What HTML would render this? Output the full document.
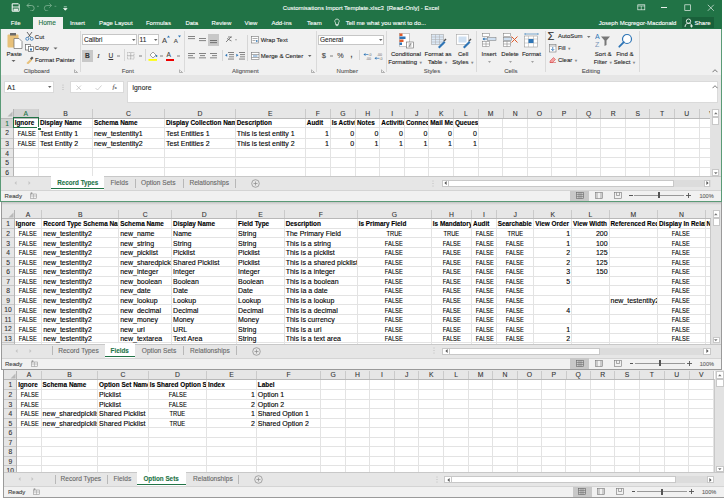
<!DOCTYPE html>
<html><head><meta charset="utf-8"><style>
html,body{margin:0;padding:0;}
body{width:724px;height:499px;overflow:hidden;position:relative;background:#fff;font-family:"Liberation Sans",sans-serif;}
body>div,body div{position:absolute;}
.t{white-space:nowrap;-webkit-text-stroke-width:0.1px;}
</style></head><body>
<div style="left:0px;top:0px;width:722px;height:29px;background:#217346;"></div>
<svg style="position:absolute;left:11px;top:3px;" width="9" height="9" viewBox="0 0 9 9"><path d="M1.2 0.8h6.2l0.8 0.8v6.6h-7z" fill="none" stroke="#fff" stroke-width="1"/><path d="M1.2 4h7" stroke="#fff" stroke-width="0.9"/><rect x="2.5" y="5.6" width="4.5" height="2.2" fill="#fff" opacity="0.85"/></svg>
<svg style="position:absolute;left:25px;top:2px;" width="34" height="9" viewBox="0 0 34 9"><path d="M2 3.5 h4.5 a2.7 2.7 0 0 1 0 5.4 h-1.2 M2 3.5 l2.2-2.2 M2 3.5 l2.2 2.2" fill="none" stroke="#8fbca0" stroke-width="0.8"/><path d="M12 4.3h1.8" stroke="#8fbca0" stroke-width="0.7"/><path d="M26.5 3.5 h-4.5 a2.7 2.7 0 0 0 0 5.4 h1.2 M26.5 3.5 l-2.2-2.2 M26.5 3.5 l-2.2 2.2" fill="none" stroke="#78ad8e" stroke-width="0.8"/><path d="M29.5 4.3h1.8" stroke="#78ad8e" stroke-width="0.7"/></svg>
<svg style="position:absolute;left:62.5px;top:5.5px;" width="5" height="5" viewBox="0 0 5 5"><path d="M0.8 0.8h3 M0.5 2.5h3.6 l-1.8 1.8z" fill="#fff" stroke="#fff" stroke-width="0.6"/></svg>
<div class="t" style="left:251.0px;width:220px;text-align:center;top:3.3000000000000007px;line-height:10px;font-size:6.0px;color:#fff;font-weight:normal;">Customisations Import Template.xlsc3&nbsp; [Read-Only] - Excel</div>
<svg style="position:absolute;left:636.5px;top:4px;" width="9" height="7" viewBox="0 0 9 7"><rect x="0.8" y="0.8" width="7" height="5" fill="none" stroke="#e8f0eb" stroke-width="0.7"/><path d="M0.8 2h7 M4.3 2v3.8" stroke="#e8f0eb" stroke-width="0.6"/></svg>
<div style="left:661px;top:7.1px;width:6px;height:0.7px;background:#e8f0eb;"></div>
<svg style="position:absolute;left:683.5px;top:4px;" width="8" height="8" viewBox="0 0 8 8"><rect x="0.8" y="0.8" width="5.6" height="5.6" fill="none" stroke="#e8f0eb" stroke-width="0.7"/></svg>
<svg style="position:absolute;left:706.5px;top:4px;" width="8" height="8" viewBox="0 0 8 8"><path d="M0.8 0.8l6 6M6.8 0.8l-6 6" stroke="#e8f0eb" stroke-width="0.7"/></svg>
<div style="left:32.5px;top:17px;width:30px;height:12px;background:#f1f1f1;"></div>
<div class="t" style="left:10.8px;top:17.8px;line-height:10px;font-size:6.0px;color:#fff;font-weight:normal;">File</div>
<div class="t" style="left:69.9px;top:17.8px;line-height:10px;font-size:6.0px;color:#fff;font-weight:normal;">Insert</div>
<div class="t" style="left:98.9px;top:17.8px;line-height:10px;font-size:6.0px;color:#fff;font-weight:normal;">Page Layout</div>
<div class="t" style="left:145.9px;top:17.8px;line-height:10px;font-size:6.0px;color:#fff;font-weight:normal;">Formulas</div>
<div class="t" style="left:185.4px;top:17.8px;line-height:10px;font-size:6.0px;color:#fff;font-weight:normal;">Data</div>
<div class="t" style="left:211.6px;top:17.8px;line-height:10px;font-size:6.0px;color:#fff;font-weight:normal;">Review</div>
<div class="t" style="left:244.5px;top:17.8px;line-height:10px;font-size:6.0px;color:#fff;font-weight:normal;">View</div>
<div class="t" style="left:271.4px;top:17.8px;line-height:10px;font-size:6.0px;color:#fff;font-weight:normal;">Add-ins</div>
<div class="t" style="left:307px;top:17.8px;line-height:10px;font-size:6.0px;color:#fff;font-weight:normal;">Team</div>
<div class="t" style="left:38.5px;top:17.8px;line-height:10px;font-size:6.5px;color:#217346;font-weight:normal;">Home</div>
<svg style="position:absolute;left:334px;top:18px;" width="6" height="9" viewBox="0 0 6 9"><path d="M3 1a2.2 2.2 0 0 1 1.4 3.9v1.6h-2.8v-1.6a2.2 2.2 0 0 1 1.4-3.9z M1.8 7.6h2.4" fill="none" stroke="#fff" stroke-width="0.7"/></svg>
<div class="t" style="left:345.7px;top:17.8px;line-height:10px;font-size:6.1px;color:#fff;font-weight:normal;">Tell me what you want to do...</div>
<div class="t" style="left:598.7px;top:17.8px;line-height:10px;font-size:6.0px;color:#fff;font-weight:normal;">Joseph Mcgregor-Macdonald</div>
<div style="left:681.7px;top:16.8px;width:32.3px;height:11.7px;background:#19603a;"></div>
<svg style="position:absolute;left:684px;top:18px;" width="10" height="10" viewBox="0 0 10 10"><circle cx="4.5" cy="3.2" r="2.2" fill="none" stroke="#fff" stroke-width="0.8"/><path d="M1 9a3.6 3.6 0 0 1 6.5-2.4 M7.5 6.5v3 M6 8h3" fill="none" stroke="#fff" stroke-width="0.8"/></svg>
<div class="t" style="left:694.5px;top:17.8px;line-height:10px;font-size:6.0px;color:#fff;font-weight:normal;">Share</div>
<div style="left:721px;top:29px;width:1px;height:172.6px;background:#5a9a76;"></div>
<div style="left:0px;top:29px;width:1px;height:172.6px;background:#5a9a76;"></div>
<div style="left:721px;top:0px;width:1px;height:29px;background:#217346;"></div>
<div style="left:0px;top:0px;width:1px;height:29px;background:#217346;"></div>
<div style="left:1px;top:29px;width:720px;height:45.7px;background:#f1f1f1;"></div>
<div style="left:1px;top:74.7px;width:720px;height:0.6px;background:#d6d6d6;"></div>
<svg style="position:absolute;left:6px;top:32px;" width="18" height="17" viewBox="0 0 18 17"><rect x="1.5" y="2.5" width="11" height="13" rx="1" fill="#e8c17a"/><rect x="4" y="1" width="6" height="2.5" fill="#6b6b6b"/><path d="M8 6.5h5l3 3v7h-8z" fill="#fff" stroke="#6b6b6b" stroke-width="0.7"/></svg>
<div class="t" style="left:6.6px;top:48.7px;line-height:10px;font-size:6.0px;color:#262626;font-weight:normal;">Paste</div>
<svg style="position:absolute;left:11px;top:59px;" width="5" height="4" viewBox="0 0 5 4"><path d="M0.5 1l2 2 2-2z" fill="#666"/></svg>
<svg style="position:absolute;left:25px;top:31px;" width="9" height="10" viewBox="0 0 9 10"><path d="M2 1l4 5.5M7 1l-4 5.5" stroke="#444" stroke-width="0.8"/><circle cx="2.3" cy="7.8" r="1.5" fill="none" stroke="#2e75b6" stroke-width="0.8"/><circle cx="6.7" cy="7.8" r="1.5" fill="none" stroke="#2e75b6" stroke-width="0.8"/></svg>
<div class="t" style="left:34.8px;top:31.6px;line-height:10px;font-size:6.0px;color:#262626;font-weight:normal;">Cut</div>
<svg style="position:absolute;left:25px;top:44px;" width="9" height="8" viewBox="0 0 9 8"><rect x="0.5" y="0.5" width="5" height="5.5" fill="#fff" stroke="#666" stroke-width="0.7"/><rect x="3.5" y="2.5" width="5" height="5" fill="#fff" stroke="#666" stroke-width="0.7"/><rect x="5" y="4.5" width="2" height="2" fill="#2e75b6"/></svg>
<div class="t" style="left:34.8px;top:43.2px;line-height:10px;font-size:6.0px;color:#262626;font-weight:normal;">Copy</div>
<svg style="position:absolute;left:53px;top:47px;" width="5" height="3" viewBox="0 0 5 3"><path d="M0.5 0.5h4l-2 2z" fill="#666"/></svg>
<svg style="position:absolute;left:25px;top:55px;" width="9" height="9" viewBox="0 0 9 9"><path d="M1.5 8l4-4 1.5 1.5-4 4z" fill="#e8c17a"/><path d="M5 3.5l2-2 1.5 1.5-2 2z" fill="#555"/></svg>
<div class="t" style="left:35.1px;top:54.5px;line-height:10px;font-size:6.0px;color:#262626;font-weight:normal;">Format Painter</div>
<div class="t" style="left:23.8px;top:65.9px;line-height:10px;font-size:6.0px;color:#555;font-weight:normal;">Clipboard</div>
<svg style="position:absolute;left:74px;top:69px;" width="4" height="4" viewBox="0 0 4 4"><path d="M0.5 0.5v3h3M1.5 1.5l2 2" fill="none" stroke="#888" stroke-width="0.6"/></svg>
<div style="left:79.6px;top:31px;width:0.7px;height:41px;background:#dadada;"></div>
<div style="left:82.3px;top:34.4px;width:55px;height:11.1px;background:#fff;border:0.6px solid #c6c6c6;box-sizing:border-box"></div>
<div class="t" style="left:84px;top:35.0px;line-height:10px;font-size:6.5px;color:#262626;font-weight:normal;">Calibri</div>
<svg style="position:absolute;left:132px;top:39px;" width="4" height="3" viewBox="0 0 4 3"><path d="M0 0h3.5l-1.75 2z" fill="#666"/></svg>
<div style="left:137.8px;top:34.4px;width:20.8px;height:11.1px;background:#fff;border:0.6px solid #c6c6c6;box-sizing:border-box"></div>
<div class="t" style="left:139.5px;top:35.0px;line-height:10px;font-size:6.5px;color:#262626;font-weight:normal;">11</div>
<svg style="position:absolute;left:153.5px;top:39px;" width="4" height="3" viewBox="0 0 4 3"><path d="M0 0h3.5l-1.75 2z" fill="#666"/></svg>
<div class="t" style="left:162px;top:35.5px;line-height:10px;font-size:7.5px;color:#444;font-weight:normal;">A</div>
<svg style="position:absolute;left:167px;top:35px;" width="3" height="3" viewBox="0 0 3 3"><path d="M0 2.5l1.5-2 1.5 2z" fill="#2e75b6"/></svg>
<div class="t" style="left:173.8px;top:36.0px;line-height:10px;font-size:6.2px;color:#444;font-weight:normal;">A</div>
<svg style="position:absolute;left:178px;top:35px;" width="3" height="3" viewBox="0 0 3 3"><path d="M0 0.5l1.5 2 1.5-2z" fill="#2e75b6"/></svg>
<div style="left:82.3px;top:50px;width:10.6px;height:11.5px;background:#c8c8c8;"></div>
<div class="t" style="left:85px;top:50.8px;line-height:10px;font-size:6.6px;color:#333;font-weight:bold;">B</div>
<div class="t" style="left:97.3px;top:50.8px;line-height:10px;font-size:6.8px;color:#333;font-weight:normal;font-style:italic;font-family:'Liberation Serif',serif">I</div>
<div class="t" style="left:108.5px;top:50.5px;line-height:10px;font-size:6.6px;color:#333;font-weight:normal;"><u>U</u></div>
<svg style="position:absolute;left:116.5px;top:54.5px;" width="4" height="2" viewBox="0 0 4 2"><path d="M0 1h3" stroke="#666" stroke-width="0.8"/></svg>
<div style="left:123.6px;top:49px;width:0.6px;height:12px;background:#d6d6d6;"></div>
<svg style="position:absolute;left:126.5px;top:52px;" width="8" height="8" viewBox="0 0 8 8"><rect x="0.5" y="0.5" width="6.5" height="6.5" fill="none" stroke="#999" stroke-width="0.6" stroke-dasharray="1 0.6"/><path d="M3.75 0.5v6.5M0.5 3.75h6.5" stroke="#999" stroke-width="0.6"/></svg>
<svg style="position:absolute;left:138.5px;top:54.5px;" width="4" height="2" viewBox="0 0 4 2"><path d="M0 1h3" stroke="#666" stroke-width="0.8"/></svg>
<div style="left:145px;top:49px;width:0.6px;height:12px;background:#d6d6d6;"></div>
<svg style="position:absolute;left:148px;top:50px;" width="10" height="11" viewBox="0 0 10 11"><path d="M2 5l3-3 3 3-3 3z" fill="#fff" stroke="#666" stroke-width="0.6"/><circle cx="8.5" cy="6" r="0.9" fill="#2e75b6"/><rect x="0.5" y="9" width="8.5" height="1.8" fill="#ffff00"/></svg>
<svg style="position:absolute;left:159.5px;top:54.5px;" width="4" height="2" viewBox="0 0 4 2"><path d="M0 1h3" stroke="#666" stroke-width="0.8"/></svg>
<div class="t" style="left:166.5px;top:50.0px;line-height:10px;font-size:6.6px;color:#444;font-weight:normal;">A</div>
<div style="left:165.7px;top:59.2px;width:8px;height:1.8px;background:#e00;"></div>
<svg style="position:absolute;left:177.3px;top:54.5px;" width="4" height="2" viewBox="0 0 4 2"><path d="M0 1h3" stroke="#666" stroke-width="0.8"/></svg>
<div class="t" style="left:121.8px;top:65.6px;line-height:10px;font-size:6.0px;color:#555;font-weight:normal;">Font</div>
<svg style="position:absolute;left:178.5px;top:69px;" width="4" height="4" viewBox="0 0 4 4"><path d="M0.5 0.5v3h3M1.5 1.5l2 2" fill="none" stroke="#888" stroke-width="0.6"/></svg>
<div style="left:183.6px;top:31px;width:0.7px;height:41px;background:#dadada;"></div>
<svg style="position:absolute;left:187.5px;top:36px;" width="8" height="5" viewBox="0 0 8 5"><rect x="0" y="0" width="7" height="0.9" fill="#777"/><rect x="0" y="2.2" width="7" height="0.9" fill="#777"/></svg>
<svg style="position:absolute;left:199px;top:37.5px;" width="8" height="5" viewBox="0 0 8 5"><rect x="0" y="0" width="7" height="0.9" fill="#777"/><rect x="0" y="2.2" width="7" height="0.9" fill="#777"/></svg>
<div style="left:207.8px;top:34.3px;width:10.8px;height:11.3px;background:#c8c8c8;"></div>
<svg style="position:absolute;left:209.5px;top:40px;" width="8" height="5" viewBox="0 0 8 5"><rect x="0" y="0" width="7" height="0.9" fill="#666"/><rect x="0" y="2.2" width="7" height="0.9" fill="#666"/></svg>
<svg style="position:absolute;left:224.9px;top:36px;" width="12" height="8" viewBox="0 0 12 8"><path d="M1 6l5-5 M2 2.5l4.5 2.5 M3 1h4" stroke="#666" stroke-width="0.8" fill="none"/><path d="M10 3.5l1 1 1-1z" fill="#666"/></svg>
<svg style="position:absolute;left:187.5px;top:52.5px;" width="8" height="7" viewBox="0 0 8 7"><rect x="0" y="0.0" width="7" height="0.9" fill="#777"/><rect x="0" y="2.2" width="5" height="0.9" fill="#777"/><rect x="0" y="4.4" width="7" height="0.9" fill="#777"/></svg>
<svg style="position:absolute;left:198.9px;top:52.5px;" width="8" height="7" viewBox="0 0 8 7"><rect x="0.0" y="0.0" width="7" height="0.9" fill="#777"/><rect x="1.0" y="2.2" width="5" height="0.9" fill="#777"/><rect x="0.0" y="4.4" width="7" height="0.9" fill="#777"/></svg>
<svg style="position:absolute;left:209.6px;top:52.5px;" width="8" height="7" viewBox="0 0 8 7"><rect x="0" y="0.0" width="7" height="0.9" fill="#777"/><rect x="2" y="2.2" width="5" height="0.9" fill="#777"/><rect x="0" y="4.4" width="7" height="0.9" fill="#777"/></svg>
<svg style="position:absolute;left:224.9px;top:51.5px;" width="9" height="8" viewBox="0 0 9 8"><rect x="3" y="0" width="6" height="0.9" fill="#777"/><rect x="4" y="2.2" width="5" height="0.9" fill="#777"/><rect x="4" y="4.4" width="5" height="0.9" fill="#777"/><rect x="3" y="6.6" width="6" height="0.9" fill="#777"/><path d="M0 3.2l2.2-1.5v3z" fill="#2e75b6"/></svg>
<svg style="position:absolute;left:235.7px;top:51.5px;" width="9" height="8" viewBox="0 0 9 8"><rect x="3" y="0" width="6" height="0.9" fill="#777"/><rect x="4" y="2.2" width="5" height="0.9" fill="#777"/><rect x="4" y="4.4" width="5" height="0.9" fill="#777"/><rect x="3" y="6.6" width="6" height="0.9" fill="#777"/><path d="M2.5 3.2l-2.2-1.5v3z" fill="#2e75b6"/></svg>
<div style="left:221.7px;top:50px;width:0.6px;height:11px;background:#d6d6d6;"></div>
<div style="left:247.3px;top:35px;width:0.6px;height:26px;background:#d6d6d6;"></div>
<svg style="position:absolute;left:250.9px;top:36px;" width="9" height="8" viewBox="0 0 9 8"><rect x="0.5" y="0.5" width="7" height="6.5" fill="#fff" stroke="#777" stroke-width="0.6"/><path d="M1.5 2.5h5M1.5 4.5h3" stroke="#777" stroke-width="0.6"/><path d="M5 4l2.5 1-2.5 1z" fill="#2e75b6"/></svg>
<div class="t" style="left:260.8px;top:35.3px;line-height:10px;font-size:6.0px;color:#262626;font-weight:normal;">Wrap Text</div>
<svg style="position:absolute;left:250.9px;top:51.5px;" width="9" height="8" viewBox="0 0 9 8"><rect x="0.5" y="0.5" width="7.5" height="7" fill="#fff" stroke="#777" stroke-width="0.6"/><path d="M0.5 2.5h7.5M0.5 5.5h7.5" stroke="#777" stroke-width="0.6"/><path d="M2 4h4.5" stroke="#2e75b6" stroke-width="0.8"/></svg>
<div class="t" style="left:260.8px;top:50.9px;line-height:10px;font-size:6.0px;color:#262626;font-weight:normal;">Merge &amp; Center</div>
<svg style="position:absolute;left:307.5px;top:55px;" width="4" height="3" viewBox="0 0 4 3"><path d="M0 0h3.5l-1.75 2z" fill="#666"/></svg>
<div class="t" style="left:232px;top:65.8px;line-height:10px;font-size:6.0px;color:#555;font-weight:normal;">Alignment</div>
<svg style="position:absolute;left:310.5px;top:69px;" width="4" height="4" viewBox="0 0 4 4"><path d="M0.5 0.5v3h3M1.5 1.5l2 2" fill="none" stroke="#888" stroke-width="0.6"/></svg>
<div style="left:315.5px;top:31px;width:0.7px;height:41px;background:#dadada;"></div>
<div style="left:318.2px;top:34.7px;width:65.4px;height:10.7px;background:#fff;border:0.6px solid #c6c6c6;box-sizing:border-box"></div>
<div class="t" style="left:320px;top:35.1px;line-height:10px;font-size:6.5px;color:#262626;font-weight:normal;">General</div>
<svg style="position:absolute;left:378.5px;top:39px;" width="4" height="3" viewBox="0 0 4 3"><path d="M0 0h3.5l-1.75 2z" fill="#666"/></svg>
<div class="t" style="left:321.8px;top:50.5px;line-height:10px;font-size:7.5px;color:#444;font-weight:normal;">$</div>
<svg style="position:absolute;left:330px;top:54.5px;" width="4" height="2" viewBox="0 0 4 2"><path d="M0 1h3" stroke="#666" stroke-width="0.8"/></svg>
<div class="t" style="left:337.3px;top:50.5px;line-height:10px;font-size:7.2px;color:#444;font-weight:normal;">%</div>
<div class="t" style="left:350.5px;top:50.0px;line-height:10px;font-size:7px;color:#444;font-weight:bold;">,</div>
<div style="left:359.4px;top:50px;width:0.6px;height:10px;background:#d6d6d6;"></div>
<svg style="position:absolute;left:362.5px;top:51.5px;" width="9" height="8" viewBox="0 0 9 8"><path d="M0.5 2.5l2-1.5v3z" fill="#2e75b6"/><path d="M2.5 2.5h3" stroke="#2e75b6" stroke-width="0.7"/><text x="5.5" y="3.6" font-size="3.6" fill="#666" font-family="Liberation Sans">.0</text><text x="3" y="7.5" font-size="3.6" fill="#666" font-family="Liberation Sans">.00</text></svg>
<svg style="position:absolute;left:373.9px;top:51.5px;" width="9" height="8" viewBox="0 0 9 8"><text x="3" y="3.6" font-size="3.6" fill="#666" font-family="Liberation Sans">.00</text><path d="M0.5 6.3l2-1.5v3z" fill="#2e75b6"/><path d="M2.5 6.3h3" stroke="#2e75b6" stroke-width="0.7"/><text x="5.5" y="7.5" font-size="3.6" fill="#666" font-family="Liberation Sans">.0</text></svg>
<div class="t" style="left:336.6px;top:66.0px;line-height:10px;font-size:6.0px;color:#555;font-weight:normal;">Number</div>
<svg style="position:absolute;left:381px;top:69px;" width="4" height="4" viewBox="0 0 4 4"><path d="M0.5 0.5v3h3M1.5 1.5l2 2" fill="none" stroke="#888" stroke-width="0.6"/></svg>
<div style="left:385.6px;top:31px;width:0.7px;height:41px;background:#dadada;"></div>
<svg style="position:absolute;left:398.5px;top:32.5px;" width="16" height="16" viewBox="0 0 16 16"><g stroke="#999" stroke-width="0.5" fill="#fff"><rect x="0.5" y="0.5" width="10" height="13"/></g><rect x="0.5" y="0.5" width="3" height="2.5" fill="#e05a2b"/><rect x="0.5" y="3.5" width="6" height="2.5" fill="#2e75b6"/><rect x="0.5" y="6.5" width="4" height="2.5" fill="#e05a2b"/><rect x="0.5" y="9.5" width="2.5" height="2.5" fill="#2e75b6"/><rect x="7.5" y="9" width="7" height="6" fill="#fff" stroke="#666" stroke-width="0.6"/><path d="M9.5 11h3M9.5 13h3M12 10.3l-2 3.5" stroke="#444" stroke-width="0.5"/></svg>
<div class="t" style="left:376.0px;width:60px;text-align:center;top:48.6px;line-height:10px;font-size:6.0px;color:#262626;font-weight:normal;">Conditional</div>
<div class="t" style="left:375.5px;width:60px;text-align:center;top:56.5px;line-height:10px;font-size:6.0px;color:#262626;font-weight:normal;">Formatting <span style="font-size:4px;color:#888;vertical-align:0.5px">&#9660;</span></div>
<svg style="position:absolute;left:431px;top:33.5px;" width="16" height="15" viewBox="0 0 16 15"><rect x="0.5" y="0.5" width="12" height="10" fill="#dbe8f5" stroke="#999" stroke-width="0.5"/><path d="M0.5 3h12M0.5 5.5h12M0.5 8h12M4.5 0.5v10M8.5 0.5v10" stroke="#aaa" stroke-width="0.5"/><path d="M7 13l6-6 1.5 1.5-6 6z" fill="#2e75b6"/><path d="M12.5 6.5l2-2 1 1-2 2z" fill="#555"/></svg>
<div class="t" style="left:408.0px;width:60px;text-align:center;top:48.6px;line-height:10px;font-size:6.0px;color:#262626;font-weight:normal;">Format as</div>
<div class="t" style="left:408.0px;width:60px;text-align:center;top:56.5px;line-height:10px;font-size:6.0px;color:#262626;font-weight:normal;">Table <span style="font-size:4px;color:#888;vertical-align:0.5px">&#9660;</span></div>
<svg style="position:absolute;left:456px;top:33.5px;" width="16" height="15" viewBox="0 0 16 15"><rect x="0.5" y="0.5" width="12" height="10" fill="#fff" stroke="#999" stroke-width="0.5"/><rect x="2.5" y="2.5" width="8" height="6" fill="#cfe0f1"/><path d="M7 13l6-6 1.5 1.5-6 6z" fill="#2e75b6"/><path d="M12.5 6.5l2-2 1 1-2 2z" fill="#555"/></svg>
<div class="t" style="left:443.2px;width:40px;text-align:center;top:48.6px;line-height:10px;font-size:6.0px;color:#262626;font-weight:normal;">Cell</div>
<div class="t" style="left:443.2px;width:40px;text-align:center;top:56.5px;line-height:10px;font-size:6.0px;color:#262626;font-weight:normal;">Styles <span style="font-size:4px;color:#888;vertical-align:0.5px">&#9660;</span></div>
<div class="t" style="left:423.8px;top:66.0px;line-height:10px;font-size:6.0px;color:#555;font-weight:normal;">Styles</div>
<div style="left:476.3px;top:31px;width:0.7px;height:41px;background:#dadada;"></div>
<svg style="position:absolute;left:482px;top:33px;" width="15" height="14" viewBox="0 0 15 14"><rect x="0.5" y="0.5" width="7" height="3" fill="#fff" stroke="#777" stroke-width="0.5"/><rect x="5.5" y="4.5" width="8.5" height="3" fill="#cfe0f1" stroke="#777" stroke-width="0.5"/><path d="M1 6h4" stroke="#2e75b6" stroke-width="0.9"/><path d="M0.5 6l2-1.5v3z" fill="#2e75b6"/><rect x="0.5" y="8.5" width="7" height="5" fill="#fff" stroke="#777" stroke-width="0.5"/><path d="M0.5 11h7M4 8.5v5" stroke="#777" stroke-width="0.5"/></svg>
<div class="t" style="left:469.0px;width:40px;text-align:center;top:48.6px;line-height:10px;font-size:6.0px;color:#262626;font-weight:normal;">Insert</div>
<svg style="position:absolute;left:487px;top:60px;" width="5" height="4" viewBox="0 0 5 4"><path d="M1 1.2l1.5 1.5 1.5-1.5z" fill="#888"/></svg>
<svg style="position:absolute;left:502.5px;top:33px;" width="16" height="14" viewBox="0 0 16 14"><rect x="0.5" y="0.5" width="7" height="3" fill="#fff" stroke="#777" stroke-width="0.5"/><rect x="0.5" y="4.5" width="8" height="3" fill="#cfe0f1" stroke="#777" stroke-width="0.5"/><rect x="0.5" y="8.5" width="7" height="5" fill="#fff" stroke="#777" stroke-width="0.5"/><path d="M0.5 11h7M4 8.5v5" stroke="#777" stroke-width="0.5"/><path d="M8.5 3.5l6 6M14.5 3.5l-6 6" stroke="#e05a2b" stroke-width="1"/></svg>
<div class="t" style="left:490.0px;width:40px;text-align:center;top:48.6px;line-height:10px;font-size:6.0px;color:#262626;font-weight:normal;">Delete</div>
<svg style="position:absolute;left:507.8px;top:60px;" width="5" height="4" viewBox="0 0 5 4"><path d="M1 1.2l1.5 1.5 1.5-1.5z" fill="#888"/></svg>
<svg style="position:absolute;left:523.5px;top:32.5px;" width="16" height="15" viewBox="0 0 16 15"><path d="M1 1h13M1 0v2M14 0v2" stroke="#2e75b6" stroke-width="0.6"/><rect x="0.5" y="3" width="13" height="11" fill="#fff" stroke="#888" stroke-width="0.5"/><path d="M0.5 6h13M0.5 10h13M4.5 3v11M9.5 3v11" stroke="#aaa" stroke-width="0.5"/><rect x="4.5" y="6" width="5" height="4" fill="#2e75b6"/></svg>
<div class="t" style="left:511.4px;width:40px;text-align:center;top:48.6px;line-height:10px;font-size:6.0px;color:#262626;font-weight:normal;">Format</div>
<svg style="position:absolute;left:529.5px;top:60px;" width="5" height="4" viewBox="0 0 5 4"><path d="M1 1.2l1.5 1.5 1.5-1.5z" fill="#888"/></svg>
<div class="t" style="left:504.2px;top:66.0px;line-height:10px;font-size:6.0px;color:#555;font-weight:normal;">Cells</div>
<div style="left:544.5px;top:31px;width:0.7px;height:41px;background:#dadada;"></div>
<div class="t" style="left:547.5px;top:30.299999999999997px;line-height:12px;font-size:11px;color:#333;font-weight:normal;">&Sigma;</div>
<div class="t" style="left:557.9px;top:31.4px;line-height:10px;font-size:6.0px;color:#262626;font-weight:normal;">AutoSum</div>
<svg style="position:absolute;left:587px;top:35.5px;" width="4" height="3" viewBox="0 0 4 3"><path d="M0 0h3.5l-1.75 2z" fill="#777"/></svg>
<svg style="position:absolute;left:548.5px;top:43.5px;" width="8" height="9" viewBox="0 0 8 9"><rect x="0.5" y="0.5" width="6.5" height="7.5" fill="#fff" stroke="#777" stroke-width="0.6"/><path d="M0.5 2h6.5" stroke="#777" stroke-width="0.6"/><path d="M3.75 3v3.5M2.2 5l1.55 1.6 1.55-1.6" fill="none" stroke="#2e75b6" stroke-width="0.8"/></svg>
<div class="t" style="left:557.9px;top:42.8px;line-height:10px;font-size:6.0px;color:#262626;font-weight:normal;">Fill <span style="font-size:4px;color:#888;vertical-align:0.5px">&#9660;</span></div>
<svg style="position:absolute;left:549px;top:56px;" width="8" height="7" viewBox="0 0 8 7"><path d="M1 5l3.5-3.5 2 2-3.5 3.5h-2z" fill="#f4a0a0" stroke="#d04040" stroke-width="0.5"/><path d="M1 6.5h6" stroke="#d04040" stroke-width="0.5"/></svg>
<div class="t" style="left:557.9px;top:54.7px;line-height:10px;font-size:6.0px;color:#262626;font-weight:normal;">Clear <span style="font-size:4px;color:#888;vertical-align:0.5px">&#9660;</span></div>
<svg style="position:absolute;left:595px;top:33px;" width="16" height="14" viewBox="0 0 16 14"><text x="0" y="6" font-size="7" fill="#2e75b6" font-family="Liberation Sans">A</text><text x="0" y="13.5" font-size="7" fill="#7a96b8" font-family="Liberation Sans">Z</text><path d="M6 3.5h9l-3.5 4v4.5l-2 1v-5.5z" fill="#777"/></svg>
<div class="t" style="left:583.2px;width:40px;text-align:center;top:48.6px;line-height:10px;font-size:6.0px;color:#262626;font-weight:normal;">Sort &amp;</div>
<div class="t" style="left:583.2px;width:40px;text-align:center;top:56.5px;line-height:10px;font-size:6.0px;color:#262626;font-weight:normal;">Filter <span style="font-size:4px;color:#888;vertical-align:0.5px">&#9660;</span></div>
<svg style="position:absolute;left:617.5px;top:32.5px;" width="15" height="15" viewBox="0 0 15 15"><circle cx="9" cy="6" r="4.5" fill="#fff" stroke="#2e75b6" stroke-width="1.2"/><path d="M5.8 9.2l-4.5 4.5" stroke="#2e75b6" stroke-width="1.8" stroke-linecap="round"/></svg>
<div class="t" style="left:604.8px;width:40px;text-align:center;top:48.6px;line-height:10px;font-size:6.0px;color:#262626;font-weight:normal;">Find &amp;</div>
<div class="t" style="left:604.8px;width:40px;text-align:center;top:56.5px;line-height:10px;font-size:6.0px;color:#262626;font-weight:normal;">Select <span style="font-size:4px;color:#888;vertical-align:0.5px">&#9660;</span></div>
<div class="t" style="left:581.8px;top:66.0px;line-height:10px;font-size:6.0px;color:#555;font-weight:normal;">Editing</div>
<div style="left:638.5px;top:31px;width:0.7px;height:41px;background:#dadada;"></div>
<svg style="position:absolute;left:711.5px;top:69px;" width="6" height="4" viewBox="0 0 6 4"><path d="M0.5 3.2l2.5-2.5 2.5 2.5" fill="none" stroke="#555" stroke-width="0.8"/></svg>
<div style="left:1px;top:75.3px;width:720px;height:33.7px;background:#e6e6e6;"></div>
<div style="left:3.7px;top:80.8px;width:50.6px;height:12.4px;background:#fff;border:0.6px solid #dadada;box-sizing:border-box"></div>
<div class="t" style="left:7.3px;top:82.8px;line-height:10px;font-size:6.6px;color:#262626;font-weight:normal;">A1</div>
<svg style="position:absolute;left:47.5px;top:85.5px;" width="4" height="3" viewBox="0 0 4 3"><path d="M0 0h3.5l-1.75 2z" fill="#666"/></svg>
<svg style="position:absolute;left:61.5px;top:84px;" width="2" height="7" viewBox="0 0 2 7"><circle cx="1" cy="1" r="0.5" fill="#aaa"/><circle cx="1" cy="3.2" r="0.5" fill="#aaa"/><circle cx="1" cy="5.4" r="0.5" fill="#aaa"/></svg>
<div style="left:70px;top:80.8px;width:54.3px;height:12.4px;background:#fff;border:0.6px solid #dadada;box-sizing:border-box"></div>
<svg style="position:absolute;left:76.3px;top:84.5px;" width="6" height="6" viewBox="0 0 6 6"><path d="M0.5 0.5l4.5 4.5M5 0.5l-4.5 4.5" stroke="#bbb" stroke-width="0.7"/></svg>
<svg style="position:absolute;left:94.5px;top:84.5px;" width="7" height="6" viewBox="0 0 7 6"><path d="M0.5 3l2 2 4-4.5" fill="none" stroke="#bbb" stroke-width="0.7"/></svg>
<div class="t" style="left:112.5px;top:81.8px;line-height:10px;font-size:7px;color:#555;font-weight:normal;font-family:'Liberation Serif',serif"><i>f</i><span style="font-size:4.5px">x</span></div>
<div style="left:126.8px;top:80.8px;width:591.5px;height:22.2px;background:#fff;border:0.6px solid #dadada;box-sizing:border-box"></div>
<div class="t" style="left:132.2px;top:82.8px;line-height:10px;font-size:6.8px;color:#262626;font-weight:normal;">Ignore</div>
<svg style="position:absolute;left:711.5px;top:85px;" width="6" height="4" viewBox="0 0 6 4"><path d="M0.5 3.2l2.5-2.5 2.5 2.5" fill="none" stroke="#555" stroke-width="0.8"/></svg>
<div style="left:1px;top:109px;width:709.2px;height:8.799999999999997px;background:#e6e6e6;"></div>
<div style="left:1px;top:117.8px;width:12.3px;height:58.39999999999999px;background:#e6e6e6;"></div>
<div style="left:13.3px;top:117.8px;width:696.9000000000001px;height:58.39999999999999px;background:#fff;"></div>
<div style="left:13.3px;top:109px;width:25.2px;height:8.799999999999997px;background:#d2d2d2;"></div>
<div style="left:1px;top:117.8px;width:12.3px;height:9.900000000000006px;background:#d2d2d2;"></div>
<svg style="position:absolute;left:6.800000000000001px;top:111.3px;" width="6" height="6" viewBox="0 0 6 6"><path d="M5.5 0.5v5h-5z" fill="#b8b8b8"/></svg>
<div style="left:38.0px;top:109px;width:0.8px;height:8.799999999999997px;background:#cacaca;"></div>
<div style="left:37.9px;top:117.8px;width:0.8px;height:58.39999999999999px;background:#e3e3e3;"></div>
<div style="left:92.0px;top:109px;width:0.8px;height:8.799999999999997px;background:#cacaca;"></div>
<div style="left:91.9px;top:117.8px;width:0.8px;height:58.39999999999999px;background:#e3e3e3;"></div>
<div style="left:164.1px;top:109px;width:0.8px;height:8.799999999999997px;background:#cacaca;"></div>
<div style="left:164.0px;top:117.8px;width:0.8px;height:58.39999999999999px;background:#e3e3e3;"></div>
<div style="left:234.8px;top:109px;width:0.8px;height:8.799999999999997px;background:#cacaca;"></div>
<div style="left:234.70000000000002px;top:117.8px;width:0.8px;height:58.39999999999999px;background:#e3e3e3;"></div>
<div style="left:304.9px;top:109px;width:0.8px;height:8.799999999999997px;background:#cacaca;"></div>
<div style="left:304.79999999999995px;top:117.8px;width:0.8px;height:58.39999999999999px;background:#e3e3e3;"></div>
<div style="left:329.8px;top:109px;width:0.8px;height:8.799999999999997px;background:#cacaca;"></div>
<div style="left:329.7px;top:117.8px;width:0.8px;height:58.39999999999999px;background:#e3e3e3;"></div>
<div style="left:355.1px;top:109px;width:0.8px;height:8.799999999999997px;background:#cacaca;"></div>
<div style="left:355.0px;top:117.8px;width:0.8px;height:58.39999999999999px;background:#e3e3e3;"></div>
<div style="left:379.4px;top:109px;width:0.8px;height:8.799999999999997px;background:#cacaca;"></div>
<div style="left:379.29999999999995px;top:117.8px;width:0.8px;height:58.39999999999999px;background:#e3e3e3;"></div>
<div style="left:404.0px;top:109px;width:0.8px;height:8.799999999999997px;background:#cacaca;"></div>
<div style="left:403.9px;top:117.8px;width:0.8px;height:58.39999999999999px;background:#e3e3e3;"></div>
<div style="left:428.4px;top:109px;width:0.8px;height:8.799999999999997px;background:#cacaca;"></div>
<div style="left:428.29999999999995px;top:117.8px;width:0.8px;height:58.39999999999999px;background:#e3e3e3;"></div>
<div style="left:453.0px;top:109px;width:0.8px;height:8.799999999999997px;background:#cacaca;"></div>
<div style="left:452.9px;top:117.8px;width:0.8px;height:58.39999999999999px;background:#e3e3e3;"></div>
<div style="left:477.9px;top:109px;width:0.8px;height:8.799999999999997px;background:#cacaca;"></div>
<div style="left:477.79999999999995px;top:117.8px;width:0.8px;height:58.39999999999999px;background:#e3e3e3;"></div>
<div style="left:502.5px;top:109px;width:0.8px;height:8.799999999999997px;background:#cacaca;"></div>
<div style="left:502.4px;top:117.8px;width:0.8px;height:58.39999999999999px;background:#e3e3e3;"></div>
<div style="left:526.7px;top:109px;width:0.8px;height:8.799999999999997px;background:#cacaca;"></div>
<div style="left:526.6px;top:117.8px;width:0.8px;height:58.39999999999999px;background:#e3e3e3;"></div>
<div style="left:551.3px;top:109px;width:0.8px;height:8.799999999999997px;background:#cacaca;"></div>
<div style="left:551.1999999999999px;top:117.8px;width:0.8px;height:58.39999999999999px;background:#e3e3e3;"></div>
<div style="left:575.9px;top:109px;width:0.8px;height:8.799999999999997px;background:#cacaca;"></div>
<div style="left:575.8px;top:117.8px;width:0.8px;height:58.39999999999999px;background:#e3e3e3;"></div>
<div style="left:600.2px;top:109px;width:0.8px;height:8.799999999999997px;background:#cacaca;"></div>
<div style="left:600.1px;top:117.8px;width:0.8px;height:58.39999999999999px;background:#e3e3e3;"></div>
<div style="left:625.1px;top:109px;width:0.8px;height:8.799999999999997px;background:#cacaca;"></div>
<div style="left:625.0px;top:117.8px;width:0.8px;height:58.39999999999999px;background:#e3e3e3;"></div>
<div style="left:649.4px;top:109px;width:0.8px;height:8.799999999999997px;background:#cacaca;"></div>
<div style="left:649.3px;top:117.8px;width:0.8px;height:58.39999999999999px;background:#e3e3e3;"></div>
<div style="left:674.0px;top:109px;width:0.8px;height:8.799999999999997px;background:#cacaca;"></div>
<div style="left:673.9px;top:117.8px;width:0.8px;height:58.39999999999999px;background:#e3e3e3;"></div>
<div style="left:698.6px;top:109px;width:0.8px;height:8.799999999999997px;background:#cacaca;"></div>
<div style="left:698.5px;top:117.8px;width:0.8px;height:58.39999999999999px;background:#e3e3e3;"></div>
<div style="left:13.3px;top:127.4px;width:696.9000000000001px;height:0.7px;background:#e3e3e3;"></div>
<div style="left:1px;top:127.4px;width:12.3px;height:0.7px;background:#c8c8c8;"></div>
<div style="left:13.3px;top:137.89999999999998px;width:696.9000000000001px;height:0.7px;background:#e3e3e3;"></div>
<div style="left:1px;top:137.89999999999998px;width:12.3px;height:0.7px;background:#c8c8c8;"></div>
<div style="left:13.3px;top:148.0px;width:696.9000000000001px;height:0.7px;background:#e3e3e3;"></div>
<div style="left:1px;top:148.0px;width:12.3px;height:0.7px;background:#c8c8c8;"></div>
<div style="left:13.3px;top:157.39999999999998px;width:696.9000000000001px;height:0.7px;background:#e3e3e3;"></div>
<div style="left:1px;top:157.39999999999998px;width:12.3px;height:0.7px;background:#c8c8c8;"></div>
<div style="left:13.3px;top:167.1px;width:696.9000000000001px;height:0.7px;background:#e3e3e3;"></div>
<div style="left:1px;top:167.1px;width:12.3px;height:0.7px;background:#c8c8c8;"></div>
<div style="left:1px;top:117.6px;width:709.2px;height:0.9px;background:#b8b8b8;"></div>
<div style="left:709.6px;top:117.8px;width:0.8px;height:58.39999999999999px;background:#c8c8c8;"></div>
<div style="left:12.8px;top:109px;width:0.8px;height:67.19999999999999px;background:#b4b4b4;"></div>
<div style="left:13.3px;top:109px;width:25.2px;height:8.799999999999997px;overflow:hidden;"><div class="t" style="position:absolute;left:0;width:25.2px;text-align:center;top:0.7px;line-height:8.799999999999997px;font-size:6.8px;color:#217346;-webkit-text-stroke:0.1px #217346">A</div></div>
<div style="left:38.5px;top:109px;width:54.0px;height:8.799999999999997px;overflow:hidden;"><div class="t" style="position:absolute;left:0;width:54.0px;text-align:center;top:0.7px;line-height:8.799999999999997px;font-size:6.8px;color:#333;-webkit-text-stroke:0.1px #333">B</div></div>
<div style="left:92.5px;top:109px;width:72.1px;height:8.799999999999997px;overflow:hidden;"><div class="t" style="position:absolute;left:0;width:72.1px;text-align:center;top:0.7px;line-height:8.799999999999997px;font-size:6.8px;color:#333;-webkit-text-stroke:0.1px #333">C</div></div>
<div style="left:164.6px;top:109px;width:70.70000000000002px;height:8.799999999999997px;overflow:hidden;"><div class="t" style="position:absolute;left:0;width:70.70000000000002px;text-align:center;top:0.7px;line-height:8.799999999999997px;font-size:6.8px;color:#333;-webkit-text-stroke:0.1px #333">D</div></div>
<div style="left:235.3px;top:109px;width:70.09999999999997px;height:8.799999999999997px;overflow:hidden;"><div class="t" style="position:absolute;left:0;width:70.09999999999997px;text-align:center;top:0.7px;line-height:8.799999999999997px;font-size:6.8px;color:#333;-webkit-text-stroke:0.1px #333">E</div></div>
<div style="left:305.4px;top:109px;width:24.900000000000034px;height:8.799999999999997px;overflow:hidden;"><div class="t" style="position:absolute;left:0;width:24.900000000000034px;text-align:center;top:0.7px;line-height:8.799999999999997px;font-size:6.8px;color:#333;-webkit-text-stroke:0.1px #333">F</div></div>
<div style="left:330.3px;top:109px;width:25.30000000000001px;height:8.799999999999997px;overflow:hidden;"><div class="t" style="position:absolute;left:0;width:25.30000000000001px;text-align:center;top:0.7px;line-height:8.799999999999997px;font-size:6.8px;color:#333;-webkit-text-stroke:0.1px #333">G</div></div>
<div style="left:355.6px;top:109px;width:24.299999999999955px;height:8.799999999999997px;overflow:hidden;"><div class="t" style="position:absolute;left:0;width:24.299999999999955px;text-align:center;top:0.7px;line-height:8.799999999999997px;font-size:6.8px;color:#333;-webkit-text-stroke:0.1px #333">H</div></div>
<div style="left:379.9px;top:109px;width:24.600000000000023px;height:8.799999999999997px;overflow:hidden;"><div class="t" style="position:absolute;left:0;width:24.600000000000023px;text-align:center;top:0.7px;line-height:8.799999999999997px;font-size:6.8px;color:#333;-webkit-text-stroke:0.1px #333">I</div></div>
<div style="left:404.5px;top:109px;width:24.399999999999977px;height:8.799999999999997px;overflow:hidden;"><div class="t" style="position:absolute;left:0;width:24.399999999999977px;text-align:center;top:0.7px;line-height:8.799999999999997px;font-size:6.8px;color:#333;-webkit-text-stroke:0.1px #333">J</div></div>
<div style="left:428.9px;top:109px;width:24.600000000000023px;height:8.799999999999997px;overflow:hidden;"><div class="t" style="position:absolute;left:0;width:24.600000000000023px;text-align:center;top:0.7px;line-height:8.799999999999997px;font-size:6.8px;color:#333;-webkit-text-stroke:0.1px #333">K</div></div>
<div style="left:453.5px;top:109px;width:24.899999999999977px;height:8.799999999999997px;overflow:hidden;"><div class="t" style="position:absolute;left:0;width:24.899999999999977px;text-align:center;top:0.7px;line-height:8.799999999999997px;font-size:6.8px;color:#333;-webkit-text-stroke:0.1px #333">L</div></div>
<div style="left:478.4px;top:109px;width:24.600000000000023px;height:8.799999999999997px;overflow:hidden;"><div class="t" style="position:absolute;left:0;width:24.600000000000023px;text-align:center;top:0.7px;line-height:8.799999999999997px;font-size:6.8px;color:#333;-webkit-text-stroke:0.1px #333">M</div></div>
<div style="left:503px;top:109px;width:24.200000000000045px;height:8.799999999999997px;overflow:hidden;"><div class="t" style="position:absolute;left:0;width:24.200000000000045px;text-align:center;top:0.7px;line-height:8.799999999999997px;font-size:6.8px;color:#333;-webkit-text-stroke:0.1px #333">N</div></div>
<div style="left:527.2px;top:109px;width:24.59999999999991px;height:8.799999999999997px;overflow:hidden;"><div class="t" style="position:absolute;left:0;width:24.59999999999991px;text-align:center;top:0.7px;line-height:8.799999999999997px;font-size:6.8px;color:#333;-webkit-text-stroke:0.1px #333">O</div></div>
<div style="left:551.8px;top:109px;width:24.600000000000023px;height:8.799999999999997px;overflow:hidden;"><div class="t" style="position:absolute;left:0;width:24.600000000000023px;text-align:center;top:0.7px;line-height:8.799999999999997px;font-size:6.8px;color:#333;-webkit-text-stroke:0.1px #333">P</div></div>
<div style="left:576.4px;top:109px;width:24.300000000000068px;height:8.799999999999997px;overflow:hidden;"><div class="t" style="position:absolute;left:0;width:24.300000000000068px;text-align:center;top:0.7px;line-height:8.799999999999997px;font-size:6.8px;color:#333;-webkit-text-stroke:0.1px #333">Q</div></div>
<div style="left:600.7px;top:109px;width:24.899999999999977px;height:8.799999999999997px;overflow:hidden;"><div class="t" style="position:absolute;left:0;width:24.899999999999977px;text-align:center;top:0.7px;line-height:8.799999999999997px;font-size:6.8px;color:#333;-webkit-text-stroke:0.1px #333">R</div></div>
<div style="left:625.6px;top:109px;width:24.299999999999955px;height:8.799999999999997px;overflow:hidden;"><div class="t" style="position:absolute;left:0;width:24.299999999999955px;text-align:center;top:0.7px;line-height:8.799999999999997px;font-size:6.8px;color:#333;-webkit-text-stroke:0.1px #333">S</div></div>
<div style="left:649.9px;top:109px;width:24.600000000000023px;height:8.799999999999997px;overflow:hidden;"><div class="t" style="position:absolute;left:0;width:24.600000000000023px;text-align:center;top:0.7px;line-height:8.799999999999997px;font-size:6.8px;color:#333;-webkit-text-stroke:0.1px #333">T</div></div>
<div style="left:674.5px;top:109px;width:24.600000000000023px;height:8.799999999999997px;overflow:hidden;"><div class="t" style="position:absolute;left:0;width:24.600000000000023px;text-align:center;top:0.7px;line-height:8.799999999999997px;font-size:6.8px;color:#333;-webkit-text-stroke:0.1px #333">U</div></div>
<div style="left:699.1px;top:109px;width:11.100000000000023px;height:8.799999999999997px;overflow:hidden;"><div class="t" style="position:absolute;left:0;width:24.899999999999977px;text-align:center;top:0.7px;line-height:8.799999999999997px;font-size:6.8px;color:#333;-webkit-text-stroke:0.1px #333">V</div></div>
<div style="left:1px;top:117.8px;width:12.3px;height:9.900000000000006px;overflow:hidden;"><div class="t" style="position:absolute;left:0;width:12.3px;text-align:center;top:0.8px;line-height:9.900000000000006px;font-size:6.7px;color:#217346;-webkit-text-stroke:0.1px #217346">1</div></div>
<div style="left:1px;top:127.7px;width:12.3px;height:10.499999999999986px;overflow:hidden;"><div class="t" style="position:absolute;left:0;width:12.3px;text-align:center;top:0.8px;line-height:10.499999999999986px;font-size:6.7px;color:#333;-webkit-text-stroke:0.1px #333">2</div></div>
<div style="left:1px;top:138.2px;width:12.3px;height:10.100000000000023px;overflow:hidden;"><div class="t" style="position:absolute;left:0;width:12.3px;text-align:center;top:0.8px;line-height:10.100000000000023px;font-size:6.7px;color:#333;-webkit-text-stroke:0.1px #333">3</div></div>
<div style="left:1px;top:148.3px;width:12.3px;height:9.399999999999977px;overflow:hidden;"><div class="t" style="position:absolute;left:0;width:12.3px;text-align:center;top:0.8px;line-height:9.399999999999977px;font-size:6.7px;color:#333;-webkit-text-stroke:0.1px #333">4</div></div>
<div style="left:1px;top:157.7px;width:12.3px;height:9.700000000000017px;overflow:hidden;"><div class="t" style="position:absolute;left:0;width:12.3px;text-align:center;top:0.8px;line-height:9.700000000000017px;font-size:6.7px;color:#333;-webkit-text-stroke:0.1px #333">5</div></div>
<div style="left:1px;top:167.4px;width:12.3px;height:8.799999999999983px;overflow:hidden;"><div class="t" style="position:absolute;left:0;width:12.3px;text-align:center;top:0.8px;line-height:9.699999999999989px;font-size:6.7px;color:#333;-webkit-text-stroke:0.1px #333">6</div></div>
<div style="left:13.700000000000001px;top:117.8px;width:24.4px;height:10.200000000000006px;overflow:hidden;"><div class="t" style="position:absolute;left:0;right:0;padding:0 1.1px 0 1.0px;text-align:left;top:0.6px;line-height:9.900000000000006px;font-size:6.4px;font-weight:bold;color:#000;white-space:nowrap;-webkit-text-stroke:0.12px #000"><span style="display:inline-block;">Ignore</span></div></div>
<div style="left:38.9px;top:117.8px;width:53.2px;height:10.200000000000006px;overflow:hidden;"><div class="t" style="position:absolute;left:0;right:0;padding:0 1.1px 0 1.0px;text-align:left;top:0.6px;line-height:9.900000000000006px;font-size:6.4px;font-weight:bold;color:#000;white-space:nowrap;-webkit-text-stroke:0.12px #000"><span style="display:inline-block;">Display Name</span></div></div>
<div style="left:92.9px;top:117.8px;width:71.3px;height:10.200000000000006px;overflow:hidden;"><div class="t" style="position:absolute;left:0;right:0;padding:0 1.1px 0 1.0px;text-align:left;top:0.6px;line-height:9.900000000000006px;font-size:6.4px;font-weight:bold;color:#000;white-space:nowrap;-webkit-text-stroke:0.12px #000"><span style="display:inline-block;">Schema Name</span></div></div>
<div style="left:165.0px;top:117.8px;width:69.90000000000002px;height:10.200000000000006px;overflow:hidden;"><div class="t" style="position:absolute;left:0;right:0;padding:0 1.1px 0 1.0px;text-align:left;top:0.6px;line-height:9.900000000000006px;font-size:6.4px;font-weight:bold;color:#000;white-space:nowrap;-webkit-text-stroke:0.12px #000"><span style="display:inline-block;">Display Collection Name</span></div></div>
<div style="left:235.70000000000002px;top:117.8px;width:69.29999999999997px;height:10.200000000000006px;overflow:hidden;"><div class="t" style="position:absolute;left:0;right:0;padding:0 1.1px 0 1.0px;text-align:left;top:0.6px;line-height:9.900000000000006px;font-size:6.4px;font-weight:bold;color:#000;white-space:nowrap;-webkit-text-stroke:0.12px #000"><span style="display:inline-block;">Description</span></div></div>
<div style="left:305.79999999999995px;top:117.8px;width:24.100000000000033px;height:10.200000000000006px;overflow:hidden;"><div class="t" style="position:absolute;left:0;right:0;padding:0 1.1px 0 1.0px;text-align:left;top:0.6px;line-height:9.900000000000006px;font-size:6.4px;font-weight:bold;color:#000;white-space:nowrap;-webkit-text-stroke:0.12px #000"><span style="display:inline-block;">Audit</span></div></div>
<div style="left:330.7px;top:117.8px;width:24.50000000000001px;height:10.200000000000006px;overflow:hidden;"><div class="t" style="position:absolute;left:0;right:0;padding:0 1.1px 0 1.0px;text-align:left;top:0.6px;line-height:9.900000000000006px;font-size:6.4px;font-weight:bold;color:#000;white-space:nowrap;-webkit-text-stroke:0.12px #000"><span style="display:inline-block;">Is Activity</span></div></div>
<div style="left:356.0px;top:117.8px;width:23.499999999999954px;height:10.200000000000006px;overflow:hidden;"><div class="t" style="position:absolute;left:0;right:0;padding:0 1.1px 0 1.0px;text-align:left;top:0.6px;line-height:9.900000000000006px;font-size:6.4px;font-weight:bold;color:#000;white-space:nowrap;-webkit-text-stroke:0.12px #000"><span style="display:inline-block;">Notes</span></div></div>
<div style="left:380.29999999999995px;top:117.8px;width:23.800000000000022px;height:10.200000000000006px;overflow:hidden;"><div class="t" style="position:absolute;left:0;right:0;padding:0 1.1px 0 1.0px;text-align:left;top:0.6px;line-height:9.900000000000006px;font-size:6.4px;font-weight:bold;color:#000;white-space:nowrap;-webkit-text-stroke:0.12px #000"><span style="display:inline-block;">Activities</span></div></div>
<div style="left:404.9px;top:117.8px;width:23.599999999999977px;height:10.200000000000006px;overflow:hidden;"><div class="t" style="position:absolute;left:0;right:0;padding:0 1.1px 0 1.0px;text-align:left;top:0.6px;line-height:9.900000000000006px;font-size:6.4px;font-weight:bold;color:#000;white-space:nowrap;-webkit-text-stroke:0.12px #000"><span style="display:inline-block;">Connections</span></div></div>
<div style="left:429.29999999999995px;top:117.8px;width:23.800000000000022px;height:10.200000000000006px;overflow:hidden;"><div class="t" style="position:absolute;left:0;right:0;padding:0 1.1px 0 1.0px;text-align:left;top:0.6px;line-height:9.900000000000006px;font-size:6.4px;font-weight:bold;color:#000;white-space:nowrap;-webkit-text-stroke:0.12px #000"><span style="display:inline-block;">Mail Merge</span></div></div>
<div style="left:453.9px;top:117.8px;width:24.099999999999977px;height:10.200000000000006px;overflow:hidden;"><div class="t" style="position:absolute;left:0;right:0;padding:0 1.1px 0 1.0px;text-align:left;top:0.6px;line-height:9.900000000000006px;font-size:6.4px;font-weight:bold;color:#000;white-space:nowrap;-webkit-text-stroke:0.12px #000"><span style="display:inline-block;">Queues</span></div></div>
<div style="left:13.700000000000001px;top:127.7px;width:24.4px;height:10.799999999999986px;overflow:hidden;"><div class="t" style="position:absolute;left:0;right:0;padding:0 1.1px 0 1.0px;text-align:center;top:1.0px;line-height:10.499999999999986px;font-size:7.6px;font-weight:normal;color:#000;white-space:nowrap;-webkit-text-stroke:0.12px #000"><span style="display:inline-block;transform:scaleX(0.76);transform-origin:center;">FALSE</span></div></div>
<div style="left:38.9px;top:127.7px;width:53.2px;height:10.799999999999986px;overflow:hidden;"><div class="t" style="position:absolute;left:0;right:0;padding:0 1.1px 0 1.0px;text-align:left;top:1.0px;line-height:10.499999999999986px;font-size:7.0px;font-weight:normal;color:#000;white-space:nowrap;-webkit-text-stroke:0.12px #000"><span style="display:inline-block;">Test Entity 1</span></div></div>
<div style="left:92.9px;top:127.7px;width:71.3px;height:10.799999999999986px;overflow:hidden;"><div class="t" style="position:absolute;left:0;right:0;padding:0 1.1px 0 1.0px;text-align:left;top:1.0px;line-height:10.499999999999986px;font-size:7.0px;font-weight:normal;color:#000;white-space:nowrap;-webkit-text-stroke:0.12px #000"><span style="display:inline-block;">new_testentity1</span></div></div>
<div style="left:165.0px;top:127.7px;width:69.90000000000002px;height:10.799999999999986px;overflow:hidden;"><div class="t" style="position:absolute;left:0;right:0;padding:0 1.1px 0 1.0px;text-align:left;top:1.0px;line-height:10.499999999999986px;font-size:7.0px;font-weight:normal;color:#000;white-space:nowrap;-webkit-text-stroke:0.12px #000"><span style="display:inline-block;">Test Entities 1</span></div></div>
<div style="left:235.70000000000002px;top:127.7px;width:69.29999999999997px;height:10.799999999999986px;overflow:hidden;"><div class="t" style="position:absolute;left:0;right:0;padding:0 1.1px 0 1.0px;text-align:left;top:1.0px;line-height:10.499999999999986px;font-size:7.0px;font-weight:normal;color:#000;white-space:nowrap;-webkit-text-stroke:0.12px #000"><span style="display:inline-block;">This is test entity 1</span></div></div>
<div style="left:305.79999999999995px;top:127.7px;width:24.100000000000033px;height:10.799999999999986px;overflow:hidden;"><div class="t" style="position:absolute;left:0;right:0;padding:0 1.1px 0 1.0px;text-align:right;top:1.0px;line-height:10.499999999999986px;font-size:7.0px;font-weight:normal;color:#000;white-space:nowrap;-webkit-text-stroke:0.12px #000"><span style="display:inline-block;">1</span></div></div>
<div style="left:330.7px;top:127.7px;width:24.50000000000001px;height:10.799999999999986px;overflow:hidden;"><div class="t" style="position:absolute;left:0;right:0;padding:0 1.1px 0 1.0px;text-align:right;top:1.0px;line-height:10.499999999999986px;font-size:7.0px;font-weight:normal;color:#000;white-space:nowrap;-webkit-text-stroke:0.12px #000"><span style="display:inline-block;">0</span></div></div>
<div style="left:356.0px;top:127.7px;width:23.499999999999954px;height:10.799999999999986px;overflow:hidden;"><div class="t" style="position:absolute;left:0;right:0;padding:0 1.1px 0 1.0px;text-align:right;top:1.0px;line-height:10.499999999999986px;font-size:7.0px;font-weight:normal;color:#000;white-space:nowrap;-webkit-text-stroke:0.12px #000"><span style="display:inline-block;">0</span></div></div>
<div style="left:380.29999999999995px;top:127.7px;width:23.800000000000022px;height:10.799999999999986px;overflow:hidden;"><div class="t" style="position:absolute;left:0;right:0;padding:0 1.1px 0 1.0px;text-align:right;top:1.0px;line-height:10.499999999999986px;font-size:7.0px;font-weight:normal;color:#000;white-space:nowrap;-webkit-text-stroke:0.12px #000"><span style="display:inline-block;">0</span></div></div>
<div style="left:404.9px;top:127.7px;width:23.599999999999977px;height:10.799999999999986px;overflow:hidden;"><div class="t" style="position:absolute;left:0;right:0;padding:0 1.1px 0 1.0px;text-align:right;top:1.0px;line-height:10.499999999999986px;font-size:7.0px;font-weight:normal;color:#000;white-space:nowrap;-webkit-text-stroke:0.12px #000"><span style="display:inline-block;">0</span></div></div>
<div style="left:429.29999999999995px;top:127.7px;width:23.800000000000022px;height:10.799999999999986px;overflow:hidden;"><div class="t" style="position:absolute;left:0;right:0;padding:0 1.1px 0 1.0px;text-align:right;top:1.0px;line-height:10.499999999999986px;font-size:7.0px;font-weight:normal;color:#000;white-space:nowrap;-webkit-text-stroke:0.12px #000"><span style="display:inline-block;">0</span></div></div>
<div style="left:453.9px;top:127.7px;width:24.099999999999977px;height:10.799999999999986px;overflow:hidden;"><div class="t" style="position:absolute;left:0;right:0;padding:0 1.1px 0 1.0px;text-align:right;top:1.0px;line-height:10.499999999999986px;font-size:7.0px;font-weight:normal;color:#000;white-space:nowrap;-webkit-text-stroke:0.12px #000"><span style="display:inline-block;">0</span></div></div>
<div style="left:13.700000000000001px;top:138.2px;width:24.4px;height:10.400000000000023px;overflow:hidden;"><div class="t" style="position:absolute;left:0;right:0;padding:0 1.1px 0 1.0px;text-align:center;top:1.0px;line-height:10.100000000000023px;font-size:7.6px;font-weight:normal;color:#000;white-space:nowrap;-webkit-text-stroke:0.12px #000"><span style="display:inline-block;transform:scaleX(0.76);transform-origin:center;">FALSE</span></div></div>
<div style="left:38.9px;top:138.2px;width:53.2px;height:10.400000000000023px;overflow:hidden;"><div class="t" style="position:absolute;left:0;right:0;padding:0 1.1px 0 1.0px;text-align:left;top:1.0px;line-height:10.100000000000023px;font-size:7.0px;font-weight:normal;color:#000;white-space:nowrap;-webkit-text-stroke:0.12px #000"><span style="display:inline-block;">Test Entity 2</span></div></div>
<div style="left:92.9px;top:138.2px;width:71.3px;height:10.400000000000023px;overflow:hidden;"><div class="t" style="position:absolute;left:0;right:0;padding:0 1.1px 0 1.0px;text-align:left;top:1.0px;line-height:10.100000000000023px;font-size:7.0px;font-weight:normal;color:#000;white-space:nowrap;-webkit-text-stroke:0.12px #000"><span style="display:inline-block;">new_testentity2</span></div></div>
<div style="left:165.0px;top:138.2px;width:69.90000000000002px;height:10.400000000000023px;overflow:hidden;"><div class="t" style="position:absolute;left:0;right:0;padding:0 1.1px 0 1.0px;text-align:left;top:1.0px;line-height:10.100000000000023px;font-size:7.0px;font-weight:normal;color:#000;white-space:nowrap;-webkit-text-stroke:0.12px #000"><span style="display:inline-block;">Test Entities 2</span></div></div>
<div style="left:235.70000000000002px;top:138.2px;width:69.29999999999997px;height:10.400000000000023px;overflow:hidden;"><div class="t" style="position:absolute;left:0;right:0;padding:0 1.1px 0 1.0px;text-align:left;top:1.0px;line-height:10.100000000000023px;font-size:7.0px;font-weight:normal;color:#000;white-space:nowrap;-webkit-text-stroke:0.12px #000"><span style="display:inline-block;">This is test enitty 2</span></div></div>
<div style="left:305.79999999999995px;top:138.2px;width:24.100000000000033px;height:10.400000000000023px;overflow:hidden;"><div class="t" style="position:absolute;left:0;right:0;padding:0 1.1px 0 1.0px;text-align:right;top:1.0px;line-height:10.100000000000023px;font-size:7.0px;font-weight:normal;color:#000;white-space:nowrap;-webkit-text-stroke:0.12px #000"><span style="display:inline-block;">1</span></div></div>
<div style="left:330.7px;top:138.2px;width:24.50000000000001px;height:10.400000000000023px;overflow:hidden;"><div class="t" style="position:absolute;left:0;right:0;padding:0 1.1px 0 1.0px;text-align:right;top:1.0px;line-height:10.100000000000023px;font-size:7.0px;font-weight:normal;color:#000;white-space:nowrap;-webkit-text-stroke:0.12px #000"><span style="display:inline-block;">0</span></div></div>
<div style="left:356.0px;top:138.2px;width:23.499999999999954px;height:10.400000000000023px;overflow:hidden;"><div class="t" style="position:absolute;left:0;right:0;padding:0 1.1px 0 1.0px;text-align:right;top:1.0px;line-height:10.100000000000023px;font-size:7.0px;font-weight:normal;color:#000;white-space:nowrap;-webkit-text-stroke:0.12px #000"><span style="display:inline-block;">1</span></div></div>
<div style="left:380.29999999999995px;top:138.2px;width:23.800000000000022px;height:10.400000000000023px;overflow:hidden;"><div class="t" style="position:absolute;left:0;right:0;padding:0 1.1px 0 1.0px;text-align:right;top:1.0px;line-height:10.100000000000023px;font-size:7.0px;font-weight:normal;color:#000;white-space:nowrap;-webkit-text-stroke:0.12px #000"><span style="display:inline-block;">1</span></div></div>
<div style="left:404.9px;top:138.2px;width:23.599999999999977px;height:10.400000000000023px;overflow:hidden;"><div class="t" style="position:absolute;left:0;right:0;padding:0 1.1px 0 1.0px;text-align:right;top:1.0px;line-height:10.100000000000023px;font-size:7.0px;font-weight:normal;color:#000;white-space:nowrap;-webkit-text-stroke:0.12px #000"><span style="display:inline-block;">1</span></div></div>
<div style="left:429.29999999999995px;top:138.2px;width:23.800000000000022px;height:10.400000000000023px;overflow:hidden;"><div class="t" style="position:absolute;left:0;right:0;padding:0 1.1px 0 1.0px;text-align:right;top:1.0px;line-height:10.100000000000023px;font-size:7.0px;font-weight:normal;color:#000;white-space:nowrap;-webkit-text-stroke:0.12px #000"><span style="display:inline-block;">1</span></div></div>
<div style="left:453.9px;top:138.2px;width:24.099999999999977px;height:10.400000000000023px;overflow:hidden;"><div class="t" style="position:absolute;left:0;right:0;padding:0 1.1px 0 1.0px;text-align:right;top:1.0px;line-height:10.100000000000023px;font-size:7.0px;font-weight:normal;color:#000;white-space:nowrap;-webkit-text-stroke:0.12px #000"><span style="display:inline-block;">1</span></div></div>
<div style="left:12.8px;top:117.39999999999999px;width:26.2px;height:10.900000000000006px;border:1.1px solid #217346;box-sizing:border-box"></div>
<div style="left:37.2px;top:126.5px;width:2.4px;height:2.4px;background:#217346;border:0.5px solid #fff;box-sizing:content-box"></div>
<div style="left:710.2px;top:109px;width:10.799999999999955px;height:67.19999999999999px;background:#e2e2e2;"></div>
<div style="left:712.1px;top:109.3px;width:7.3px;height:7.8px;background:#fff;border:0.5px solid #c8c8c8;box-sizing:border-box"></div>
<svg style="position:absolute;left:713.7px;top:111.8px;" width="4" height="3" viewBox="0 0 4 3"><path d="M0 2.2l1.8-2 1.8 2z" fill="#777"/></svg>
<div style="left:712.1px;top:117.4px;width:7.3px;height:8px;background:#fff;border:0.5px solid #c8c8c8;box-sizing:border-box"></div>
<div style="left:712.1px;top:169.39999999999998px;width:7.3px;height:6.6px;background:#fff;border:0.5px solid #c8c8c8;box-sizing:border-box"></div>
<svg style="position:absolute;left:713.7px;top:171.89999999999998px;" width="4" height="3" viewBox="0 0 4 3"><path d="M0 0.2h3.6l-1.8 2z" fill="#777"/></svg>
<div style="left:1px;top:176.2px;width:720px;height:14.100000000000023px;background:#e6e6e6;"></div>
<div style="left:1px;top:176.2px;width:720px;height:0.6px;background:#c8c8c8;"></div>
<svg style="position:absolute;left:14.2px;top:181.25px;" width="3" height="4" viewBox="0 0 3 4"><path d="M2.5 0v4l-2-2z" fill="#c4c4c4"/></svg>
<svg style="position:absolute;left:28.3px;top:181.25px;" width="3" height="4" viewBox="0 0 3 4"><path d="M0.5 0v4l2-2z" fill="#c4c4c4"/></svg>
<div style="left:51.4px;top:175.7px;width:53.00000000000001px;height:14.600000000000023px;background:#fff;"></div>
<div style="left:51.4px;top:188.10000000000002px;width:53.00000000000001px;height:1.1px;background:#217346;"></div>
<div class="t" style="left:57.2px;top:177.95px;line-height:10px;font-size:6.3px;color:#217346;font-weight:bold;">Record Types</div>
<div class="t" style="left:110.6px;top:177.95px;line-height:10px;font-size:6.6px;color:#666;font-weight:normal;">Fields</div>
<div class="t" style="left:141px;top:177.95px;line-height:10px;font-size:6.6px;color:#666;font-weight:normal;">Option Sets</div>
<div class="t" style="left:189.4px;top:177.95px;line-height:10px;font-size:6.6px;color:#666;font-weight:normal;">Relationships</div>
<div style="left:134.8px;top:178.7px;width:0.6px;height:9.100000000000023px;background:#b8b8b8;"></div>
<div style="left:182.8px;top:178.7px;width:0.6px;height:9.100000000000023px;background:#b8b8b8;"></div>
<div style="left:235.4px;top:178.7px;width:0.6px;height:9.100000000000023px;background:#b8b8b8;"></div>
<svg style="position:absolute;left:251.4px;top:179.25px;" width="9" height="9" viewBox="0 0 9 9"><circle cx="4.5" cy="4.5" r="3.8" fill="none" stroke="#888" stroke-width="0.7"/><path d="M4.5 2.5v4M2.5 4.5h4" stroke="#888" stroke-width="0.7"/></svg>
<svg style="position:absolute;left:432.2px;top:179.75px;" width="2" height="7" viewBox="0 0 2 7"><circle cx="1" cy="1" r="0.45" fill="#999"/><circle cx="1" cy="3.5" r="0.45" fill="#999"/><circle cx="1" cy="6" r="0.45" fill="#999"/></svg>
<div style="left:441.5px;top:179.8px;width:269.0px;height:7.199999999999989px;background:#dcdcdc;"></div>
<div style="left:441.5px;top:179.8px;width:232.0px;height:7.199999999999989px;background:#fff;border:0.5px solid #c8c8c8;box-sizing:border-box"></div>
<div style="left:441.5px;top:179.8px;width:7.5px;height:7.199999999999989px;background:#fff;border:0.5px solid #c8c8c8;box-sizing:border-box"></div>
<svg style="position:absolute;left:443.7px;top:181.4px;" width="3" height="4" viewBox="0 0 3 4"><path d="M2.6 0v4l-2.2-2z" fill="#555"/></svg>
<div style="left:703.6px;top:179.8px;width:6.899999999999977px;height:7.199999999999989px;background:#fff;border:0.5px solid #c8c8c8;box-sizing:border-box"></div>
<svg style="position:absolute;left:706.2px;top:181.4px;" width="3" height="4" viewBox="0 0 3 4"><path d="M0.4 0v4l2.2-2z" fill="#555"/></svg>
<div style="left:1px;top:190.3px;width:720px;height:10.299999999999983px;background:#f1f1f1;"></div>
<div style="left:1px;top:190.3px;width:720px;height:0.6px;background:#d4d4d4;"></div>
<div class="t" style="left:4.6px;top:191.04999999999998px;line-height:10px;font-size:6.0px;color:#444;font-weight:normal;">Ready</div>
<svg style="position:absolute;left:30.3px;top:191.95px;" width="7" height="7" viewBox="0 0 7 7"><rect x="0.5" y="2" width="6" height="4.5" fill="none" stroke="#999" stroke-width="0.6"/><path d="M3.5 2v4.5M0.5 4h6" stroke="#999" stroke-width="0.5"/><circle cx="1.5" cy="1.2" r="1" fill="#999"/></svg>
<div style="left:569.9px;top:190.60000000000002px;width:19px;height:9.999999999999982px;background:#c8c8c8;"></div>
<svg style="position:absolute;left:575.6999999999999px;top:191.95px;" width="8" height="7" viewBox="0 0 8 7"><rect x="0.5" y="0.5" width="7" height="6" fill="none" stroke="#666" stroke-width="0.6"/><path d="M0.5 2.5h7M0.5 4.5h7M3 0.5v6M5 0.5v6" stroke="#666" stroke-width="0.5"/></svg>
<svg style="position:absolute;left:594.6999999999999px;top:191.95px;" width="8" height="7" viewBox="0 0 8 7"><rect x="0.5" y="0.5" width="7" height="6" fill="none" stroke="#777" stroke-width="0.6"/><path d="M2 0.5v6M6 0.5v6" stroke="#777" stroke-width="0.6"/></svg>
<svg style="position:absolute;left:613.8px;top:191.95px;" width="8" height="7" viewBox="0 0 8 7"><rect x="0.5" y="0.5" width="7" height="6" fill="none" stroke="#777" stroke-width="0.6"/><path d="M2.5 0.5v3h3v-3" fill="none" stroke="#777" stroke-width="0.6"/></svg>
<div style="left:629.4px;top:195.04999999999998px;width:3.2px;height:0.9px;background:#555;"></div>
<div style="left:634.4px;top:195.2px;width:50px;height:0.5px;background:#999;"></div>
<div style="left:658.1999999999999px;top:192.45px;width:2px;height:6px;background:#555;"></div>
<svg style="position:absolute;left:686.4px;top:192.95px;" width="5" height="5" viewBox="0 0 5 5"><path d="M2.5 0v5M0 2.5h5" stroke="#555" stroke-width="0.9"/></svg>
<div class="t" style="left:699.4px;top:190.75px;line-height:10px;font-size:5.6px;color:#666;font-weight:normal;">100%</div>
<div style="left:0px;top:200.6px;width:722px;height:1px;background:#5a9a76;"></div>
<div style="left:1px;top:201.6px;width:720.5px;height:8.4px;background:#e6e6e6;"></div>
<div style="left:1.8px;top:201.6px;width:719.5px;height:3.5px;background:linear-gradient(#c4c4c4,#e6e6e6);"></div>
<div style="left:1.8px;top:210px;width:708.8000000000001px;height:8.599999999999994px;background:#e6e6e6;"></div>
<div style="left:1.8px;top:218.6px;width:12.6px;height:125.00000000000003px;background:#e6e6e6;"></div>
<div style="left:14.4px;top:218.6px;width:696.2px;height:125.00000000000003px;background:#fff;"></div>
<svg style="position:absolute;left:7.9px;top:212.1px;" width="6" height="6" viewBox="0 0 6 6"><path d="M5.5 0.5v5h-5z" fill="#b8b8b8"/></svg>
<div style="left:41.3px;top:210px;width:0.8px;height:8.599999999999994px;background:#cacaca;"></div>
<div style="left:41.199999999999996px;top:218.6px;width:0.8px;height:125.00000000000003px;background:#e3e3e3;"></div>
<div style="left:118.3px;top:210px;width:0.8px;height:8.599999999999994px;background:#cacaca;"></div>
<div style="left:118.2px;top:218.6px;width:0.8px;height:125.00000000000003px;background:#e3e3e3;"></div>
<div style="left:171.2px;top:210px;width:0.8px;height:8.599999999999994px;background:#cacaca;"></div>
<div style="left:171.1px;top:218.6px;width:0.8px;height:125.00000000000003px;background:#e3e3e3;"></div>
<div style="left:236.1px;top:210px;width:0.8px;height:8.599999999999994px;background:#cacaca;"></div>
<div style="left:236.0px;top:218.6px;width:0.8px;height:125.00000000000003px;background:#e3e3e3;"></div>
<div style="left:283.8px;top:210px;width:0.8px;height:8.599999999999994px;background:#cacaca;"></div>
<div style="left:283.7px;top:218.6px;width:0.8px;height:125.00000000000003px;background:#e3e3e3;"></div>
<div style="left:356.8px;top:210px;width:0.8px;height:8.599999999999994px;background:#cacaca;"></div>
<div style="left:356.7px;top:218.6px;width:0.8px;height:125.00000000000003px;background:#e3e3e3;"></div>
<div style="left:430.9px;top:210px;width:0.8px;height:8.599999999999994px;background:#cacaca;"></div>
<div style="left:430.79999999999995px;top:218.6px;width:0.8px;height:125.00000000000003px;background:#e3e3e3;"></div>
<div style="left:471.2px;top:210px;width:0.8px;height:8.599999999999994px;background:#cacaca;"></div>
<div style="left:471.09999999999997px;top:218.6px;width:0.8px;height:125.00000000000003px;background:#e3e3e3;"></div>
<div style="left:495.8px;top:210px;width:0.8px;height:8.599999999999994px;background:#cacaca;"></div>
<div style="left:495.7px;top:218.6px;width:0.8px;height:125.00000000000003px;background:#e3e3e3;"></div>
<div style="left:533.4px;top:210px;width:0.8px;height:8.599999999999994px;background:#cacaca;"></div>
<div style="left:533.3px;top:218.6px;width:0.8px;height:125.00000000000003px;background:#e3e3e3;"></div>
<div style="left:571.2px;top:210px;width:0.8px;height:8.599999999999994px;background:#cacaca;"></div>
<div style="left:571.1px;top:218.6px;width:0.8px;height:125.00000000000003px;background:#e3e3e3;"></div>
<div style="left:608.6px;top:210px;width:0.8px;height:8.599999999999994px;background:#cacaca;"></div>
<div style="left:608.5px;top:218.6px;width:0.8px;height:125.00000000000003px;background:#e3e3e3;"></div>
<div style="left:657.1px;top:210px;width:0.8px;height:8.599999999999994px;background:#cacaca;"></div>
<div style="left:657.0px;top:218.6px;width:0.8px;height:125.00000000000003px;background:#e3e3e3;"></div>
<div style="left:704.6px;top:210px;width:0.8px;height:8.599999999999994px;background:#cacaca;"></div>
<div style="left:704.5px;top:218.6px;width:0.8px;height:125.00000000000003px;background:#e3e3e3;"></div>
<div style="left:14.4px;top:227.85299999999998px;width:696.2px;height:0.7px;background:#e3e3e3;"></div>
<div style="left:1.8px;top:227.85299999999998px;width:12.6px;height:0.7px;background:#c8c8c8;"></div>
<div style="left:14.4px;top:237.40599999999998px;width:696.2px;height:0.7px;background:#e3e3e3;"></div>
<div style="left:1.8px;top:237.40599999999998px;width:12.6px;height:0.7px;background:#c8c8c8;"></div>
<div style="left:14.4px;top:246.95899999999997px;width:696.2px;height:0.7px;background:#e3e3e3;"></div>
<div style="left:1.8px;top:246.95899999999997px;width:12.6px;height:0.7px;background:#c8c8c8;"></div>
<div style="left:14.4px;top:256.512px;width:696.2px;height:0.7px;background:#e3e3e3;"></div>
<div style="left:1.8px;top:256.512px;width:12.6px;height:0.7px;background:#c8c8c8;"></div>
<div style="left:14.4px;top:266.065px;width:696.2px;height:0.7px;background:#e3e3e3;"></div>
<div style="left:1.8px;top:266.065px;width:12.6px;height:0.7px;background:#c8c8c8;"></div>
<div style="left:14.4px;top:275.618px;width:696.2px;height:0.7px;background:#e3e3e3;"></div>
<div style="left:1.8px;top:275.618px;width:12.6px;height:0.7px;background:#c8c8c8;"></div>
<div style="left:14.4px;top:285.171px;width:696.2px;height:0.7px;background:#e3e3e3;"></div>
<div style="left:1.8px;top:285.171px;width:12.6px;height:0.7px;background:#c8c8c8;"></div>
<div style="left:14.4px;top:294.724px;width:696.2px;height:0.7px;background:#e3e3e3;"></div>
<div style="left:1.8px;top:294.724px;width:12.6px;height:0.7px;background:#c8c8c8;"></div>
<div style="left:14.4px;top:304.277px;width:696.2px;height:0.7px;background:#e3e3e3;"></div>
<div style="left:1.8px;top:304.277px;width:12.6px;height:0.7px;background:#c8c8c8;"></div>
<div style="left:14.4px;top:313.83px;width:696.2px;height:0.7px;background:#e3e3e3;"></div>
<div style="left:1.8px;top:313.83px;width:12.6px;height:0.7px;background:#c8c8c8;"></div>
<div style="left:14.4px;top:323.383px;width:696.2px;height:0.7px;background:#e3e3e3;"></div>
<div style="left:1.8px;top:323.383px;width:12.6px;height:0.7px;background:#c8c8c8;"></div>
<div style="left:14.4px;top:332.936px;width:696.2px;height:0.7px;background:#e3e3e3;"></div>
<div style="left:1.8px;top:332.936px;width:12.6px;height:0.7px;background:#c8c8c8;"></div>
<div style="left:14.4px;top:342.489px;width:696.2px;height:0.7px;background:#e3e3e3;"></div>
<div style="left:1.8px;top:342.489px;width:12.6px;height:0.7px;background:#c8c8c8;"></div>
<div style="left:1.8px;top:218.4px;width:708.8000000000001px;height:0.9px;background:#b8b8b8;"></div>
<div style="left:710.0px;top:218.6px;width:0.8px;height:125.00000000000003px;background:#c8c8c8;"></div>
<div style="left:13.9px;top:210px;width:0.8px;height:133.60000000000002px;background:#b4b4b4;"></div>
<div style="left:14.4px;top:210px;width:27.4px;height:8.599999999999994px;overflow:hidden;"><div class="t" style="position:absolute;left:0;width:27.4px;text-align:center;top:0.7px;line-height:8.599999999999994px;font-size:6.8px;color:#333;-webkit-text-stroke:0.1px #333">A</div></div>
<div style="left:41.8px;top:210px;width:77.0px;height:8.599999999999994px;overflow:hidden;"><div class="t" style="position:absolute;left:0;width:77.0px;text-align:center;top:0.7px;line-height:8.599999999999994px;font-size:6.8px;color:#333;-webkit-text-stroke:0.1px #333">B</div></div>
<div style="left:118.8px;top:210px;width:52.89999999999999px;height:8.599999999999994px;overflow:hidden;"><div class="t" style="position:absolute;left:0;width:52.89999999999999px;text-align:center;top:0.7px;line-height:8.599999999999994px;font-size:6.8px;color:#333;-webkit-text-stroke:0.1px #333">C</div></div>
<div style="left:171.7px;top:210px;width:64.9px;height:8.599999999999994px;overflow:hidden;"><div class="t" style="position:absolute;left:0;width:64.9px;text-align:center;top:0.7px;line-height:8.599999999999994px;font-size:6.8px;color:#333;-webkit-text-stroke:0.1px #333">D</div></div>
<div style="left:236.6px;top:210px;width:47.70000000000002px;height:8.599999999999994px;overflow:hidden;"><div class="t" style="position:absolute;left:0;width:47.70000000000002px;text-align:center;top:0.7px;line-height:8.599999999999994px;font-size:6.8px;color:#333;-webkit-text-stroke:0.1px #333">E</div></div>
<div style="left:284.3px;top:210px;width:73.0px;height:8.599999999999994px;overflow:hidden;"><div class="t" style="position:absolute;left:0;width:73.0px;text-align:center;top:0.7px;line-height:8.599999999999994px;font-size:6.8px;color:#333;-webkit-text-stroke:0.1px #333">F</div></div>
<div style="left:357.3px;top:210px;width:74.09999999999997px;height:8.599999999999994px;overflow:hidden;"><div class="t" style="position:absolute;left:0;width:74.09999999999997px;text-align:center;top:0.7px;line-height:8.599999999999994px;font-size:6.8px;color:#333;-webkit-text-stroke:0.1px #333">G</div></div>
<div style="left:431.4px;top:210px;width:40.30000000000001px;height:8.599999999999994px;overflow:hidden;"><div class="t" style="position:absolute;left:0;width:40.30000000000001px;text-align:center;top:0.7px;line-height:8.599999999999994px;font-size:6.8px;color:#333;-webkit-text-stroke:0.1px #333">H</div></div>
<div style="left:471.7px;top:210px;width:24.600000000000023px;height:8.599999999999994px;overflow:hidden;"><div class="t" style="position:absolute;left:0;width:24.600000000000023px;text-align:center;top:0.7px;line-height:8.599999999999994px;font-size:6.8px;color:#333;-webkit-text-stroke:0.1px #333">I</div></div>
<div style="left:496.3px;top:210px;width:37.599999999999966px;height:8.599999999999994px;overflow:hidden;"><div class="t" style="position:absolute;left:0;width:37.599999999999966px;text-align:center;top:0.7px;line-height:8.599999999999994px;font-size:6.8px;color:#333;-webkit-text-stroke:0.1px #333">J</div></div>
<div style="left:533.9px;top:210px;width:37.80000000000007px;height:8.599999999999994px;overflow:hidden;"><div class="t" style="position:absolute;left:0;width:37.80000000000007px;text-align:center;top:0.7px;line-height:8.599999999999994px;font-size:6.8px;color:#333;-webkit-text-stroke:0.1px #333">K</div></div>
<div style="left:571.7px;top:210px;width:37.39999999999998px;height:8.599999999999994px;overflow:hidden;"><div class="t" style="position:absolute;left:0;width:37.39999999999998px;text-align:center;top:0.7px;line-height:8.599999999999994px;font-size:6.8px;color:#333;-webkit-text-stroke:0.1px #333">L</div></div>
<div style="left:609.1px;top:210px;width:48.5px;height:8.599999999999994px;overflow:hidden;"><div class="t" style="position:absolute;left:0;width:48.5px;text-align:center;top:0.7px;line-height:8.599999999999994px;font-size:6.8px;color:#333;-webkit-text-stroke:0.1px #333">M</div></div>
<div style="left:657.6px;top:210px;width:47.5px;height:8.599999999999994px;overflow:hidden;"><div class="t" style="position:absolute;left:0;width:47.5px;text-align:center;top:0.7px;line-height:8.599999999999994px;font-size:6.8px;color:#333;-webkit-text-stroke:0.1px #333">N</div></div>
<div style="left:705.1px;top:210px;width:5.5px;height:8.599999999999994px;overflow:hidden;"><div class="t" style="position:absolute;left:0;width:54.89999999999998px;text-align:center;top:0.7px;line-height:8.599999999999994px;font-size:6.8px;color:#333;-webkit-text-stroke:0.1px #333">O</div></div>
<div style="left:1.8px;top:218.6px;width:12.6px;height:9.552999999999997px;overflow:hidden;"><div class="t" style="position:absolute;left:0;width:12.6px;text-align:center;top:0.8px;line-height:9.552999999999997px;font-size:6.7px;color:#333;-webkit-text-stroke:0.1px #333">1</div></div>
<div style="left:1.8px;top:228.153px;width:12.6px;height:9.552999999999997px;overflow:hidden;"><div class="t" style="position:absolute;left:0;width:12.6px;text-align:center;top:0.8px;line-height:9.552999999999997px;font-size:6.7px;color:#333;-webkit-text-stroke:0.1px #333">2</div></div>
<div style="left:1.8px;top:237.706px;width:12.6px;height:9.552999999999997px;overflow:hidden;"><div class="t" style="position:absolute;left:0;width:12.6px;text-align:center;top:0.8px;line-height:9.552999999999997px;font-size:6.7px;color:#333;-webkit-text-stroke:0.1px #333">3</div></div>
<div style="left:1.8px;top:247.259px;width:12.6px;height:9.553000000000026px;overflow:hidden;"><div class="t" style="position:absolute;left:0;width:12.6px;text-align:center;top:0.8px;line-height:9.553000000000026px;font-size:6.7px;color:#333;-webkit-text-stroke:0.1px #333">4</div></div>
<div style="left:1.8px;top:256.812px;width:12.6px;height:9.552999999999997px;overflow:hidden;"><div class="t" style="position:absolute;left:0;width:12.6px;text-align:center;top:0.8px;line-height:9.552999999999997px;font-size:6.7px;color:#333;-webkit-text-stroke:0.1px #333">5</div></div>
<div style="left:1.8px;top:266.365px;width:12.6px;height:9.552999999999997px;overflow:hidden;"><div class="t" style="position:absolute;left:0;width:12.6px;text-align:center;top:0.8px;line-height:9.552999999999997px;font-size:6.7px;color:#333;-webkit-text-stroke:0.1px #333">6</div></div>
<div style="left:1.8px;top:275.918px;width:12.6px;height:9.552999999999997px;overflow:hidden;"><div class="t" style="position:absolute;left:0;width:12.6px;text-align:center;top:0.8px;line-height:9.552999999999997px;font-size:6.7px;color:#333;-webkit-text-stroke:0.1px #333">7</div></div>
<div style="left:1.8px;top:285.471px;width:12.6px;height:9.552999999999997px;overflow:hidden;"><div class="t" style="position:absolute;left:0;width:12.6px;text-align:center;top:0.8px;line-height:9.552999999999997px;font-size:6.7px;color:#333;-webkit-text-stroke:0.1px #333">8</div></div>
<div style="left:1.8px;top:295.024px;width:12.6px;height:9.552999999999997px;overflow:hidden;"><div class="t" style="position:absolute;left:0;width:12.6px;text-align:center;top:0.8px;line-height:9.552999999999997px;font-size:6.7px;color:#333;-webkit-text-stroke:0.1px #333">9</div></div>
<div style="left:1.8px;top:304.577px;width:12.6px;height:9.552999999999997px;overflow:hidden;"><div class="t" style="position:absolute;left:0;width:12.6px;text-align:center;top:0.8px;line-height:9.552999999999997px;font-size:6.7px;color:#333;-webkit-text-stroke:0.1px #333">10</div></div>
<div style="left:1.8px;top:314.13px;width:12.6px;height:9.552999999999997px;overflow:hidden;"><div class="t" style="position:absolute;left:0;width:12.6px;text-align:center;top:0.8px;line-height:9.552999999999997px;font-size:6.7px;color:#333;-webkit-text-stroke:0.1px #333">11</div></div>
<div style="left:1.8px;top:323.683px;width:12.6px;height:9.552999999999997px;overflow:hidden;"><div class="t" style="position:absolute;left:0;width:12.6px;text-align:center;top:0.8px;line-height:9.552999999999997px;font-size:6.7px;color:#333;-webkit-text-stroke:0.1px #333">12</div></div>
<div style="left:1.8px;top:333.236px;width:12.6px;height:9.552999999999997px;overflow:hidden;"><div class="t" style="position:absolute;left:0;width:12.6px;text-align:center;top:0.8px;line-height:9.552999999999997px;font-size:6.7px;color:#333;-webkit-text-stroke:0.1px #333">13</div></div>
<div style="left:1.8px;top:342.789px;width:12.6px;height:0.8110000000000355px;overflow:hidden;"><div class="t" style="position:absolute;left:0;width:12.6px;text-align:center;top:0.8px;line-height:9.552999999999997px;font-size:6.7px;color:#333;-webkit-text-stroke:0.1px #333">14</div></div>
<div style="left:14.8px;top:218.6px;width:26.599999999999998px;height:9.852999999999998px;overflow:hidden;"><div class="t" style="position:absolute;left:0;right:0;padding:0 1.1px 0 1.0px;text-align:left;top:0.6px;line-height:9.552999999999997px;font-size:6.4px;font-weight:bold;color:#000;white-space:nowrap;-webkit-text-stroke:0.12px #000"><span style="display:inline-block;">Ignore</span></div></div>
<div style="left:42.199999999999996px;top:218.6px;width:76.2px;height:9.852999999999998px;overflow:hidden;"><div class="t" style="position:absolute;left:0;right:0;padding:0 1.1px 0 1.0px;text-align:left;top:0.6px;line-height:9.552999999999997px;font-size:6.4px;font-weight:bold;color:#000;white-space:nowrap;-webkit-text-stroke:0.12px #000"><span style="display:inline-block;">Record Type Schema Name</span></div></div>
<div style="left:119.2px;top:218.6px;width:52.099999999999994px;height:9.852999999999998px;overflow:hidden;"><div class="t" style="position:absolute;left:0;right:0;padding:0 1.1px 0 1.0px;text-align:left;top:0.6px;line-height:9.552999999999997px;font-size:6.4px;font-weight:bold;color:#000;white-space:nowrap;-webkit-text-stroke:0.12px #000"><span style="display:inline-block;">Schema Name</span></div></div>
<div style="left:172.1px;top:218.6px;width:64.10000000000001px;height:9.852999999999998px;overflow:hidden;"><div class="t" style="position:absolute;left:0;right:0;padding:0 1.1px 0 1.0px;text-align:left;top:0.6px;line-height:9.552999999999997px;font-size:6.4px;font-weight:bold;color:#000;white-space:nowrap;-webkit-text-stroke:0.12px #000"><span style="display:inline-block;">Display Name</span></div></div>
<div style="left:237.0px;top:218.6px;width:46.90000000000002px;height:9.852999999999998px;overflow:hidden;"><div class="t" style="position:absolute;left:0;right:0;padding:0 1.1px 0 1.0px;text-align:left;top:0.6px;line-height:9.552999999999997px;font-size:6.4px;font-weight:bold;color:#000;white-space:nowrap;-webkit-text-stroke:0.12px #000"><span style="display:inline-block;">Field Type</span></div></div>
<div style="left:284.7px;top:218.6px;width:72.2px;height:9.852999999999998px;overflow:hidden;"><div class="t" style="position:absolute;left:0;right:0;padding:0 1.1px 0 1.0px;text-align:left;top:0.6px;line-height:9.552999999999997px;font-size:6.4px;font-weight:bold;color:#000;white-space:nowrap;-webkit-text-stroke:0.12px #000"><span style="display:inline-block;">Description</span></div></div>
<div style="left:357.7px;top:218.6px;width:73.29999999999997px;height:9.852999999999998px;overflow:hidden;"><div class="t" style="position:absolute;left:0;right:0;padding:0 1.1px 0 1.0px;text-align:left;top:0.6px;line-height:9.552999999999997px;font-size:6.4px;font-weight:bold;color:#000;white-space:nowrap;-webkit-text-stroke:0.12px #000"><span style="display:inline-block;">Is Primary Field</span></div></div>
<div style="left:431.79999999999995px;top:218.6px;width:39.500000000000014px;height:9.852999999999998px;overflow:hidden;"><div class="t" style="position:absolute;left:0;right:0;padding:0 1.1px 0 1.0px;text-align:left;top:0.6px;line-height:9.552999999999997px;font-size:6.4px;font-weight:bold;color:#000;white-space:nowrap;-webkit-text-stroke:0.12px #000"><span style="display:inline-block;">Is Mandatory</span></div></div>
<div style="left:472.09999999999997px;top:218.6px;width:23.800000000000022px;height:9.852999999999998px;overflow:hidden;"><div class="t" style="position:absolute;left:0;right:0;padding:0 1.1px 0 1.0px;text-align:left;top:0.6px;line-height:9.552999999999997px;font-size:6.4px;font-weight:bold;color:#000;white-space:nowrap;-webkit-text-stroke:0.12px #000"><span style="display:inline-block;">Audit</span></div></div>
<div style="left:496.7px;top:218.6px;width:36.79999999999997px;height:9.852999999999998px;overflow:hidden;"><div class="t" style="position:absolute;left:0;right:0;padding:0 1.1px 0 1.0px;text-align:left;top:0.6px;line-height:9.552999999999997px;font-size:6.4px;font-weight:bold;color:#000;white-space:nowrap;-webkit-text-stroke:0.12px #000"><span style="display:inline-block;">Searchable</span></div></div>
<div style="left:534.3px;top:218.6px;width:37.00000000000007px;height:9.852999999999998px;overflow:hidden;"><div class="t" style="position:absolute;left:0;right:0;padding:0 1.1px 0 1.0px;text-align:left;top:0.6px;line-height:9.552999999999997px;font-size:6.4px;font-weight:bold;color:#000;white-space:nowrap;-webkit-text-stroke:0.12px #000"><span style="display:inline-block;">View Order</span></div></div>
<div style="left:572.1px;top:218.6px;width:36.59999999999998px;height:9.852999999999998px;overflow:hidden;"><div class="t" style="position:absolute;left:0;right:0;padding:0 1.1px 0 1.0px;text-align:left;top:0.6px;line-height:9.552999999999997px;font-size:6.4px;font-weight:bold;color:#000;white-space:nowrap;-webkit-text-stroke:0.12px #000"><span style="display:inline-block;">View Width</span></div></div>
<div style="left:609.5px;top:218.6px;width:47.7px;height:9.852999999999998px;overflow:hidden;"><div class="t" style="position:absolute;left:0;right:0;padding:0 1.1px 0 1.0px;text-align:left;top:0.6px;line-height:9.552999999999997px;font-size:6.4px;font-weight:bold;color:#000;white-space:nowrap;-webkit-text-stroke:0.12px #000"><span style="display:inline-block;">Referenced Record Type</span></div></div>
<div style="left:658.0px;top:218.6px;width:46.7px;height:9.852999999999998px;overflow:hidden;"><div class="t" style="position:absolute;left:0;right:0;padding:0 1.1px 0 1.0px;text-align:left;top:0.6px;line-height:9.552999999999997px;font-size:6.4px;font-weight:bold;color:#000;white-space:nowrap;-webkit-text-stroke:0.12px #000"><span style="display:inline-block;">Display In Related</span></div></div>
<div style="left:705.5px;top:218.6px;width:4.7px;height:9.852999999999998px;overflow:hidden;"><div class="t" style="position:absolute;left:0;right:0;padding:0 1.1px 0 1.0px;text-align:left;top:0.6px;line-height:9.552999999999997px;font-size:6.4px;font-weight:bold;color:#000;white-space:nowrap;-webkit-text-stroke:0.12px #000"><span style="display:inline-block;">N</span></div></div>
<div style="left:14.8px;top:228.153px;width:26.599999999999998px;height:9.852999999999998px;overflow:hidden;"><div class="t" style="position:absolute;left:0;right:0;padding:0 1.1px 0 1.0px;text-align:center;top:1.0px;line-height:9.552999999999997px;font-size:7.6px;font-weight:normal;color:#000;white-space:nowrap;-webkit-text-stroke:0.12px #000"><span style="display:inline-block;transform:scaleX(0.76);transform-origin:center;">FALSE</span></div></div>
<div style="left:42.199999999999996px;top:228.153px;width:76.2px;height:9.852999999999998px;overflow:hidden;"><div class="t" style="position:absolute;left:0;right:0;padding:0 1.1px 0 1.0px;text-align:left;top:1.0px;line-height:9.552999999999997px;font-size:7.0px;font-weight:normal;color:#000;white-space:nowrap;-webkit-text-stroke:0.12px #000"><span style="display:inline-block;">new_testentity2</span></div></div>
<div style="left:119.2px;top:228.153px;width:52.099999999999994px;height:9.852999999999998px;overflow:hidden;"><div class="t" style="position:absolute;left:0;right:0;padding:0 1.1px 0 1.0px;text-align:left;top:1.0px;line-height:9.552999999999997px;font-size:7.0px;font-weight:normal;color:#000;white-space:nowrap;-webkit-text-stroke:0.12px #000"><span style="display:inline-block;">new_name</span></div></div>
<div style="left:172.1px;top:228.153px;width:64.10000000000001px;height:9.852999999999998px;overflow:hidden;"><div class="t" style="position:absolute;left:0;right:0;padding:0 1.1px 0 1.0px;text-align:left;top:1.0px;line-height:9.552999999999997px;font-size:7.0px;font-weight:normal;color:#000;white-space:nowrap;-webkit-text-stroke:0.12px #000"><span style="display:inline-block;">Name</span></div></div>
<div style="left:237.0px;top:228.153px;width:46.90000000000002px;height:9.852999999999998px;overflow:hidden;"><div class="t" style="position:absolute;left:0;right:0;padding:0 1.1px 0 1.0px;text-align:left;top:1.0px;line-height:9.552999999999997px;font-size:7.0px;font-weight:normal;color:#000;white-space:nowrap;-webkit-text-stroke:0.12px #000"><span style="display:inline-block;">String</span></div></div>
<div style="left:284.7px;top:228.153px;width:72.2px;height:9.852999999999998px;overflow:hidden;"><div class="t" style="position:absolute;left:0;right:0;padding:0 1.1px 0 1.0px;text-align:left;top:1.0px;line-height:9.552999999999997px;font-size:7.0px;font-weight:normal;color:#000;white-space:nowrap;-webkit-text-stroke:0.12px #000"><span style="display:inline-block;">The Primary Field</span></div></div>
<div style="left:357.7px;top:228.153px;width:73.29999999999997px;height:9.852999999999998px;overflow:hidden;"><div class="t" style="position:absolute;left:0;right:0;padding:0 1.1px 0 1.0px;text-align:center;top:1.0px;line-height:9.552999999999997px;font-size:7.6px;font-weight:normal;color:#000;white-space:nowrap;-webkit-text-stroke:0.12px #000"><span style="display:inline-block;transform:scaleX(0.76);transform-origin:center;">TRUE</span></div></div>
<div style="left:431.79999999999995px;top:228.153px;width:39.500000000000014px;height:9.852999999999998px;overflow:hidden;"><div class="t" style="position:absolute;left:0;right:0;padding:0 1.1px 0 1.0px;text-align:center;top:1.0px;line-height:9.552999999999997px;font-size:7.6px;font-weight:normal;color:#000;white-space:nowrap;-webkit-text-stroke:0.12px #000"><span style="display:inline-block;transform:scaleX(0.76);transform-origin:center;">TRUE</span></div></div>
<div style="left:472.09999999999997px;top:228.153px;width:23.800000000000022px;height:9.852999999999998px;overflow:hidden;"><div class="t" style="position:absolute;left:0;right:0;padding:0 1.1px 0 1.0px;text-align:center;top:1.0px;line-height:9.552999999999997px;font-size:7.6px;font-weight:normal;color:#000;white-space:nowrap;-webkit-text-stroke:0.12px #000"><span style="display:inline-block;transform:scaleX(0.76);transform-origin:center;">FALSE</span></div></div>
<div style="left:496.7px;top:228.153px;width:36.79999999999997px;height:9.852999999999998px;overflow:hidden;"><div class="t" style="position:absolute;left:0;right:0;padding:0 1.1px 0 1.0px;text-align:center;top:1.0px;line-height:9.552999999999997px;font-size:7.6px;font-weight:normal;color:#000;white-space:nowrap;-webkit-text-stroke:0.12px #000"><span style="display:inline-block;transform:scaleX(0.76);transform-origin:center;">TRUE</span></div></div>
<div style="left:534.3px;top:228.153px;width:37.00000000000007px;height:9.852999999999998px;overflow:hidden;"><div class="t" style="position:absolute;left:0;right:0;padding:0 1.1px 0 1.0px;text-align:right;top:1.0px;line-height:9.552999999999997px;font-size:7.0px;font-weight:normal;color:#000;white-space:nowrap;-webkit-text-stroke:0.12px #000"><span style="display:inline-block;">1</span></div></div>
<div style="left:572.1px;top:228.153px;width:36.59999999999998px;height:9.852999999999998px;overflow:hidden;"><div class="t" style="position:absolute;left:0;right:0;padding:0 1.1px 0 1.0px;text-align:right;top:1.0px;line-height:9.552999999999997px;font-size:7.0px;font-weight:normal;color:#000;white-space:nowrap;-webkit-text-stroke:0.12px #000"><span style="display:inline-block;">200</span></div></div>
<div style="left:658.0px;top:228.153px;width:46.7px;height:9.852999999999998px;overflow:hidden;"><div class="t" style="position:absolute;left:0;right:0;padding:0 1.1px 0 1.0px;text-align:center;top:1.0px;line-height:9.552999999999997px;font-size:7.6px;font-weight:normal;color:#000;white-space:nowrap;-webkit-text-stroke:0.12px #000"><span style="display:inline-block;transform:scaleX(0.76);transform-origin:center;">FALSE</span></div></div>
<div style="left:14.8px;top:237.706px;width:26.599999999999998px;height:9.852999999999998px;overflow:hidden;"><div class="t" style="position:absolute;left:0;right:0;padding:0 1.1px 0 1.0px;text-align:center;top:1.0px;line-height:9.552999999999997px;font-size:7.6px;font-weight:normal;color:#000;white-space:nowrap;-webkit-text-stroke:0.12px #000"><span style="display:inline-block;transform:scaleX(0.76);transform-origin:center;">FALSE</span></div></div>
<div style="left:42.199999999999996px;top:237.706px;width:76.2px;height:9.852999999999998px;overflow:hidden;"><div class="t" style="position:absolute;left:0;right:0;padding:0 1.1px 0 1.0px;text-align:left;top:1.0px;line-height:9.552999999999997px;font-size:7.0px;font-weight:normal;color:#000;white-space:nowrap;-webkit-text-stroke:0.12px #000"><span style="display:inline-block;">new_testentity2</span></div></div>
<div style="left:119.2px;top:237.706px;width:52.099999999999994px;height:9.852999999999998px;overflow:hidden;"><div class="t" style="position:absolute;left:0;right:0;padding:0 1.1px 0 1.0px;text-align:left;top:1.0px;line-height:9.552999999999997px;font-size:7.0px;font-weight:normal;color:#000;white-space:nowrap;-webkit-text-stroke:0.12px #000"><span style="display:inline-block;">new_string</span></div></div>
<div style="left:172.1px;top:237.706px;width:64.10000000000001px;height:9.852999999999998px;overflow:hidden;"><div class="t" style="position:absolute;left:0;right:0;padding:0 1.1px 0 1.0px;text-align:left;top:1.0px;line-height:9.552999999999997px;font-size:7.0px;font-weight:normal;color:#000;white-space:nowrap;-webkit-text-stroke:0.12px #000"><span style="display:inline-block;">String</span></div></div>
<div style="left:237.0px;top:237.706px;width:46.90000000000002px;height:9.852999999999998px;overflow:hidden;"><div class="t" style="position:absolute;left:0;right:0;padding:0 1.1px 0 1.0px;text-align:left;top:1.0px;line-height:9.552999999999997px;font-size:7.0px;font-weight:normal;color:#000;white-space:nowrap;-webkit-text-stroke:0.12px #000"><span style="display:inline-block;">String</span></div></div>
<div style="left:284.7px;top:237.706px;width:72.2px;height:9.852999999999998px;overflow:hidden;"><div class="t" style="position:absolute;left:0;right:0;padding:0 1.1px 0 1.0px;text-align:left;top:1.0px;line-height:9.552999999999997px;font-size:7.0px;font-weight:normal;color:#000;white-space:nowrap;-webkit-text-stroke:0.12px #000"><span style="display:inline-block;">This is a string</span></div></div>
<div style="left:357.7px;top:237.706px;width:73.29999999999997px;height:9.852999999999998px;overflow:hidden;"><div class="t" style="position:absolute;left:0;right:0;padding:0 1.1px 0 1.0px;text-align:center;top:1.0px;line-height:9.552999999999997px;font-size:7.6px;font-weight:normal;color:#000;white-space:nowrap;-webkit-text-stroke:0.12px #000"><span style="display:inline-block;transform:scaleX(0.76);transform-origin:center;">FALSE</span></div></div>
<div style="left:431.79999999999995px;top:237.706px;width:39.500000000000014px;height:9.852999999999998px;overflow:hidden;"><div class="t" style="position:absolute;left:0;right:0;padding:0 1.1px 0 1.0px;text-align:center;top:1.0px;line-height:9.552999999999997px;font-size:7.6px;font-weight:normal;color:#000;white-space:nowrap;-webkit-text-stroke:0.12px #000"><span style="display:inline-block;transform:scaleX(0.76);transform-origin:center;">FALSE</span></div></div>
<div style="left:472.09999999999997px;top:237.706px;width:23.800000000000022px;height:9.852999999999998px;overflow:hidden;"><div class="t" style="position:absolute;left:0;right:0;padding:0 1.1px 0 1.0px;text-align:center;top:1.0px;line-height:9.552999999999997px;font-size:7.6px;font-weight:normal;color:#000;white-space:nowrap;-webkit-text-stroke:0.12px #000"><span style="display:inline-block;transform:scaleX(0.76);transform-origin:center;">FALSE</span></div></div>
<div style="left:496.7px;top:237.706px;width:36.79999999999997px;height:9.852999999999998px;overflow:hidden;"><div class="t" style="position:absolute;left:0;right:0;padding:0 1.1px 0 1.0px;text-align:center;top:1.0px;line-height:9.552999999999997px;font-size:7.6px;font-weight:normal;color:#000;white-space:nowrap;-webkit-text-stroke:0.12px #000"><span style="display:inline-block;transform:scaleX(0.76);transform-origin:center;">FALSE</span></div></div>
<div style="left:534.3px;top:237.706px;width:37.00000000000007px;height:9.852999999999998px;overflow:hidden;"><div class="t" style="position:absolute;left:0;right:0;padding:0 1.1px 0 1.0px;text-align:right;top:1.0px;line-height:9.552999999999997px;font-size:7.0px;font-weight:normal;color:#000;white-space:nowrap;-webkit-text-stroke:0.12px #000"><span style="display:inline-block;">1</span></div></div>
<div style="left:572.1px;top:237.706px;width:36.59999999999998px;height:9.852999999999998px;overflow:hidden;"><div class="t" style="position:absolute;left:0;right:0;padding:0 1.1px 0 1.0px;text-align:right;top:1.0px;line-height:9.552999999999997px;font-size:7.0px;font-weight:normal;color:#000;white-space:nowrap;-webkit-text-stroke:0.12px #000"><span style="display:inline-block;">100</span></div></div>
<div style="left:658.0px;top:237.706px;width:46.7px;height:9.852999999999998px;overflow:hidden;"><div class="t" style="position:absolute;left:0;right:0;padding:0 1.1px 0 1.0px;text-align:center;top:1.0px;line-height:9.552999999999997px;font-size:7.6px;font-weight:normal;color:#000;white-space:nowrap;-webkit-text-stroke:0.12px #000"><span style="display:inline-block;transform:scaleX(0.76);transform-origin:center;">FALSE</span></div></div>
<div style="left:14.8px;top:247.259px;width:26.599999999999998px;height:9.853000000000026px;overflow:hidden;"><div class="t" style="position:absolute;left:0;right:0;padding:0 1.1px 0 1.0px;text-align:center;top:1.0px;line-height:9.553000000000026px;font-size:7.6px;font-weight:normal;color:#000;white-space:nowrap;-webkit-text-stroke:0.12px #000"><span style="display:inline-block;transform:scaleX(0.76);transform-origin:center;">FALSE</span></div></div>
<div style="left:42.199999999999996px;top:247.259px;width:76.2px;height:9.853000000000026px;overflow:hidden;"><div class="t" style="position:absolute;left:0;right:0;padding:0 1.1px 0 1.0px;text-align:left;top:1.0px;line-height:9.553000000000026px;font-size:7.0px;font-weight:normal;color:#000;white-space:nowrap;-webkit-text-stroke:0.12px #000"><span style="display:inline-block;">new_testentity2</span></div></div>
<div style="left:119.2px;top:247.259px;width:52.099999999999994px;height:9.853000000000026px;overflow:hidden;"><div class="t" style="position:absolute;left:0;right:0;padding:0 1.1px 0 1.0px;text-align:left;top:1.0px;line-height:9.553000000000026px;font-size:7.0px;font-weight:normal;color:#000;white-space:nowrap;-webkit-text-stroke:0.12px #000"><span style="display:inline-block;">new_picklist</span></div></div>
<div style="left:172.1px;top:247.259px;width:64.10000000000001px;height:9.853000000000026px;overflow:hidden;"><div class="t" style="position:absolute;left:0;right:0;padding:0 1.1px 0 1.0px;text-align:left;top:1.0px;line-height:9.553000000000026px;font-size:7.0px;font-weight:normal;color:#000;white-space:nowrap;-webkit-text-stroke:0.12px #000"><span style="display:inline-block;">Picklist</span></div></div>
<div style="left:237.0px;top:247.259px;width:46.90000000000002px;height:9.853000000000026px;overflow:hidden;"><div class="t" style="position:absolute;left:0;right:0;padding:0 1.1px 0 1.0px;text-align:left;top:1.0px;line-height:9.553000000000026px;font-size:7.0px;font-weight:normal;color:#000;white-space:nowrap;-webkit-text-stroke:0.12px #000"><span style="display:inline-block;">Picklist</span></div></div>
<div style="left:284.7px;top:247.259px;width:72.2px;height:9.853000000000026px;overflow:hidden;"><div class="t" style="position:absolute;left:0;right:0;padding:0 1.1px 0 1.0px;text-align:left;top:1.0px;line-height:9.553000000000026px;font-size:7.0px;font-weight:normal;color:#000;white-space:nowrap;-webkit-text-stroke:0.12px #000"><span style="display:inline-block;">This is a picklist</span></div></div>
<div style="left:357.7px;top:247.259px;width:73.29999999999997px;height:9.853000000000026px;overflow:hidden;"><div class="t" style="position:absolute;left:0;right:0;padding:0 1.1px 0 1.0px;text-align:center;top:1.0px;line-height:9.553000000000026px;font-size:7.6px;font-weight:normal;color:#000;white-space:nowrap;-webkit-text-stroke:0.12px #000"><span style="display:inline-block;transform:scaleX(0.76);transform-origin:center;">FALSE</span></div></div>
<div style="left:431.79999999999995px;top:247.259px;width:39.500000000000014px;height:9.853000000000026px;overflow:hidden;"><div class="t" style="position:absolute;left:0;right:0;padding:0 1.1px 0 1.0px;text-align:center;top:1.0px;line-height:9.553000000000026px;font-size:7.6px;font-weight:normal;color:#000;white-space:nowrap;-webkit-text-stroke:0.12px #000"><span style="display:inline-block;transform:scaleX(0.76);transform-origin:center;">FALSE</span></div></div>
<div style="left:472.09999999999997px;top:247.259px;width:23.800000000000022px;height:9.853000000000026px;overflow:hidden;"><div class="t" style="position:absolute;left:0;right:0;padding:0 1.1px 0 1.0px;text-align:center;top:1.0px;line-height:9.553000000000026px;font-size:7.6px;font-weight:normal;color:#000;white-space:nowrap;-webkit-text-stroke:0.12px #000"><span style="display:inline-block;transform:scaleX(0.76);transform-origin:center;">FALSE</span></div></div>
<div style="left:496.7px;top:247.259px;width:36.79999999999997px;height:9.853000000000026px;overflow:hidden;"><div class="t" style="position:absolute;left:0;right:0;padding:0 1.1px 0 1.0px;text-align:center;top:1.0px;line-height:9.553000000000026px;font-size:7.6px;font-weight:normal;color:#000;white-space:nowrap;-webkit-text-stroke:0.12px #000"><span style="display:inline-block;transform:scaleX(0.76);transform-origin:center;">FALSE</span></div></div>
<div style="left:534.3px;top:247.259px;width:37.00000000000007px;height:9.853000000000026px;overflow:hidden;"><div class="t" style="position:absolute;left:0;right:0;padding:0 1.1px 0 1.0px;text-align:right;top:1.0px;line-height:9.553000000000026px;font-size:7.0px;font-weight:normal;color:#000;white-space:nowrap;-webkit-text-stroke:0.12px #000"><span style="display:inline-block;">2</span></div></div>
<div style="left:572.1px;top:247.259px;width:36.59999999999998px;height:9.853000000000026px;overflow:hidden;"><div class="t" style="position:absolute;left:0;right:0;padding:0 1.1px 0 1.0px;text-align:right;top:1.0px;line-height:9.553000000000026px;font-size:7.0px;font-weight:normal;color:#000;white-space:nowrap;-webkit-text-stroke:0.12px #000"><span style="display:inline-block;">125</span></div></div>
<div style="left:658.0px;top:247.259px;width:46.7px;height:9.853000000000026px;overflow:hidden;"><div class="t" style="position:absolute;left:0;right:0;padding:0 1.1px 0 1.0px;text-align:center;top:1.0px;line-height:9.553000000000026px;font-size:7.6px;font-weight:normal;color:#000;white-space:nowrap;-webkit-text-stroke:0.12px #000"><span style="display:inline-block;transform:scaleX(0.76);transform-origin:center;">FALSE</span></div></div>
<div style="left:14.8px;top:256.812px;width:26.599999999999998px;height:9.852999999999998px;overflow:hidden;"><div class="t" style="position:absolute;left:0;right:0;padding:0 1.1px 0 1.0px;text-align:center;top:1.0px;line-height:9.552999999999997px;font-size:7.6px;font-weight:normal;color:#000;white-space:nowrap;-webkit-text-stroke:0.12px #000"><span style="display:inline-block;transform:scaleX(0.76);transform-origin:center;">FALSE</span></div></div>
<div style="left:42.199999999999996px;top:256.812px;width:76.2px;height:9.852999999999998px;overflow:hidden;"><div class="t" style="position:absolute;left:0;right:0;padding:0 1.1px 0 1.0px;text-align:left;top:1.0px;line-height:9.552999999999997px;font-size:7.0px;font-weight:normal;color:#000;white-space:nowrap;-webkit-text-stroke:0.12px #000"><span style="display:inline-block;">new_testentity2</span></div></div>
<div style="left:119.2px;top:256.812px;width:52.099999999999994px;height:9.852999999999998px;overflow:hidden;"><div class="t" style="position:absolute;left:0;right:0;padding:0 1.1px 0 1.0px;text-align:left;top:1.0px;line-height:9.552999999999997px;font-size:7.0px;font-weight:normal;color:#000;white-space:nowrap;-webkit-text-stroke:0.12px #000"><span style="display:inline-block;">new_sharedpicklist</span></div></div>
<div style="left:172.1px;top:256.812px;width:64.10000000000001px;height:9.852999999999998px;overflow:hidden;"><div class="t" style="position:absolute;left:0;right:0;padding:0 1.1px 0 1.0px;text-align:left;top:1.0px;line-height:9.552999999999997px;font-size:7.0px;font-weight:normal;color:#000;white-space:nowrap;-webkit-text-stroke:0.12px #000"><span style="display:inline-block;">Shared Picklist</span></div></div>
<div style="left:237.0px;top:256.812px;width:46.90000000000002px;height:9.852999999999998px;overflow:hidden;"><div class="t" style="position:absolute;left:0;right:0;padding:0 1.1px 0 1.0px;text-align:left;top:1.0px;line-height:9.552999999999997px;font-size:7.0px;font-weight:normal;color:#000;white-space:nowrap;-webkit-text-stroke:0.12px #000"><span style="display:inline-block;">Picklist</span></div></div>
<div style="left:284.7px;top:256.812px;width:72.2px;height:9.852999999999998px;overflow:hidden;"><div class="t" style="position:absolute;left:0;right:0;padding:0 1.1px 0 1.0px;text-align:left;top:1.0px;line-height:9.552999999999997px;font-size:7.0px;font-weight:normal;color:#000;white-space:nowrap;-webkit-text-stroke:0.12px #000"><span style="display:inline-block;">This is a shared picklist</span></div></div>
<div style="left:357.7px;top:256.812px;width:73.29999999999997px;height:9.852999999999998px;overflow:hidden;"><div class="t" style="position:absolute;left:0;right:0;padding:0 1.1px 0 1.0px;text-align:center;top:1.0px;line-height:9.552999999999997px;font-size:7.6px;font-weight:normal;color:#000;white-space:nowrap;-webkit-text-stroke:0.12px #000"><span style="display:inline-block;transform:scaleX(0.76);transform-origin:center;">FALSE</span></div></div>
<div style="left:431.79999999999995px;top:256.812px;width:39.500000000000014px;height:9.852999999999998px;overflow:hidden;"><div class="t" style="position:absolute;left:0;right:0;padding:0 1.1px 0 1.0px;text-align:center;top:1.0px;line-height:9.552999999999997px;font-size:7.6px;font-weight:normal;color:#000;white-space:nowrap;-webkit-text-stroke:0.12px #000"><span style="display:inline-block;transform:scaleX(0.76);transform-origin:center;">FALSE</span></div></div>
<div style="left:472.09999999999997px;top:256.812px;width:23.800000000000022px;height:9.852999999999998px;overflow:hidden;"><div class="t" style="position:absolute;left:0;right:0;padding:0 1.1px 0 1.0px;text-align:center;top:1.0px;line-height:9.552999999999997px;font-size:7.6px;font-weight:normal;color:#000;white-space:nowrap;-webkit-text-stroke:0.12px #000"><span style="display:inline-block;transform:scaleX(0.76);transform-origin:center;">FALSE</span></div></div>
<div style="left:496.7px;top:256.812px;width:36.79999999999997px;height:9.852999999999998px;overflow:hidden;"><div class="t" style="position:absolute;left:0;right:0;padding:0 1.1px 0 1.0px;text-align:center;top:1.0px;line-height:9.552999999999997px;font-size:7.6px;font-weight:normal;color:#000;white-space:nowrap;-webkit-text-stroke:0.12px #000"><span style="display:inline-block;transform:scaleX(0.76);transform-origin:center;">FALSE</span></div></div>
<div style="left:534.3px;top:256.812px;width:37.00000000000007px;height:9.852999999999998px;overflow:hidden;"><div class="t" style="position:absolute;left:0;right:0;padding:0 1.1px 0 1.0px;text-align:right;top:1.0px;line-height:9.552999999999997px;font-size:7.0px;font-weight:normal;color:#000;white-space:nowrap;-webkit-text-stroke:0.12px #000"><span style="display:inline-block;">2</span></div></div>
<div style="left:572.1px;top:256.812px;width:36.59999999999998px;height:9.852999999999998px;overflow:hidden;"><div class="t" style="position:absolute;left:0;right:0;padding:0 1.1px 0 1.0px;text-align:right;top:1.0px;line-height:9.552999999999997px;font-size:7.0px;font-weight:normal;color:#000;white-space:nowrap;-webkit-text-stroke:0.12px #000"><span style="display:inline-block;">125</span></div></div>
<div style="left:658.0px;top:256.812px;width:46.7px;height:9.852999999999998px;overflow:hidden;"><div class="t" style="position:absolute;left:0;right:0;padding:0 1.1px 0 1.0px;text-align:center;top:1.0px;line-height:9.552999999999997px;font-size:7.6px;font-weight:normal;color:#000;white-space:nowrap;-webkit-text-stroke:0.12px #000"><span style="display:inline-block;transform:scaleX(0.76);transform-origin:center;">FALSE</span></div></div>
<div style="left:14.8px;top:266.365px;width:26.599999999999998px;height:9.852999999999998px;overflow:hidden;"><div class="t" style="position:absolute;left:0;right:0;padding:0 1.1px 0 1.0px;text-align:center;top:1.0px;line-height:9.552999999999997px;font-size:7.6px;font-weight:normal;color:#000;white-space:nowrap;-webkit-text-stroke:0.12px #000"><span style="display:inline-block;transform:scaleX(0.76);transform-origin:center;">FALSE</span></div></div>
<div style="left:42.199999999999996px;top:266.365px;width:76.2px;height:9.852999999999998px;overflow:hidden;"><div class="t" style="position:absolute;left:0;right:0;padding:0 1.1px 0 1.0px;text-align:left;top:1.0px;line-height:9.552999999999997px;font-size:7.0px;font-weight:normal;color:#000;white-space:nowrap;-webkit-text-stroke:0.12px #000"><span style="display:inline-block;">new_testentity2</span></div></div>
<div style="left:119.2px;top:266.365px;width:52.099999999999994px;height:9.852999999999998px;overflow:hidden;"><div class="t" style="position:absolute;left:0;right:0;padding:0 1.1px 0 1.0px;text-align:left;top:1.0px;line-height:9.552999999999997px;font-size:7.0px;font-weight:normal;color:#000;white-space:nowrap;-webkit-text-stroke:0.12px #000"><span style="display:inline-block;">new_integer</span></div></div>
<div style="left:172.1px;top:266.365px;width:64.10000000000001px;height:9.852999999999998px;overflow:hidden;"><div class="t" style="position:absolute;left:0;right:0;padding:0 1.1px 0 1.0px;text-align:left;top:1.0px;line-height:9.552999999999997px;font-size:7.0px;font-weight:normal;color:#000;white-space:nowrap;-webkit-text-stroke:0.12px #000"><span style="display:inline-block;">Integer</span></div></div>
<div style="left:237.0px;top:266.365px;width:46.90000000000002px;height:9.852999999999998px;overflow:hidden;"><div class="t" style="position:absolute;left:0;right:0;padding:0 1.1px 0 1.0px;text-align:left;top:1.0px;line-height:9.552999999999997px;font-size:7.0px;font-weight:normal;color:#000;white-space:nowrap;-webkit-text-stroke:0.12px #000"><span style="display:inline-block;">Integer</span></div></div>
<div style="left:284.7px;top:266.365px;width:72.2px;height:9.852999999999998px;overflow:hidden;"><div class="t" style="position:absolute;left:0;right:0;padding:0 1.1px 0 1.0px;text-align:left;top:1.0px;line-height:9.552999999999997px;font-size:7.0px;font-weight:normal;color:#000;white-space:nowrap;-webkit-text-stroke:0.12px #000"><span style="display:inline-block;">This is a integer</span></div></div>
<div style="left:357.7px;top:266.365px;width:73.29999999999997px;height:9.852999999999998px;overflow:hidden;"><div class="t" style="position:absolute;left:0;right:0;padding:0 1.1px 0 1.0px;text-align:center;top:1.0px;line-height:9.552999999999997px;font-size:7.6px;font-weight:normal;color:#000;white-space:nowrap;-webkit-text-stroke:0.12px #000"><span style="display:inline-block;transform:scaleX(0.76);transform-origin:center;">FALSE</span></div></div>
<div style="left:431.79999999999995px;top:266.365px;width:39.500000000000014px;height:9.852999999999998px;overflow:hidden;"><div class="t" style="position:absolute;left:0;right:0;padding:0 1.1px 0 1.0px;text-align:center;top:1.0px;line-height:9.552999999999997px;font-size:7.6px;font-weight:normal;color:#000;white-space:nowrap;-webkit-text-stroke:0.12px #000"><span style="display:inline-block;transform:scaleX(0.76);transform-origin:center;">FALSE</span></div></div>
<div style="left:472.09999999999997px;top:266.365px;width:23.800000000000022px;height:9.852999999999998px;overflow:hidden;"><div class="t" style="position:absolute;left:0;right:0;padding:0 1.1px 0 1.0px;text-align:center;top:1.0px;line-height:9.552999999999997px;font-size:7.6px;font-weight:normal;color:#000;white-space:nowrap;-webkit-text-stroke:0.12px #000"><span style="display:inline-block;transform:scaleX(0.76);transform-origin:center;">FALSE</span></div></div>
<div style="left:496.7px;top:266.365px;width:36.79999999999997px;height:9.852999999999998px;overflow:hidden;"><div class="t" style="position:absolute;left:0;right:0;padding:0 1.1px 0 1.0px;text-align:center;top:1.0px;line-height:9.552999999999997px;font-size:7.6px;font-weight:normal;color:#000;white-space:nowrap;-webkit-text-stroke:0.12px #000"><span style="display:inline-block;transform:scaleX(0.76);transform-origin:center;">FALSE</span></div></div>
<div style="left:534.3px;top:266.365px;width:37.00000000000007px;height:9.852999999999998px;overflow:hidden;"><div class="t" style="position:absolute;left:0;right:0;padding:0 1.1px 0 1.0px;text-align:right;top:1.0px;line-height:9.552999999999997px;font-size:7.0px;font-weight:normal;color:#000;white-space:nowrap;-webkit-text-stroke:0.12px #000"><span style="display:inline-block;">3</span></div></div>
<div style="left:572.1px;top:266.365px;width:36.59999999999998px;height:9.852999999999998px;overflow:hidden;"><div class="t" style="position:absolute;left:0;right:0;padding:0 1.1px 0 1.0px;text-align:right;top:1.0px;line-height:9.552999999999997px;font-size:7.0px;font-weight:normal;color:#000;white-space:nowrap;-webkit-text-stroke:0.12px #000"><span style="display:inline-block;">150</span></div></div>
<div style="left:658.0px;top:266.365px;width:46.7px;height:9.852999999999998px;overflow:hidden;"><div class="t" style="position:absolute;left:0;right:0;padding:0 1.1px 0 1.0px;text-align:center;top:1.0px;line-height:9.552999999999997px;font-size:7.6px;font-weight:normal;color:#000;white-space:nowrap;-webkit-text-stroke:0.12px #000"><span style="display:inline-block;transform:scaleX(0.76);transform-origin:center;">FALSE</span></div></div>
<div style="left:14.8px;top:275.918px;width:26.599999999999998px;height:9.852999999999998px;overflow:hidden;"><div class="t" style="position:absolute;left:0;right:0;padding:0 1.1px 0 1.0px;text-align:center;top:1.0px;line-height:9.552999999999997px;font-size:7.6px;font-weight:normal;color:#000;white-space:nowrap;-webkit-text-stroke:0.12px #000"><span style="display:inline-block;transform:scaleX(0.76);transform-origin:center;">FALSE</span></div></div>
<div style="left:42.199999999999996px;top:275.918px;width:76.2px;height:9.852999999999998px;overflow:hidden;"><div class="t" style="position:absolute;left:0;right:0;padding:0 1.1px 0 1.0px;text-align:left;top:1.0px;line-height:9.552999999999997px;font-size:7.0px;font-weight:normal;color:#000;white-space:nowrap;-webkit-text-stroke:0.12px #000"><span style="display:inline-block;">new_testentity2</span></div></div>
<div style="left:119.2px;top:275.918px;width:52.099999999999994px;height:9.852999999999998px;overflow:hidden;"><div class="t" style="position:absolute;left:0;right:0;padding:0 1.1px 0 1.0px;text-align:left;top:1.0px;line-height:9.552999999999997px;font-size:7.0px;font-weight:normal;color:#000;white-space:nowrap;-webkit-text-stroke:0.12px #000"><span style="display:inline-block;">new_boolean</span></div></div>
<div style="left:172.1px;top:275.918px;width:64.10000000000001px;height:9.852999999999998px;overflow:hidden;"><div class="t" style="position:absolute;left:0;right:0;padding:0 1.1px 0 1.0px;text-align:left;top:1.0px;line-height:9.552999999999997px;font-size:7.0px;font-weight:normal;color:#000;white-space:nowrap;-webkit-text-stroke:0.12px #000"><span style="display:inline-block;">Boolean</span></div></div>
<div style="left:237.0px;top:275.918px;width:46.90000000000002px;height:9.852999999999998px;overflow:hidden;"><div class="t" style="position:absolute;left:0;right:0;padding:0 1.1px 0 1.0px;text-align:left;top:1.0px;line-height:9.552999999999997px;font-size:7.0px;font-weight:normal;color:#000;white-space:nowrap;-webkit-text-stroke:0.12px #000"><span style="display:inline-block;">Boolean</span></div></div>
<div style="left:284.7px;top:275.918px;width:72.2px;height:9.852999999999998px;overflow:hidden;"><div class="t" style="position:absolute;left:0;right:0;padding:0 1.1px 0 1.0px;text-align:left;top:1.0px;line-height:9.552999999999997px;font-size:7.0px;font-weight:normal;color:#000;white-space:nowrap;-webkit-text-stroke:0.12px #000"><span style="display:inline-block;">This is a boolean</span></div></div>
<div style="left:357.7px;top:275.918px;width:73.29999999999997px;height:9.852999999999998px;overflow:hidden;"><div class="t" style="position:absolute;left:0;right:0;padding:0 1.1px 0 1.0px;text-align:center;top:1.0px;line-height:9.552999999999997px;font-size:7.6px;font-weight:normal;color:#000;white-space:nowrap;-webkit-text-stroke:0.12px #000"><span style="display:inline-block;transform:scaleX(0.76);transform-origin:center;">FALSE</span></div></div>
<div style="left:431.79999999999995px;top:275.918px;width:39.500000000000014px;height:9.852999999999998px;overflow:hidden;"><div class="t" style="position:absolute;left:0;right:0;padding:0 1.1px 0 1.0px;text-align:center;top:1.0px;line-height:9.552999999999997px;font-size:7.6px;font-weight:normal;color:#000;white-space:nowrap;-webkit-text-stroke:0.12px #000"><span style="display:inline-block;transform:scaleX(0.76);transform-origin:center;">FALSE</span></div></div>
<div style="left:472.09999999999997px;top:275.918px;width:23.800000000000022px;height:9.852999999999998px;overflow:hidden;"><div class="t" style="position:absolute;left:0;right:0;padding:0 1.1px 0 1.0px;text-align:center;top:1.0px;line-height:9.552999999999997px;font-size:7.6px;font-weight:normal;color:#000;white-space:nowrap;-webkit-text-stroke:0.12px #000"><span style="display:inline-block;transform:scaleX(0.76);transform-origin:center;">FALSE</span></div></div>
<div style="left:496.7px;top:275.918px;width:36.79999999999997px;height:9.852999999999998px;overflow:hidden;"><div class="t" style="position:absolute;left:0;right:0;padding:0 1.1px 0 1.0px;text-align:center;top:1.0px;line-height:9.552999999999997px;font-size:7.6px;font-weight:normal;color:#000;white-space:nowrap;-webkit-text-stroke:0.12px #000"><span style="display:inline-block;transform:scaleX(0.76);transform-origin:center;">FALSE</span></div></div>
<div style="left:534.3px;top:275.918px;width:37.00000000000007px;height:9.852999999999998px;overflow:hidden;"><div class="t" style="position:absolute;left:0;right:0;padding:0 1.1px 0 1.0px;text-align:right;top:1.0px;line-height:9.552999999999997px;font-size:7.0px;font-weight:normal;color:#000;white-space:nowrap;-webkit-text-stroke:0.12px #000"><span style="display:inline-block;">5</span></div></div>
<div style="left:658.0px;top:275.918px;width:46.7px;height:9.852999999999998px;overflow:hidden;"><div class="t" style="position:absolute;left:0;right:0;padding:0 1.1px 0 1.0px;text-align:center;top:1.0px;line-height:9.552999999999997px;font-size:7.6px;font-weight:normal;color:#000;white-space:nowrap;-webkit-text-stroke:0.12px #000"><span style="display:inline-block;transform:scaleX(0.76);transform-origin:center;">FALSE</span></div></div>
<div style="left:14.8px;top:285.471px;width:26.599999999999998px;height:9.852999999999998px;overflow:hidden;"><div class="t" style="position:absolute;left:0;right:0;padding:0 1.1px 0 1.0px;text-align:center;top:1.0px;line-height:9.552999999999997px;font-size:7.6px;font-weight:normal;color:#000;white-space:nowrap;-webkit-text-stroke:0.12px #000"><span style="display:inline-block;transform:scaleX(0.76);transform-origin:center;">FALSE</span></div></div>
<div style="left:42.199999999999996px;top:285.471px;width:76.2px;height:9.852999999999998px;overflow:hidden;"><div class="t" style="position:absolute;left:0;right:0;padding:0 1.1px 0 1.0px;text-align:left;top:1.0px;line-height:9.552999999999997px;font-size:7.0px;font-weight:normal;color:#000;white-space:nowrap;-webkit-text-stroke:0.12px #000"><span style="display:inline-block;">new_testentity2</span></div></div>
<div style="left:119.2px;top:285.471px;width:52.099999999999994px;height:9.852999999999998px;overflow:hidden;"><div class="t" style="position:absolute;left:0;right:0;padding:0 1.1px 0 1.0px;text-align:left;top:1.0px;line-height:9.552999999999997px;font-size:7.0px;font-weight:normal;color:#000;white-space:nowrap;-webkit-text-stroke:0.12px #000"><span style="display:inline-block;">new_date</span></div></div>
<div style="left:172.1px;top:285.471px;width:64.10000000000001px;height:9.852999999999998px;overflow:hidden;"><div class="t" style="position:absolute;left:0;right:0;padding:0 1.1px 0 1.0px;text-align:left;top:1.0px;line-height:9.552999999999997px;font-size:7.0px;font-weight:normal;color:#000;white-space:nowrap;-webkit-text-stroke:0.12px #000"><span style="display:inline-block;">Date</span></div></div>
<div style="left:237.0px;top:285.471px;width:46.90000000000002px;height:9.852999999999998px;overflow:hidden;"><div class="t" style="position:absolute;left:0;right:0;padding:0 1.1px 0 1.0px;text-align:left;top:1.0px;line-height:9.552999999999997px;font-size:7.0px;font-weight:normal;color:#000;white-space:nowrap;-webkit-text-stroke:0.12px #000"><span style="display:inline-block;">Date</span></div></div>
<div style="left:284.7px;top:285.471px;width:72.2px;height:9.852999999999998px;overflow:hidden;"><div class="t" style="position:absolute;left:0;right:0;padding:0 1.1px 0 1.0px;text-align:left;top:1.0px;line-height:9.552999999999997px;font-size:7.0px;font-weight:normal;color:#000;white-space:nowrap;-webkit-text-stroke:0.12px #000"><span style="display:inline-block;">This ia a date</span></div></div>
<div style="left:357.7px;top:285.471px;width:73.29999999999997px;height:9.852999999999998px;overflow:hidden;"><div class="t" style="position:absolute;left:0;right:0;padding:0 1.1px 0 1.0px;text-align:center;top:1.0px;line-height:9.552999999999997px;font-size:7.6px;font-weight:normal;color:#000;white-space:nowrap;-webkit-text-stroke:0.12px #000"><span style="display:inline-block;transform:scaleX(0.76);transform-origin:center;">FALSE</span></div></div>
<div style="left:431.79999999999995px;top:285.471px;width:39.500000000000014px;height:9.852999999999998px;overflow:hidden;"><div class="t" style="position:absolute;left:0;right:0;padding:0 1.1px 0 1.0px;text-align:center;top:1.0px;line-height:9.552999999999997px;font-size:7.6px;font-weight:normal;color:#000;white-space:nowrap;-webkit-text-stroke:0.12px #000"><span style="display:inline-block;transform:scaleX(0.76);transform-origin:center;">FALSE</span></div></div>
<div style="left:472.09999999999997px;top:285.471px;width:23.800000000000022px;height:9.852999999999998px;overflow:hidden;"><div class="t" style="position:absolute;left:0;right:0;padding:0 1.1px 0 1.0px;text-align:center;top:1.0px;line-height:9.552999999999997px;font-size:7.6px;font-weight:normal;color:#000;white-space:nowrap;-webkit-text-stroke:0.12px #000"><span style="display:inline-block;transform:scaleX(0.76);transform-origin:center;">FALSE</span></div></div>
<div style="left:496.7px;top:285.471px;width:36.79999999999997px;height:9.852999999999998px;overflow:hidden;"><div class="t" style="position:absolute;left:0;right:0;padding:0 1.1px 0 1.0px;text-align:center;top:1.0px;line-height:9.552999999999997px;font-size:7.6px;font-weight:normal;color:#000;white-space:nowrap;-webkit-text-stroke:0.12px #000"><span style="display:inline-block;transform:scaleX(0.76);transform-origin:center;">FALSE</span></div></div>
<div style="left:658.0px;top:285.471px;width:46.7px;height:9.852999999999998px;overflow:hidden;"><div class="t" style="position:absolute;left:0;right:0;padding:0 1.1px 0 1.0px;text-align:center;top:1.0px;line-height:9.552999999999997px;font-size:7.6px;font-weight:normal;color:#000;white-space:nowrap;-webkit-text-stroke:0.12px #000"><span style="display:inline-block;transform:scaleX(0.76);transform-origin:center;">FALSE</span></div></div>
<div style="left:14.8px;top:295.024px;width:26.599999999999998px;height:9.852999999999998px;overflow:hidden;"><div class="t" style="position:absolute;left:0;right:0;padding:0 1.1px 0 1.0px;text-align:center;top:1.0px;line-height:9.552999999999997px;font-size:7.6px;font-weight:normal;color:#000;white-space:nowrap;-webkit-text-stroke:0.12px #000"><span style="display:inline-block;transform:scaleX(0.76);transform-origin:center;">FALSE</span></div></div>
<div style="left:42.199999999999996px;top:295.024px;width:76.2px;height:9.852999999999998px;overflow:hidden;"><div class="t" style="position:absolute;left:0;right:0;padding:0 1.1px 0 1.0px;text-align:left;top:1.0px;line-height:9.552999999999997px;font-size:7.0px;font-weight:normal;color:#000;white-space:nowrap;-webkit-text-stroke:0.12px #000"><span style="display:inline-block;">new_testentity2</span></div></div>
<div style="left:119.2px;top:295.024px;width:52.099999999999994px;height:9.852999999999998px;overflow:hidden;"><div class="t" style="position:absolute;left:0;right:0;padding:0 1.1px 0 1.0px;text-align:left;top:1.0px;line-height:9.552999999999997px;font-size:7.0px;font-weight:normal;color:#000;white-space:nowrap;-webkit-text-stroke:0.12px #000"><span style="display:inline-block;">new_lookup</span></div></div>
<div style="left:172.1px;top:295.024px;width:64.10000000000001px;height:9.852999999999998px;overflow:hidden;"><div class="t" style="position:absolute;left:0;right:0;padding:0 1.1px 0 1.0px;text-align:left;top:1.0px;line-height:9.552999999999997px;font-size:7.0px;font-weight:normal;color:#000;white-space:nowrap;-webkit-text-stroke:0.12px #000"><span style="display:inline-block;">Lookup</span></div></div>
<div style="left:237.0px;top:295.024px;width:46.90000000000002px;height:9.852999999999998px;overflow:hidden;"><div class="t" style="position:absolute;left:0;right:0;padding:0 1.1px 0 1.0px;text-align:left;top:1.0px;line-height:9.552999999999997px;font-size:7.0px;font-weight:normal;color:#000;white-space:nowrap;-webkit-text-stroke:0.12px #000"><span style="display:inline-block;">Lookup</span></div></div>
<div style="left:284.7px;top:295.024px;width:72.2px;height:9.852999999999998px;overflow:hidden;"><div class="t" style="position:absolute;left:0;right:0;padding:0 1.1px 0 1.0px;text-align:left;top:1.0px;line-height:9.552999999999997px;font-size:7.0px;font-weight:normal;color:#000;white-space:nowrap;-webkit-text-stroke:0.12px #000"><span style="display:inline-block;">This is a lookup</span></div></div>
<div style="left:357.7px;top:295.024px;width:73.29999999999997px;height:9.852999999999998px;overflow:hidden;"><div class="t" style="position:absolute;left:0;right:0;padding:0 1.1px 0 1.0px;text-align:center;top:1.0px;line-height:9.552999999999997px;font-size:7.6px;font-weight:normal;color:#000;white-space:nowrap;-webkit-text-stroke:0.12px #000"><span style="display:inline-block;transform:scaleX(0.76);transform-origin:center;">FALSE</span></div></div>
<div style="left:431.79999999999995px;top:295.024px;width:39.500000000000014px;height:9.852999999999998px;overflow:hidden;"><div class="t" style="position:absolute;left:0;right:0;padding:0 1.1px 0 1.0px;text-align:center;top:1.0px;line-height:9.552999999999997px;font-size:7.6px;font-weight:normal;color:#000;white-space:nowrap;-webkit-text-stroke:0.12px #000"><span style="display:inline-block;transform:scaleX(0.76);transform-origin:center;">FALSE</span></div></div>
<div style="left:472.09999999999997px;top:295.024px;width:23.800000000000022px;height:9.852999999999998px;overflow:hidden;"><div class="t" style="position:absolute;left:0;right:0;padding:0 1.1px 0 1.0px;text-align:center;top:1.0px;line-height:9.552999999999997px;font-size:7.6px;font-weight:normal;color:#000;white-space:nowrap;-webkit-text-stroke:0.12px #000"><span style="display:inline-block;transform:scaleX(0.76);transform-origin:center;">FALSE</span></div></div>
<div style="left:496.7px;top:295.024px;width:36.79999999999997px;height:9.852999999999998px;overflow:hidden;"><div class="t" style="position:absolute;left:0;right:0;padding:0 1.1px 0 1.0px;text-align:center;top:1.0px;line-height:9.552999999999997px;font-size:7.6px;font-weight:normal;color:#000;white-space:nowrap;-webkit-text-stroke:0.12px #000"><span style="display:inline-block;transform:scaleX(0.76);transform-origin:center;">FALSE</span></div></div>
<div style="left:609.5px;top:295.024px;width:47.7px;height:9.852999999999998px;overflow:hidden;"><div class="t" style="position:absolute;left:0;right:0;padding:0 1.1px 0 1.0px;text-align:left;top:1.0px;line-height:9.552999999999997px;font-size:7.0px;font-weight:normal;color:#000;white-space:nowrap;-webkit-text-stroke:0.12px #000"><span style="display:inline-block;">new_testentity2</span></div></div>
<div style="left:658.0px;top:295.024px;width:46.7px;height:9.852999999999998px;overflow:hidden;"><div class="t" style="position:absolute;left:0;right:0;padding:0 1.1px 0 1.0px;text-align:center;top:1.0px;line-height:9.552999999999997px;font-size:7.6px;font-weight:normal;color:#000;white-space:nowrap;-webkit-text-stroke:0.12px #000"><span style="display:inline-block;transform:scaleX(0.76);transform-origin:center;">FALSE</span></div></div>
<div style="left:14.8px;top:304.577px;width:26.599999999999998px;height:9.852999999999998px;overflow:hidden;"><div class="t" style="position:absolute;left:0;right:0;padding:0 1.1px 0 1.0px;text-align:center;top:1.0px;line-height:9.552999999999997px;font-size:7.6px;font-weight:normal;color:#000;white-space:nowrap;-webkit-text-stroke:0.12px #000"><span style="display:inline-block;transform:scaleX(0.76);transform-origin:center;">FALSE</span></div></div>
<div style="left:42.199999999999996px;top:304.577px;width:76.2px;height:9.852999999999998px;overflow:hidden;"><div class="t" style="position:absolute;left:0;right:0;padding:0 1.1px 0 1.0px;text-align:left;top:1.0px;line-height:9.552999999999997px;font-size:7.0px;font-weight:normal;color:#000;white-space:nowrap;-webkit-text-stroke:0.12px #000"><span style="display:inline-block;">new_testentity2</span></div></div>
<div style="left:119.2px;top:304.577px;width:52.099999999999994px;height:9.852999999999998px;overflow:hidden;"><div class="t" style="position:absolute;left:0;right:0;padding:0 1.1px 0 1.0px;text-align:left;top:1.0px;line-height:9.552999999999997px;font-size:7.0px;font-weight:normal;color:#000;white-space:nowrap;-webkit-text-stroke:0.12px #000"><span style="display:inline-block;">new_decimal</span></div></div>
<div style="left:172.1px;top:304.577px;width:64.10000000000001px;height:9.852999999999998px;overflow:hidden;"><div class="t" style="position:absolute;left:0;right:0;padding:0 1.1px 0 1.0px;text-align:left;top:1.0px;line-height:9.552999999999997px;font-size:7.0px;font-weight:normal;color:#000;white-space:nowrap;-webkit-text-stroke:0.12px #000"><span style="display:inline-block;">Decimal</span></div></div>
<div style="left:237.0px;top:304.577px;width:46.90000000000002px;height:9.852999999999998px;overflow:hidden;"><div class="t" style="position:absolute;left:0;right:0;padding:0 1.1px 0 1.0px;text-align:left;top:1.0px;line-height:9.552999999999997px;font-size:7.0px;font-weight:normal;color:#000;white-space:nowrap;-webkit-text-stroke:0.12px #000"><span style="display:inline-block;">Decimal</span></div></div>
<div style="left:284.7px;top:304.577px;width:72.2px;height:9.852999999999998px;overflow:hidden;"><div class="t" style="position:absolute;left:0;right:0;padding:0 1.1px 0 1.0px;text-align:left;top:1.0px;line-height:9.552999999999997px;font-size:7.0px;font-weight:normal;color:#000;white-space:nowrap;-webkit-text-stroke:0.12px #000"><span style="display:inline-block;">This is a decimal</span></div></div>
<div style="left:357.7px;top:304.577px;width:73.29999999999997px;height:9.852999999999998px;overflow:hidden;"><div class="t" style="position:absolute;left:0;right:0;padding:0 1.1px 0 1.0px;text-align:center;top:1.0px;line-height:9.552999999999997px;font-size:7.6px;font-weight:normal;color:#000;white-space:nowrap;-webkit-text-stroke:0.12px #000"><span style="display:inline-block;transform:scaleX(0.76);transform-origin:center;">FALSE</span></div></div>
<div style="left:431.79999999999995px;top:304.577px;width:39.500000000000014px;height:9.852999999999998px;overflow:hidden;"><div class="t" style="position:absolute;left:0;right:0;padding:0 1.1px 0 1.0px;text-align:center;top:1.0px;line-height:9.552999999999997px;font-size:7.6px;font-weight:normal;color:#000;white-space:nowrap;-webkit-text-stroke:0.12px #000"><span style="display:inline-block;transform:scaleX(0.76);transform-origin:center;">FALSE</span></div></div>
<div style="left:472.09999999999997px;top:304.577px;width:23.800000000000022px;height:9.852999999999998px;overflow:hidden;"><div class="t" style="position:absolute;left:0;right:0;padding:0 1.1px 0 1.0px;text-align:center;top:1.0px;line-height:9.552999999999997px;font-size:7.6px;font-weight:normal;color:#000;white-space:nowrap;-webkit-text-stroke:0.12px #000"><span style="display:inline-block;transform:scaleX(0.76);transform-origin:center;">FALSE</span></div></div>
<div style="left:496.7px;top:304.577px;width:36.79999999999997px;height:9.852999999999998px;overflow:hidden;"><div class="t" style="position:absolute;left:0;right:0;padding:0 1.1px 0 1.0px;text-align:center;top:1.0px;line-height:9.552999999999997px;font-size:7.6px;font-weight:normal;color:#000;white-space:nowrap;-webkit-text-stroke:0.12px #000"><span style="display:inline-block;transform:scaleX(0.76);transform-origin:center;">FALSE</span></div></div>
<div style="left:534.3px;top:304.577px;width:37.00000000000007px;height:9.852999999999998px;overflow:hidden;"><div class="t" style="position:absolute;left:0;right:0;padding:0 1.1px 0 1.0px;text-align:right;top:1.0px;line-height:9.552999999999997px;font-size:7.0px;font-weight:normal;color:#000;white-space:nowrap;-webkit-text-stroke:0.12px #000"><span style="display:inline-block;">4</span></div></div>
<div style="left:658.0px;top:304.577px;width:46.7px;height:9.852999999999998px;overflow:hidden;"><div class="t" style="position:absolute;left:0;right:0;padding:0 1.1px 0 1.0px;text-align:center;top:1.0px;line-height:9.552999999999997px;font-size:7.6px;font-weight:normal;color:#000;white-space:nowrap;-webkit-text-stroke:0.12px #000"><span style="display:inline-block;transform:scaleX(0.76);transform-origin:center;">FALSE</span></div></div>
<div style="left:14.8px;top:314.13px;width:26.599999999999998px;height:9.852999999999998px;overflow:hidden;"><div class="t" style="position:absolute;left:0;right:0;padding:0 1.1px 0 1.0px;text-align:center;top:1.0px;line-height:9.552999999999997px;font-size:7.6px;font-weight:normal;color:#000;white-space:nowrap;-webkit-text-stroke:0.12px #000"><span style="display:inline-block;transform:scaleX(0.76);transform-origin:center;">FALSE</span></div></div>
<div style="left:42.199999999999996px;top:314.13px;width:76.2px;height:9.852999999999998px;overflow:hidden;"><div class="t" style="position:absolute;left:0;right:0;padding:0 1.1px 0 1.0px;text-align:left;top:1.0px;line-height:9.552999999999997px;font-size:7.0px;font-weight:normal;color:#000;white-space:nowrap;-webkit-text-stroke:0.12px #000"><span style="display:inline-block;">new_testentity2</span></div></div>
<div style="left:119.2px;top:314.13px;width:52.099999999999994px;height:9.852999999999998px;overflow:hidden;"><div class="t" style="position:absolute;left:0;right:0;padding:0 1.1px 0 1.0px;text-align:left;top:1.0px;line-height:9.552999999999997px;font-size:7.0px;font-weight:normal;color:#000;white-space:nowrap;-webkit-text-stroke:0.12px #000"><span style="display:inline-block;">new_money</span></div></div>
<div style="left:172.1px;top:314.13px;width:64.10000000000001px;height:9.852999999999998px;overflow:hidden;"><div class="t" style="position:absolute;left:0;right:0;padding:0 1.1px 0 1.0px;text-align:left;top:1.0px;line-height:9.552999999999997px;font-size:7.0px;font-weight:normal;color:#000;white-space:nowrap;-webkit-text-stroke:0.12px #000"><span style="display:inline-block;">Money</span></div></div>
<div style="left:237.0px;top:314.13px;width:46.90000000000002px;height:9.852999999999998px;overflow:hidden;"><div class="t" style="position:absolute;left:0;right:0;padding:0 1.1px 0 1.0px;text-align:left;top:1.0px;line-height:9.552999999999997px;font-size:7.0px;font-weight:normal;color:#000;white-space:nowrap;-webkit-text-stroke:0.12px #000"><span style="display:inline-block;">Money</span></div></div>
<div style="left:284.7px;top:314.13px;width:72.2px;height:9.852999999999998px;overflow:hidden;"><div class="t" style="position:absolute;left:0;right:0;padding:0 1.1px 0 1.0px;text-align:left;top:1.0px;line-height:9.552999999999997px;font-size:7.0px;font-weight:normal;color:#000;white-space:nowrap;-webkit-text-stroke:0.12px #000"><span style="display:inline-block;">This is currency</span></div></div>
<div style="left:357.7px;top:314.13px;width:73.29999999999997px;height:9.852999999999998px;overflow:hidden;"><div class="t" style="position:absolute;left:0;right:0;padding:0 1.1px 0 1.0px;text-align:center;top:1.0px;line-height:9.552999999999997px;font-size:7.6px;font-weight:normal;color:#000;white-space:nowrap;-webkit-text-stroke:0.12px #000"><span style="display:inline-block;transform:scaleX(0.76);transform-origin:center;">FALSE</span></div></div>
<div style="left:431.79999999999995px;top:314.13px;width:39.500000000000014px;height:9.852999999999998px;overflow:hidden;"><div class="t" style="position:absolute;left:0;right:0;padding:0 1.1px 0 1.0px;text-align:center;top:1.0px;line-height:9.552999999999997px;font-size:7.6px;font-weight:normal;color:#000;white-space:nowrap;-webkit-text-stroke:0.12px #000"><span style="display:inline-block;transform:scaleX(0.76);transform-origin:center;">FALSE</span></div></div>
<div style="left:472.09999999999997px;top:314.13px;width:23.800000000000022px;height:9.852999999999998px;overflow:hidden;"><div class="t" style="position:absolute;left:0;right:0;padding:0 1.1px 0 1.0px;text-align:center;top:1.0px;line-height:9.552999999999997px;font-size:7.6px;font-weight:normal;color:#000;white-space:nowrap;-webkit-text-stroke:0.12px #000"><span style="display:inline-block;transform:scaleX(0.76);transform-origin:center;">FALSE</span></div></div>
<div style="left:496.7px;top:314.13px;width:36.79999999999997px;height:9.852999999999998px;overflow:hidden;"><div class="t" style="position:absolute;left:0;right:0;padding:0 1.1px 0 1.0px;text-align:center;top:1.0px;line-height:9.552999999999997px;font-size:7.6px;font-weight:normal;color:#000;white-space:nowrap;-webkit-text-stroke:0.12px #000"><span style="display:inline-block;transform:scaleX(0.76);transform-origin:center;">FALSE</span></div></div>
<div style="left:658.0px;top:314.13px;width:46.7px;height:9.852999999999998px;overflow:hidden;"><div class="t" style="position:absolute;left:0;right:0;padding:0 1.1px 0 1.0px;text-align:center;top:1.0px;line-height:9.552999999999997px;font-size:7.6px;font-weight:normal;color:#000;white-space:nowrap;-webkit-text-stroke:0.12px #000"><span style="display:inline-block;transform:scaleX(0.76);transform-origin:center;">FALSE</span></div></div>
<div style="left:14.8px;top:323.683px;width:26.599999999999998px;height:9.852999999999998px;overflow:hidden;"><div class="t" style="position:absolute;left:0;right:0;padding:0 1.1px 0 1.0px;text-align:center;top:1.0px;line-height:9.552999999999997px;font-size:7.6px;font-weight:normal;color:#000;white-space:nowrap;-webkit-text-stroke:0.12px #000"><span style="display:inline-block;transform:scaleX(0.76);transform-origin:center;">FALSE</span></div></div>
<div style="left:42.199999999999996px;top:323.683px;width:76.2px;height:9.852999999999998px;overflow:hidden;"><div class="t" style="position:absolute;left:0;right:0;padding:0 1.1px 0 1.0px;text-align:left;top:1.0px;line-height:9.552999999999997px;font-size:7.0px;font-weight:normal;color:#000;white-space:nowrap;-webkit-text-stroke:0.12px #000"><span style="display:inline-block;">new_testentity2</span></div></div>
<div style="left:119.2px;top:323.683px;width:52.099999999999994px;height:9.852999999999998px;overflow:hidden;"><div class="t" style="position:absolute;left:0;right:0;padding:0 1.1px 0 1.0px;text-align:left;top:1.0px;line-height:9.552999999999997px;font-size:7.0px;font-weight:normal;color:#000;white-space:nowrap;-webkit-text-stroke:0.12px #000"><span style="display:inline-block;">new_url</span></div></div>
<div style="left:172.1px;top:323.683px;width:64.10000000000001px;height:9.852999999999998px;overflow:hidden;"><div class="t" style="position:absolute;left:0;right:0;padding:0 1.1px 0 1.0px;text-align:left;top:1.0px;line-height:9.552999999999997px;font-size:7.0px;font-weight:normal;color:#000;white-space:nowrap;-webkit-text-stroke:0.12px #000"><span style="display:inline-block;">URL</span></div></div>
<div style="left:237.0px;top:323.683px;width:46.90000000000002px;height:9.852999999999998px;overflow:hidden;"><div class="t" style="position:absolute;left:0;right:0;padding:0 1.1px 0 1.0px;text-align:left;top:1.0px;line-height:9.552999999999997px;font-size:7.0px;font-weight:normal;color:#000;white-space:nowrap;-webkit-text-stroke:0.12px #000"><span style="display:inline-block;">String</span></div></div>
<div style="left:284.7px;top:323.683px;width:72.2px;height:9.852999999999998px;overflow:hidden;"><div class="t" style="position:absolute;left:0;right:0;padding:0 1.1px 0 1.0px;text-align:left;top:1.0px;line-height:9.552999999999997px;font-size:7.0px;font-weight:normal;color:#000;white-space:nowrap;-webkit-text-stroke:0.12px #000"><span style="display:inline-block;">This is a url</span></div></div>
<div style="left:357.7px;top:323.683px;width:73.29999999999997px;height:9.852999999999998px;overflow:hidden;"><div class="t" style="position:absolute;left:0;right:0;padding:0 1.1px 0 1.0px;text-align:center;top:1.0px;line-height:9.552999999999997px;font-size:7.6px;font-weight:normal;color:#000;white-space:nowrap;-webkit-text-stroke:0.12px #000"><span style="display:inline-block;transform:scaleX(0.76);transform-origin:center;">FALSE</span></div></div>
<div style="left:431.79999999999995px;top:323.683px;width:39.500000000000014px;height:9.852999999999998px;overflow:hidden;"><div class="t" style="position:absolute;left:0;right:0;padding:0 1.1px 0 1.0px;text-align:center;top:1.0px;line-height:9.552999999999997px;font-size:7.6px;font-weight:normal;color:#000;white-space:nowrap;-webkit-text-stroke:0.12px #000"><span style="display:inline-block;transform:scaleX(0.76);transform-origin:center;">FALSE</span></div></div>
<div style="left:472.09999999999997px;top:323.683px;width:23.800000000000022px;height:9.852999999999998px;overflow:hidden;"><div class="t" style="position:absolute;left:0;right:0;padding:0 1.1px 0 1.0px;text-align:center;top:1.0px;line-height:9.552999999999997px;font-size:7.6px;font-weight:normal;color:#000;white-space:nowrap;-webkit-text-stroke:0.12px #000"><span style="display:inline-block;transform:scaleX(0.76);transform-origin:center;">FALSE</span></div></div>
<div style="left:496.7px;top:323.683px;width:36.79999999999997px;height:9.852999999999998px;overflow:hidden;"><div class="t" style="position:absolute;left:0;right:0;padding:0 1.1px 0 1.0px;text-align:center;top:1.0px;line-height:9.552999999999997px;font-size:7.6px;font-weight:normal;color:#000;white-space:nowrap;-webkit-text-stroke:0.12px #000"><span style="display:inline-block;transform:scaleX(0.76);transform-origin:center;">FALSE</span></div></div>
<div style="left:534.3px;top:323.683px;width:37.00000000000007px;height:9.852999999999998px;overflow:hidden;"><div class="t" style="position:absolute;left:0;right:0;padding:0 1.1px 0 1.0px;text-align:right;top:1.0px;line-height:9.552999999999997px;font-size:7.0px;font-weight:normal;color:#000;white-space:nowrap;-webkit-text-stroke:0.12px #000"><span style="display:inline-block;">1</span></div></div>
<div style="left:658.0px;top:323.683px;width:46.7px;height:9.852999999999998px;overflow:hidden;"><div class="t" style="position:absolute;left:0;right:0;padding:0 1.1px 0 1.0px;text-align:center;top:1.0px;line-height:9.552999999999997px;font-size:7.6px;font-weight:normal;color:#000;white-space:nowrap;-webkit-text-stroke:0.12px #000"><span style="display:inline-block;transform:scaleX(0.76);transform-origin:center;">FALSE</span></div></div>
<div style="left:14.8px;top:333.236px;width:26.599999999999998px;height:9.852999999999998px;overflow:hidden;"><div class="t" style="position:absolute;left:0;right:0;padding:0 1.1px 0 1.0px;text-align:center;top:1.0px;line-height:9.552999999999997px;font-size:7.6px;font-weight:normal;color:#000;white-space:nowrap;-webkit-text-stroke:0.12px #000"><span style="display:inline-block;transform:scaleX(0.76);transform-origin:center;">FALSE</span></div></div>
<div style="left:42.199999999999996px;top:333.236px;width:76.2px;height:9.852999999999998px;overflow:hidden;"><div class="t" style="position:absolute;left:0;right:0;padding:0 1.1px 0 1.0px;text-align:left;top:1.0px;line-height:9.552999999999997px;font-size:7.0px;font-weight:normal;color:#000;white-space:nowrap;-webkit-text-stroke:0.12px #000"><span style="display:inline-block;">new_testentity2</span></div></div>
<div style="left:119.2px;top:333.236px;width:52.099999999999994px;height:9.852999999999998px;overflow:hidden;"><div class="t" style="position:absolute;left:0;right:0;padding:0 1.1px 0 1.0px;text-align:left;top:1.0px;line-height:9.552999999999997px;font-size:7.0px;font-weight:normal;color:#000;white-space:nowrap;-webkit-text-stroke:0.12px #000"><span style="display:inline-block;">new_textarea</span></div></div>
<div style="left:172.1px;top:333.236px;width:64.10000000000001px;height:9.852999999999998px;overflow:hidden;"><div class="t" style="position:absolute;left:0;right:0;padding:0 1.1px 0 1.0px;text-align:left;top:1.0px;line-height:9.552999999999997px;font-size:7.0px;font-weight:normal;color:#000;white-space:nowrap;-webkit-text-stroke:0.12px #000"><span style="display:inline-block;">Text Area</span></div></div>
<div style="left:237.0px;top:333.236px;width:46.90000000000002px;height:9.852999999999998px;overflow:hidden;"><div class="t" style="position:absolute;left:0;right:0;padding:0 1.1px 0 1.0px;text-align:left;top:1.0px;line-height:9.552999999999997px;font-size:7.0px;font-weight:normal;color:#000;white-space:nowrap;-webkit-text-stroke:0.12px #000"><span style="display:inline-block;">String</span></div></div>
<div style="left:284.7px;top:333.236px;width:72.2px;height:9.852999999999998px;overflow:hidden;"><div class="t" style="position:absolute;left:0;right:0;padding:0 1.1px 0 1.0px;text-align:left;top:1.0px;line-height:9.552999999999997px;font-size:7.0px;font-weight:normal;color:#000;white-space:nowrap;-webkit-text-stroke:0.12px #000"><span style="display:inline-block;">This is a text area</span></div></div>
<div style="left:357.7px;top:333.236px;width:73.29999999999997px;height:9.852999999999998px;overflow:hidden;"><div class="t" style="position:absolute;left:0;right:0;padding:0 1.1px 0 1.0px;text-align:center;top:1.0px;line-height:9.552999999999997px;font-size:7.6px;font-weight:normal;color:#000;white-space:nowrap;-webkit-text-stroke:0.12px #000"><span style="display:inline-block;transform:scaleX(0.76);transform-origin:center;">FALSE</span></div></div>
<div style="left:431.79999999999995px;top:333.236px;width:39.500000000000014px;height:9.852999999999998px;overflow:hidden;"><div class="t" style="position:absolute;left:0;right:0;padding:0 1.1px 0 1.0px;text-align:center;top:1.0px;line-height:9.552999999999997px;font-size:7.6px;font-weight:normal;color:#000;white-space:nowrap;-webkit-text-stroke:0.12px #000"><span style="display:inline-block;transform:scaleX(0.76);transform-origin:center;">FALSE</span></div></div>
<div style="left:472.09999999999997px;top:333.236px;width:23.800000000000022px;height:9.852999999999998px;overflow:hidden;"><div class="t" style="position:absolute;left:0;right:0;padding:0 1.1px 0 1.0px;text-align:center;top:1.0px;line-height:9.552999999999997px;font-size:7.6px;font-weight:normal;color:#000;white-space:nowrap;-webkit-text-stroke:0.12px #000"><span style="display:inline-block;transform:scaleX(0.76);transform-origin:center;">FALSE</span></div></div>
<div style="left:496.7px;top:333.236px;width:36.79999999999997px;height:9.852999999999998px;overflow:hidden;"><div class="t" style="position:absolute;left:0;right:0;padding:0 1.1px 0 1.0px;text-align:center;top:1.0px;line-height:9.552999999999997px;font-size:7.6px;font-weight:normal;color:#000;white-space:nowrap;-webkit-text-stroke:0.12px #000"><span style="display:inline-block;transform:scaleX(0.76);transform-origin:center;">FALSE</span></div></div>
<div style="left:534.3px;top:333.236px;width:37.00000000000007px;height:9.852999999999998px;overflow:hidden;"><div class="t" style="position:absolute;left:0;right:0;padding:0 1.1px 0 1.0px;text-align:right;top:1.0px;line-height:9.552999999999997px;font-size:7.0px;font-weight:normal;color:#000;white-space:nowrap;-webkit-text-stroke:0.12px #000"><span style="display:inline-block;">2</span></div></div>
<div style="left:658.0px;top:333.236px;width:46.7px;height:9.852999999999998px;overflow:hidden;"><div class="t" style="position:absolute;left:0;right:0;padding:0 1.1px 0 1.0px;text-align:center;top:1.0px;line-height:9.552999999999997px;font-size:7.6px;font-weight:normal;color:#000;white-space:nowrap;-webkit-text-stroke:0.12px #000"><span style="display:inline-block;transform:scaleX(0.76);transform-origin:center;">FALSE</span></div></div>
<div style="left:710.6px;top:210px;width:10.699999999999932px;height:133.60000000000002px;background:#e2e2e2;"></div>
<div style="left:712.5px;top:210.3px;width:7.3px;height:7.8px;background:#fff;border:0.5px solid #c8c8c8;box-sizing:border-box"></div>
<svg style="position:absolute;left:714.1px;top:212.8px;" width="4" height="3" viewBox="0 0 4 3"><path d="M0 2.2l1.8-2 1.8 2z" fill="#777"/></svg>
<div style="left:712.5px;top:218.4px;width:7.3px;height:8px;background:#fff;border:0.5px solid #c8c8c8;box-sizing:border-box"></div>
<div style="left:712.5px;top:336.8px;width:7.3px;height:6.6px;background:#fff;border:0.5px solid #c8c8c8;box-sizing:border-box"></div>
<svg style="position:absolute;left:714.1px;top:339.3px;" width="4" height="3" viewBox="0 0 4 3"><path d="M0 0.2h3.6l-1.8 2z" fill="#777"/></svg>
<div style="left:1.8px;top:343.6px;width:719.5px;height:14.399999999999977px;background:#e6e6e6;"></div>
<div style="left:1.8px;top:343.6px;width:719.5px;height:0.6px;background:#c8c8c8;"></div>
<svg style="position:absolute;left:14.5px;top:348.8px;" width="3" height="4" viewBox="0 0 3 4"><path d="M2.5 0v4l-2-2z" fill="#c4c4c4"/></svg>
<svg style="position:absolute;left:28.5px;top:348.8px;" width="3" height="4" viewBox="0 0 3 4"><path d="M0.5 0v4l2-2z" fill="#c4c4c4"/></svg>
<div class="t" style="left:58.2px;top:345.5px;line-height:10px;font-size:6.6px;color:#666;font-weight:normal;">Record Types</div>
<div style="left:105.3px;top:343.1px;width:29.799999999999997px;height:14.899999999999977px;background:#fff;"></div>
<div style="left:105.3px;top:355.8px;width:29.799999999999997px;height:1.1px;background:#217346;"></div>
<div class="t" style="left:110.6px;top:345.5px;line-height:10px;font-size:6.3px;color:#217346;font-weight:bold;">Fields</div>
<div class="t" style="left:141.8px;top:345.5px;line-height:10px;font-size:6.6px;color:#666;font-weight:normal;">Option Sets</div>
<div class="t" style="left:190.1px;top:345.5px;line-height:10px;font-size:6.6px;color:#666;font-weight:normal;">Relationships</div>
<div style="left:51.6px;top:346.1px;width:0.6px;height:9.399999999999977px;background:#b8b8b8;"></div>
<div style="left:183.2px;top:346.1px;width:0.6px;height:9.399999999999977px;background:#b8b8b8;"></div>
<div style="left:236.2px;top:346.1px;width:0.6px;height:9.399999999999977px;background:#b8b8b8;"></div>
<svg style="position:absolute;left:251.60000000000002px;top:346.8px;" width="9" height="9" viewBox="0 0 9 9"><circle cx="4.5" cy="4.5" r="3.8" fill="none" stroke="#888" stroke-width="0.7"/><path d="M4.5 2.5v4M2.5 4.5h4" stroke="#888" stroke-width="0.7"/></svg>
<svg style="position:absolute;left:433px;top:347.3px;" width="2" height="7" viewBox="0 0 2 7"><circle cx="1" cy="1" r="0.45" fill="#999"/><circle cx="1" cy="3.5" r="0.45" fill="#999"/><circle cx="1" cy="6" r="0.45" fill="#999"/></svg>
<div style="left:442.3px;top:347.5px;width:268.3px;height:7.0px;background:#dcdcdc;"></div>
<div style="left:442.3px;top:347.5px;width:157.3px;height:7.0px;background:#fff;border:0.5px solid #c8c8c8;box-sizing:border-box"></div>
<div style="left:442.3px;top:347.5px;width:7.5px;height:7.0px;background:#fff;border:0.5px solid #c8c8c8;box-sizing:border-box"></div>
<svg style="position:absolute;left:444.5px;top:349.0px;" width="3" height="4" viewBox="0 0 3 4"><path d="M2.6 0v4l-2.2-2z" fill="#555"/></svg>
<div style="left:703.1px;top:347.5px;width:7.5px;height:7.0px;background:#fff;border:0.5px solid #c8c8c8;box-sizing:border-box"></div>
<svg style="position:absolute;left:705.7px;top:349.0px;" width="3" height="4" viewBox="0 0 3 4"><path d="M0.4 0v4l2.2-2z" fill="#555"/></svg>
<div style="left:1.8px;top:358px;width:719.5px;height:10.899999999999977px;background:#f1f1f1;"></div>
<div style="left:1.8px;top:358px;width:719.5px;height:0.6px;background:#d4d4d4;"></div>
<div class="t" style="left:5px;top:359.05px;line-height:10px;font-size:6.0px;color:#444;font-weight:normal;">Ready</div>
<svg style="position:absolute;left:31.2px;top:359.95px;" width="7" height="7" viewBox="0 0 7 7"><rect x="0.5" y="2" width="6" height="4.5" fill="none" stroke="#999" stroke-width="0.6"/><path d="M3.5 2v4.5M0.5 4h6" stroke="#999" stroke-width="0.5"/><circle cx="1.5" cy="1.2" r="1" fill="#999"/></svg>
<div style="left:570.2px;top:358.3px;width:19px;height:10.599999999999977px;background:#c8c8c8;"></div>
<svg style="position:absolute;left:576.0px;top:359.95px;" width="8" height="7" viewBox="0 0 8 7"><rect x="0.5" y="0.5" width="7" height="6" fill="none" stroke="#666" stroke-width="0.6"/><path d="M0.5 2.5h7M0.5 4.5h7M3 0.5v6M5 0.5v6" stroke="#666" stroke-width="0.5"/></svg>
<svg style="position:absolute;left:595.0px;top:359.95px;" width="8" height="7" viewBox="0 0 8 7"><rect x="0.5" y="0.5" width="7" height="6" fill="none" stroke="#777" stroke-width="0.6"/><path d="M2 0.5v6M6 0.5v6" stroke="#777" stroke-width="0.6"/></svg>
<svg style="position:absolute;left:614.1px;top:359.95px;" width="8" height="7" viewBox="0 0 8 7"><rect x="0.5" y="0.5" width="7" height="6" fill="none" stroke="#777" stroke-width="0.6"/><path d="M2.5 0.5v3h3v-3" fill="none" stroke="#777" stroke-width="0.6"/></svg>
<div style="left:629.7px;top:363.05px;width:3.2px;height:0.9px;background:#555;"></div>
<div style="left:634.7px;top:363.2px;width:50px;height:0.5px;background:#999;"></div>
<div style="left:658.5px;top:360.45px;width:2px;height:6px;background:#555;"></div>
<svg style="position:absolute;left:686.7px;top:360.95px;" width="5" height="5" viewBox="0 0 5 5"><path d="M2.5 0v5M0 2.5h5" stroke="#555" stroke-width="0.9"/></svg>
<div class="t" style="left:699.7px;top:358.75px;line-height:10px;font-size:5.6px;color:#666;font-weight:normal;">100%</div>
<div style="left:1px;top:201.6px;width:0.8px;height:167.9px;background:#9a9a9a;"></div>
<div style="left:721.3px;top:201.6px;width:0.8px;height:167.9px;background:#9a9a9a;"></div>
<div style="left:1px;top:368.9px;width:721.1px;height:0.7px;background:#9a9a9a;"></div>
<div style="left:3px;top:369.6px;width:721px;height:1.2px;background:#e6e6e6;"></div>
<div style="left:3.8px;top:370.8px;width:710.7px;height:8.5px;background:#e6e6e6;"></div>
<div style="left:3.8px;top:379.3px;width:13.0px;height:93.0px;background:#e6e6e6;"></div>
<div style="left:16.8px;top:379.3px;width:697.7px;height:93.0px;background:#fff;"></div>
<svg style="position:absolute;left:10.3px;top:372.8px;" width="6" height="6" viewBox="0 0 6 6"><path d="M5.5 0.5v5h-5z" fill="#b8b8b8"/></svg>
<div style="left:40.7px;top:370.8px;width:0.8px;height:8.5px;background:#cacaca;"></div>
<div style="left:40.6px;top:379.3px;width:0.8px;height:93.0px;background:#e3e3e3;"></div>
<div style="left:97.2px;top:370.8px;width:0.8px;height:8.5px;background:#cacaca;"></div>
<div style="left:97.10000000000001px;top:379.3px;width:0.8px;height:93.0px;background:#e3e3e3;"></div>
<div style="left:147.8px;top:370.8px;width:0.8px;height:8.5px;background:#cacaca;"></div>
<div style="left:147.70000000000002px;top:379.3px;width:0.8px;height:93.0px;background:#e3e3e3;"></div>
<div style="left:206.1px;top:370.8px;width:0.8px;height:8.5px;background:#cacaca;"></div>
<div style="left:206.0px;top:379.3px;width:0.8px;height:93.0px;background:#e3e3e3;"></div>
<div style="left:255.89999999999998px;top:370.8px;width:0.8px;height:8.5px;background:#cacaca;"></div>
<div style="left:255.79999999999998px;top:379.3px;width:0.8px;height:93.0px;background:#e3e3e3;"></div>
<div style="left:320.1px;top:370.8px;width:0.8px;height:8.5px;background:#cacaca;"></div>
<div style="left:320.0px;top:379.3px;width:0.8px;height:93.0px;background:#e3e3e3;"></div>
<div style="left:345.0px;top:370.8px;width:0.8px;height:8.5px;background:#cacaca;"></div>
<div style="left:344.9px;top:379.3px;width:0.8px;height:93.0px;background:#e3e3e3;"></div>
<div style="left:369.1px;top:370.8px;width:0.8px;height:8.5px;background:#cacaca;"></div>
<div style="left:369.0px;top:379.3px;width:0.8px;height:93.0px;background:#e3e3e3;"></div>
<div style="left:394.0px;top:370.8px;width:0.8px;height:8.5px;background:#cacaca;"></div>
<div style="left:393.9px;top:379.3px;width:0.8px;height:93.0px;background:#e3e3e3;"></div>
<div style="left:418.3px;top:370.8px;width:0.8px;height:8.5px;background:#cacaca;"></div>
<div style="left:418.2px;top:379.3px;width:0.8px;height:93.0px;background:#e3e3e3;"></div>
<div style="left:443.2px;top:370.8px;width:0.8px;height:8.5px;background:#cacaca;"></div>
<div style="left:443.09999999999997px;top:379.3px;width:0.8px;height:93.0px;background:#e3e3e3;"></div>
<div style="left:468.1px;top:370.8px;width:0.8px;height:8.5px;background:#cacaca;"></div>
<div style="left:468.0px;top:379.3px;width:0.8px;height:93.0px;background:#e3e3e3;"></div>
<div style="left:492.3px;top:370.8px;width:0.8px;height:8.5px;background:#cacaca;"></div>
<div style="left:492.2px;top:379.3px;width:0.8px;height:93.0px;background:#e3e3e3;"></div>
<div style="left:516.6px;top:370.8px;width:0.8px;height:8.5px;background:#cacaca;"></div>
<div style="left:516.5px;top:379.3px;width:0.8px;height:93.0px;background:#e3e3e3;"></div>
<div style="left:541.2px;top:370.8px;width:0.8px;height:8.5px;background:#cacaca;"></div>
<div style="left:541.1px;top:379.3px;width:0.8px;height:93.0px;background:#e3e3e3;"></div>
<div style="left:565.5px;top:370.8px;width:0.8px;height:8.5px;background:#cacaca;"></div>
<div style="left:565.4px;top:379.3px;width:0.8px;height:93.0px;background:#e3e3e3;"></div>
<div style="left:590.0px;top:370.8px;width:0.8px;height:8.5px;background:#cacaca;"></div>
<div style="left:589.9px;top:379.3px;width:0.8px;height:93.0px;background:#e3e3e3;"></div>
<div style="left:614.3px;top:370.8px;width:0.8px;height:8.5px;background:#cacaca;"></div>
<div style="left:614.1999999999999px;top:379.3px;width:0.8px;height:93.0px;background:#e3e3e3;"></div>
<div style="left:638.9px;top:370.8px;width:0.8px;height:8.5px;background:#cacaca;"></div>
<div style="left:638.8px;top:379.3px;width:0.8px;height:93.0px;background:#e3e3e3;"></div>
<div style="left:663.9px;top:370.8px;width:0.8px;height:8.5px;background:#cacaca;"></div>
<div style="left:663.8px;top:379.3px;width:0.8px;height:93.0px;background:#e3e3e3;"></div>
<div style="left:688.5px;top:370.8px;width:0.8px;height:8.5px;background:#cacaca;"></div>
<div style="left:688.4px;top:379.3px;width:0.8px;height:93.0px;background:#e3e3e3;"></div>
<div style="left:712.9px;top:370.8px;width:0.8px;height:8.5px;background:#cacaca;"></div>
<div style="left:712.8px;top:379.3px;width:0.8px;height:93.0px;background:#e3e3e3;"></div>
<div style="left:16.8px;top:389.09999999999997px;width:697.7px;height:0.7px;background:#e3e3e3;"></div>
<div style="left:3.8px;top:389.09999999999997px;width:13.0px;height:0.7px;background:#c8c8c8;"></div>
<div style="left:16.8px;top:398.59999999999997px;width:697.7px;height:0.7px;background:#e3e3e3;"></div>
<div style="left:3.8px;top:398.59999999999997px;width:13.0px;height:0.7px;background:#c8c8c8;"></div>
<div style="left:16.8px;top:408.09999999999997px;width:697.7px;height:0.7px;background:#e3e3e3;"></div>
<div style="left:3.8px;top:408.09999999999997px;width:13.0px;height:0.7px;background:#c8c8c8;"></div>
<div style="left:16.8px;top:417.59999999999997px;width:697.7px;height:0.7px;background:#e3e3e3;"></div>
<div style="left:3.8px;top:417.59999999999997px;width:13.0px;height:0.7px;background:#c8c8c8;"></div>
<div style="left:16.8px;top:427.09999999999997px;width:697.7px;height:0.7px;background:#e3e3e3;"></div>
<div style="left:3.8px;top:427.09999999999997px;width:13.0px;height:0.7px;background:#c8c8c8;"></div>
<div style="left:16.8px;top:436.59999999999997px;width:697.7px;height:0.7px;background:#e3e3e3;"></div>
<div style="left:3.8px;top:436.59999999999997px;width:13.0px;height:0.7px;background:#c8c8c8;"></div>
<div style="left:16.8px;top:446.09999999999997px;width:697.7px;height:0.7px;background:#e3e3e3;"></div>
<div style="left:3.8px;top:446.09999999999997px;width:13.0px;height:0.7px;background:#c8c8c8;"></div>
<div style="left:16.8px;top:455.59999999999997px;width:697.7px;height:0.7px;background:#e3e3e3;"></div>
<div style="left:3.8px;top:455.59999999999997px;width:13.0px;height:0.7px;background:#c8c8c8;"></div>
<div style="left:16.8px;top:465.09999999999997px;width:697.7px;height:0.7px;background:#e3e3e3;"></div>
<div style="left:3.8px;top:465.09999999999997px;width:13.0px;height:0.7px;background:#c8c8c8;"></div>
<div style="left:3.8px;top:379.1px;width:710.7px;height:0.9px;background:#b8b8b8;"></div>
<div style="left:713.9px;top:379.3px;width:0.8px;height:93.0px;background:#c8c8c8;"></div>
<div style="left:16.3px;top:370.8px;width:0.8px;height:101.5px;background:#b4b4b4;"></div>
<div style="left:16.8px;top:370.8px;width:24.400000000000002px;height:8.5px;overflow:hidden;"><div class="t" style="position:absolute;left:0;width:24.400000000000002px;text-align:center;top:0.7px;line-height:8.5px;font-size:6.8px;color:#333;-webkit-text-stroke:0.1px #333">A</div></div>
<div style="left:41.2px;top:370.8px;width:56.5px;height:8.5px;overflow:hidden;"><div class="t" style="position:absolute;left:0;width:56.5px;text-align:center;top:0.7px;line-height:8.5px;font-size:6.8px;color:#333;-webkit-text-stroke:0.1px #333">B</div></div>
<div style="left:97.7px;top:370.8px;width:50.60000000000001px;height:8.5px;overflow:hidden;"><div class="t" style="position:absolute;left:0;width:50.60000000000001px;text-align:center;top:0.7px;line-height:8.5px;font-size:6.8px;color:#333;-webkit-text-stroke:0.1px #333">C</div></div>
<div style="left:148.3px;top:370.8px;width:58.29999999999998px;height:8.5px;overflow:hidden;"><div class="t" style="position:absolute;left:0;width:58.29999999999998px;text-align:center;top:0.7px;line-height:8.5px;font-size:6.8px;color:#333;-webkit-text-stroke:0.1px #333">D</div></div>
<div style="left:206.6px;top:370.8px;width:49.79999999999998px;height:8.5px;overflow:hidden;"><div class="t" style="position:absolute;left:0;width:49.79999999999998px;text-align:center;top:0.7px;line-height:8.5px;font-size:6.8px;color:#333;-webkit-text-stroke:0.1px #333">E</div></div>
<div style="left:256.4px;top:370.8px;width:64.20000000000005px;height:8.5px;overflow:hidden;"><div class="t" style="position:absolute;left:0;width:64.20000000000005px;text-align:center;top:0.7px;line-height:8.5px;font-size:6.8px;color:#333;-webkit-text-stroke:0.1px #333">F</div></div>
<div style="left:320.6px;top:370.8px;width:24.899999999999977px;height:8.5px;overflow:hidden;"><div class="t" style="position:absolute;left:0;width:24.899999999999977px;text-align:center;top:0.7px;line-height:8.5px;font-size:6.8px;color:#333;-webkit-text-stroke:0.1px #333">G</div></div>
<div style="left:345.5px;top:370.8px;width:24.100000000000023px;height:8.5px;overflow:hidden;"><div class="t" style="position:absolute;left:0;width:24.100000000000023px;text-align:center;top:0.7px;line-height:8.5px;font-size:6.8px;color:#333;-webkit-text-stroke:0.1px #333">H</div></div>
<div style="left:369.6px;top:370.8px;width:24.899999999999977px;height:8.5px;overflow:hidden;"><div class="t" style="position:absolute;left:0;width:24.899999999999977px;text-align:center;top:0.7px;line-height:8.5px;font-size:6.8px;color:#333;-webkit-text-stroke:0.1px #333">I</div></div>
<div style="left:394.5px;top:370.8px;width:24.30000000000001px;height:8.5px;overflow:hidden;"><div class="t" style="position:absolute;left:0;width:24.30000000000001px;text-align:center;top:0.7px;line-height:8.5px;font-size:6.8px;color:#333;-webkit-text-stroke:0.1px #333">J</div></div>
<div style="left:418.8px;top:370.8px;width:24.899999999999977px;height:8.5px;overflow:hidden;"><div class="t" style="position:absolute;left:0;width:24.899999999999977px;text-align:center;top:0.7px;line-height:8.5px;font-size:6.8px;color:#333;-webkit-text-stroke:0.1px #333">K</div></div>
<div style="left:443.7px;top:370.8px;width:24.900000000000034px;height:8.5px;overflow:hidden;"><div class="t" style="position:absolute;left:0;width:24.900000000000034px;text-align:center;top:0.7px;line-height:8.5px;font-size:6.8px;color:#333;-webkit-text-stroke:0.1px #333">L</div></div>
<div style="left:468.6px;top:370.8px;width:24.19999999999999px;height:8.5px;overflow:hidden;"><div class="t" style="position:absolute;left:0;width:24.19999999999999px;text-align:center;top:0.7px;line-height:8.5px;font-size:6.8px;color:#333;-webkit-text-stroke:0.1px #333">M</div></div>
<div style="left:492.8px;top:370.8px;width:24.30000000000001px;height:8.5px;overflow:hidden;"><div class="t" style="position:absolute;left:0;width:24.30000000000001px;text-align:center;top:0.7px;line-height:8.5px;font-size:6.8px;color:#333;-webkit-text-stroke:0.1px #333">N</div></div>
<div style="left:517.1px;top:370.8px;width:24.600000000000023px;height:8.5px;overflow:hidden;"><div class="t" style="position:absolute;left:0;width:24.600000000000023px;text-align:center;top:0.7px;line-height:8.5px;font-size:6.8px;color:#333;-webkit-text-stroke:0.1px #333">O</div></div>
<div style="left:541.7px;top:370.8px;width:24.299999999999955px;height:8.5px;overflow:hidden;"><div class="t" style="position:absolute;left:0;width:24.299999999999955px;text-align:center;top:0.7px;line-height:8.5px;font-size:6.8px;color:#333;-webkit-text-stroke:0.1px #333">P</div></div>
<div style="left:566px;top:370.8px;width:24.5px;height:8.5px;overflow:hidden;"><div class="t" style="position:absolute;left:0;width:24.5px;text-align:center;top:0.7px;line-height:8.5px;font-size:6.8px;color:#333;-webkit-text-stroke:0.1px #333">Q</div></div>
<div style="left:590.5px;top:370.8px;width:24.299999999999955px;height:8.5px;overflow:hidden;"><div class="t" style="position:absolute;left:0;width:24.299999999999955px;text-align:center;top:0.7px;line-height:8.5px;font-size:6.8px;color:#333;-webkit-text-stroke:0.1px #333">R</div></div>
<div style="left:614.8px;top:370.8px;width:24.600000000000023px;height:8.5px;overflow:hidden;"><div class="t" style="position:absolute;left:0;width:24.600000000000023px;text-align:center;top:0.7px;line-height:8.5px;font-size:6.8px;color:#333;-webkit-text-stroke:0.1px #333">S</div></div>
<div style="left:639.4px;top:370.8px;width:25.0px;height:8.5px;overflow:hidden;"><div class="t" style="position:absolute;left:0;width:25.0px;text-align:center;top:0.7px;line-height:8.5px;font-size:6.8px;color:#333;-webkit-text-stroke:0.1px #333">T</div></div>
<div style="left:664.4px;top:370.8px;width:24.600000000000023px;height:8.5px;overflow:hidden;"><div class="t" style="position:absolute;left:0;width:24.600000000000023px;text-align:center;top:0.7px;line-height:8.5px;font-size:6.8px;color:#333;-webkit-text-stroke:0.1px #333">U</div></div>
<div style="left:689px;top:370.8px;width:24.399999999999977px;height:8.5px;overflow:hidden;"><div class="t" style="position:absolute;left:0;width:24.399999999999977px;text-align:center;top:0.7px;line-height:8.5px;font-size:6.8px;color:#333;-webkit-text-stroke:0.1px #333">V</div></div>
<div style="left:713.4px;top:370.8px;width:1.1000000000000227px;height:8.5px;overflow:hidden;"><div class="t" style="position:absolute;left:0;width:26.600000000000023px;text-align:center;top:0.7px;line-height:8.5px;font-size:6.8px;color:#333;-webkit-text-stroke:0.1px #333">W</div></div>
<div style="left:3.8px;top:379.3px;width:13.0px;height:10.099999999999966px;overflow:hidden;"><div class="t" style="position:absolute;left:0;width:13.0px;text-align:center;top:0.8px;line-height:10.099999999999966px;font-size:6.7px;color:#333;-webkit-text-stroke:0.1px #333">1</div></div>
<div style="left:3.8px;top:389.4px;width:13.0px;height:9.5px;overflow:hidden;"><div class="t" style="position:absolute;left:0;width:13.0px;text-align:center;top:0.8px;line-height:9.5px;font-size:6.7px;color:#333;-webkit-text-stroke:0.1px #333">2</div></div>
<div style="left:3.8px;top:398.9px;width:13.0px;height:9.5px;overflow:hidden;"><div class="t" style="position:absolute;left:0;width:13.0px;text-align:center;top:0.8px;line-height:9.5px;font-size:6.7px;color:#333;-webkit-text-stroke:0.1px #333">3</div></div>
<div style="left:3.8px;top:408.4px;width:13.0px;height:9.5px;overflow:hidden;"><div class="t" style="position:absolute;left:0;width:13.0px;text-align:center;top:0.8px;line-height:9.5px;font-size:6.7px;color:#333;-webkit-text-stroke:0.1px #333">4</div></div>
<div style="left:3.8px;top:417.9px;width:13.0px;height:9.5px;overflow:hidden;"><div class="t" style="position:absolute;left:0;width:13.0px;text-align:center;top:0.8px;line-height:9.5px;font-size:6.7px;color:#333;-webkit-text-stroke:0.1px #333">5</div></div>
<div style="left:3.8px;top:427.4px;width:13.0px;height:9.5px;overflow:hidden;"><div class="t" style="position:absolute;left:0;width:13.0px;text-align:center;top:0.8px;line-height:9.5px;font-size:6.7px;color:#333;-webkit-text-stroke:0.1px #333">6</div></div>
<div style="left:3.8px;top:436.9px;width:13.0px;height:9.5px;overflow:hidden;"><div class="t" style="position:absolute;left:0;width:13.0px;text-align:center;top:0.8px;line-height:9.5px;font-size:6.7px;color:#333;-webkit-text-stroke:0.1px #333">7</div></div>
<div style="left:3.8px;top:446.4px;width:13.0px;height:9.5px;overflow:hidden;"><div class="t" style="position:absolute;left:0;width:13.0px;text-align:center;top:0.8px;line-height:9.5px;font-size:6.7px;color:#333;-webkit-text-stroke:0.1px #333">8</div></div>
<div style="left:3.8px;top:455.9px;width:13.0px;height:9.5px;overflow:hidden;"><div class="t" style="position:absolute;left:0;width:13.0px;text-align:center;top:0.8px;line-height:9.5px;font-size:6.7px;color:#333;-webkit-text-stroke:0.1px #333">9</div></div>
<div style="left:3.8px;top:465.4px;width:13.0px;height:6.900000000000034px;overflow:hidden;"><div class="t" style="position:absolute;left:0;width:13.0px;text-align:center;top:0.8px;line-height:9.5px;font-size:6.7px;color:#333;-webkit-text-stroke:0.1px #333">10</div></div>
<div style="left:17.2px;top:379.3px;width:23.6px;height:10.399999999999967px;overflow:hidden;"><div class="t" style="position:absolute;left:0;right:0;padding:0 1.1px 0 1.0px;text-align:left;top:0.6px;line-height:10.099999999999966px;font-size:6.4px;font-weight:bold;color:#000;white-space:nowrap;-webkit-text-stroke:0.12px #000"><span style="display:inline-block;">Ignore</span></div></div>
<div style="left:41.6px;top:379.3px;width:55.7px;height:10.399999999999967px;overflow:hidden;"><div class="t" style="position:absolute;left:0;right:0;padding:0 1.1px 0 1.0px;text-align:left;top:0.6px;line-height:10.099999999999966px;font-size:6.4px;font-weight:bold;color:#000;white-space:nowrap;-webkit-text-stroke:0.12px #000"><span style="display:inline-block;">Schema Name</span></div></div>
<div style="left:98.10000000000001px;top:379.3px;width:49.80000000000001px;height:10.399999999999967px;overflow:hidden;"><div class="t" style="position:absolute;left:0;right:0;padding:0 1.1px 0 1.0px;text-align:left;top:0.6px;line-height:10.099999999999966px;font-size:6.4px;font-weight:bold;color:#000;white-space:nowrap;-webkit-text-stroke:0.12px #000"><span style="display:inline-block;">Option Set Name</span></div></div>
<div style="left:148.70000000000002px;top:379.3px;width:57.499999999999986px;height:10.399999999999967px;overflow:hidden;"><div class="t" style="position:absolute;left:0;right:0;padding:0 1.1px 0 1.0px;text-align:left;top:0.6px;line-height:10.099999999999966px;font-size:6.4px;font-weight:bold;color:#000;white-space:nowrap;-webkit-text-stroke:0.12px #000"><span style="display:inline-block;">Is Shared Option Set</span></div></div>
<div style="left:207.0px;top:379.3px;width:48.999999999999986px;height:10.399999999999967px;overflow:hidden;"><div class="t" style="position:absolute;left:0;right:0;padding:0 1.1px 0 1.0px;text-align:left;top:0.6px;line-height:10.099999999999966px;font-size:6.4px;font-weight:bold;color:#000;white-space:nowrap;-webkit-text-stroke:0.12px #000"><span style="display:inline-block;">Index</span></div></div>
<div style="left:256.79999999999995px;top:379.3px;width:63.40000000000005px;height:10.399999999999967px;overflow:hidden;"><div class="t" style="position:absolute;left:0;right:0;padding:0 1.1px 0 1.0px;text-align:left;top:0.6px;line-height:10.099999999999966px;font-size:6.4px;font-weight:bold;color:#000;white-space:nowrap;-webkit-text-stroke:0.12px #000"><span style="display:inline-block;">Label</span></div></div>
<div style="left:17.2px;top:389.4px;width:23.6px;height:9.8px;overflow:hidden;"><div class="t" style="position:absolute;left:0;right:0;padding:0 1.1px 0 1.0px;text-align:center;top:1.0px;line-height:9.5px;font-size:7.6px;font-weight:normal;color:#000;white-space:nowrap;-webkit-text-stroke:0.12px #000"><span style="display:inline-block;transform:scaleX(0.76);transform-origin:center;">FALSE</span></div></div>
<div style="left:98.10000000000001px;top:389.4px;width:49.80000000000001px;height:9.8px;overflow:hidden;"><div class="t" style="position:absolute;left:0;right:0;padding:0 1.1px 0 1.0px;text-align:left;top:1.0px;line-height:9.5px;font-size:7.0px;font-weight:normal;color:#000;white-space:nowrap;-webkit-text-stroke:0.12px #000"><span style="display:inline-block;">Picklist</span></div></div>
<div style="left:148.70000000000002px;top:389.4px;width:57.499999999999986px;height:9.8px;overflow:hidden;"><div class="t" style="position:absolute;left:0;right:0;padding:0 1.1px 0 1.0px;text-align:center;top:1.0px;line-height:9.5px;font-size:7.6px;font-weight:normal;color:#000;white-space:nowrap;-webkit-text-stroke:0.12px #000"><span style="display:inline-block;transform:scaleX(0.76);transform-origin:center;">FALSE</span></div></div>
<div style="left:207.0px;top:389.4px;width:48.999999999999986px;height:9.8px;overflow:hidden;"><div class="t" style="position:absolute;left:0;right:0;padding:0 1.1px 0 1.0px;text-align:right;top:1.0px;line-height:9.5px;font-size:7.0px;font-weight:normal;color:#000;white-space:nowrap;-webkit-text-stroke:0.12px #000"><span style="display:inline-block;">1</span></div></div>
<div style="left:256.79999999999995px;top:389.4px;width:63.40000000000005px;height:9.8px;overflow:hidden;"><div class="t" style="position:absolute;left:0;right:0;padding:0 1.1px 0 1.0px;text-align:left;top:1.0px;line-height:9.5px;font-size:7.0px;font-weight:normal;color:#000;white-space:nowrap;-webkit-text-stroke:0.12px #000"><span style="display:inline-block;">Option 1</span></div></div>
<div style="left:17.2px;top:398.9px;width:23.6px;height:9.8px;overflow:hidden;"><div class="t" style="position:absolute;left:0;right:0;padding:0 1.1px 0 1.0px;text-align:center;top:1.0px;line-height:9.5px;font-size:7.6px;font-weight:normal;color:#000;white-space:nowrap;-webkit-text-stroke:0.12px #000"><span style="display:inline-block;transform:scaleX(0.76);transform-origin:center;">FALSE</span></div></div>
<div style="left:98.10000000000001px;top:398.9px;width:49.80000000000001px;height:9.8px;overflow:hidden;"><div class="t" style="position:absolute;left:0;right:0;padding:0 1.1px 0 1.0px;text-align:left;top:1.0px;line-height:9.5px;font-size:7.0px;font-weight:normal;color:#000;white-space:nowrap;-webkit-text-stroke:0.12px #000"><span style="display:inline-block;">Picklist</span></div></div>
<div style="left:148.70000000000002px;top:398.9px;width:57.499999999999986px;height:9.8px;overflow:hidden;"><div class="t" style="position:absolute;left:0;right:0;padding:0 1.1px 0 1.0px;text-align:center;top:1.0px;line-height:9.5px;font-size:7.6px;font-weight:normal;color:#000;white-space:nowrap;-webkit-text-stroke:0.12px #000"><span style="display:inline-block;transform:scaleX(0.76);transform-origin:center;">FALSE</span></div></div>
<div style="left:207.0px;top:398.9px;width:48.999999999999986px;height:9.8px;overflow:hidden;"><div class="t" style="position:absolute;left:0;right:0;padding:0 1.1px 0 1.0px;text-align:right;top:1.0px;line-height:9.5px;font-size:7.0px;font-weight:normal;color:#000;white-space:nowrap;-webkit-text-stroke:0.12px #000"><span style="display:inline-block;">2</span></div></div>
<div style="left:256.79999999999995px;top:398.9px;width:63.40000000000005px;height:9.8px;overflow:hidden;"><div class="t" style="position:absolute;left:0;right:0;padding:0 1.1px 0 1.0px;text-align:left;top:1.0px;line-height:9.5px;font-size:7.0px;font-weight:normal;color:#000;white-space:nowrap;-webkit-text-stroke:0.12px #000"><span style="display:inline-block;">Option 2</span></div></div>
<div style="left:17.2px;top:408.4px;width:23.6px;height:9.8px;overflow:hidden;"><div class="t" style="position:absolute;left:0;right:0;padding:0 1.1px 0 1.0px;text-align:center;top:1.0px;line-height:9.5px;font-size:7.6px;font-weight:normal;color:#000;white-space:nowrap;-webkit-text-stroke:0.12px #000"><span style="display:inline-block;transform:scaleX(0.76);transform-origin:center;">FALSE</span></div></div>
<div style="left:41.6px;top:408.4px;width:55.7px;height:9.8px;overflow:hidden;"><div class="t" style="position:absolute;left:0;right:0;padding:0 1.1px 0 1.0px;text-align:left;top:1.0px;line-height:9.5px;font-size:7.0px;font-weight:normal;color:#000;white-space:nowrap;-webkit-text-stroke:0.12px #000"><span style="display:inline-block;">new_sharedpicklist</span></div></div>
<div style="left:98.10000000000001px;top:408.4px;width:49.80000000000001px;height:9.8px;overflow:hidden;"><div class="t" style="position:absolute;left:0;right:0;padding:0 1.1px 0 1.0px;text-align:left;top:1.0px;line-height:9.5px;font-size:7.0px;font-weight:normal;color:#000;white-space:nowrap;-webkit-text-stroke:0.12px #000"><span style="display:inline-block;">Shared Picklist</span></div></div>
<div style="left:148.70000000000002px;top:408.4px;width:57.499999999999986px;height:9.8px;overflow:hidden;"><div class="t" style="position:absolute;left:0;right:0;padding:0 1.1px 0 1.0px;text-align:center;top:1.0px;line-height:9.5px;font-size:7.6px;font-weight:normal;color:#000;white-space:nowrap;-webkit-text-stroke:0.12px #000"><span style="display:inline-block;transform:scaleX(0.76);transform-origin:center;">TRUE</span></div></div>
<div style="left:207.0px;top:408.4px;width:48.999999999999986px;height:9.8px;overflow:hidden;"><div class="t" style="position:absolute;left:0;right:0;padding:0 1.1px 0 1.0px;text-align:right;top:1.0px;line-height:9.5px;font-size:7.0px;font-weight:normal;color:#000;white-space:nowrap;-webkit-text-stroke:0.12px #000"><span style="display:inline-block;">1</span></div></div>
<div style="left:256.79999999999995px;top:408.4px;width:63.40000000000005px;height:9.8px;overflow:hidden;"><div class="t" style="position:absolute;left:0;right:0;padding:0 1.1px 0 1.0px;text-align:left;top:1.0px;line-height:9.5px;font-size:7.0px;font-weight:normal;color:#000;white-space:nowrap;-webkit-text-stroke:0.12px #000"><span style="display:inline-block;">Shared Option 1</span></div></div>
<div style="left:17.2px;top:417.9px;width:23.6px;height:9.8px;overflow:hidden;"><div class="t" style="position:absolute;left:0;right:0;padding:0 1.1px 0 1.0px;text-align:center;top:1.0px;line-height:9.5px;font-size:7.6px;font-weight:normal;color:#000;white-space:nowrap;-webkit-text-stroke:0.12px #000"><span style="display:inline-block;transform:scaleX(0.76);transform-origin:center;">FALSE</span></div></div>
<div style="left:41.6px;top:417.9px;width:55.7px;height:9.8px;overflow:hidden;"><div class="t" style="position:absolute;left:0;right:0;padding:0 1.1px 0 1.0px;text-align:left;top:1.0px;line-height:9.5px;font-size:7.0px;font-weight:normal;color:#000;white-space:nowrap;-webkit-text-stroke:0.12px #000"><span style="display:inline-block;">new_sharedpicklist</span></div></div>
<div style="left:98.10000000000001px;top:417.9px;width:49.80000000000001px;height:9.8px;overflow:hidden;"><div class="t" style="position:absolute;left:0;right:0;padding:0 1.1px 0 1.0px;text-align:left;top:1.0px;line-height:9.5px;font-size:7.0px;font-weight:normal;color:#000;white-space:nowrap;-webkit-text-stroke:0.12px #000"><span style="display:inline-block;">Shared Picklist</span></div></div>
<div style="left:148.70000000000002px;top:417.9px;width:57.499999999999986px;height:9.8px;overflow:hidden;"><div class="t" style="position:absolute;left:0;right:0;padding:0 1.1px 0 1.0px;text-align:center;top:1.0px;line-height:9.5px;font-size:7.6px;font-weight:normal;color:#000;white-space:nowrap;-webkit-text-stroke:0.12px #000"><span style="display:inline-block;transform:scaleX(0.76);transform-origin:center;">TRUE</span></div></div>
<div style="left:207.0px;top:417.9px;width:48.999999999999986px;height:9.8px;overflow:hidden;"><div class="t" style="position:absolute;left:0;right:0;padding:0 1.1px 0 1.0px;text-align:right;top:1.0px;line-height:9.5px;font-size:7.0px;font-weight:normal;color:#000;white-space:nowrap;-webkit-text-stroke:0.12px #000"><span style="display:inline-block;">2</span></div></div>
<div style="left:256.79999999999995px;top:417.9px;width:63.40000000000005px;height:9.8px;overflow:hidden;"><div class="t" style="position:absolute;left:0;right:0;padding:0 1.1px 0 1.0px;text-align:left;top:1.0px;line-height:9.5px;font-size:7.0px;font-weight:normal;color:#000;white-space:nowrap;-webkit-text-stroke:0.12px #000"><span style="display:inline-block;">Shared Option 2</span></div></div>
<div style="left:714.5px;top:370.8px;width:9.5px;height:101.5px;background:#e2e2e2;"></div>
<div style="left:716.4px;top:371.1px;width:7.3px;height:7.8px;background:#fff;border:0.5px solid #c8c8c8;box-sizing:border-box"></div>
<svg style="position:absolute;left:718.0px;top:373.6px;" width="4" height="3" viewBox="0 0 4 3"><path d="M0 2.2l1.8-2 1.8 2z" fill="#777"/></svg>
<div style="left:716.4px;top:379.2px;width:7.3px;height:8px;background:#fff;border:0.5px solid #c8c8c8;box-sizing:border-box"></div>
<div style="left:716.4px;top:465.5px;width:7.3px;height:6.6px;background:#fff;border:0.5px solid #c8c8c8;box-sizing:border-box"></div>
<svg style="position:absolute;left:718.0px;top:468.0px;" width="4" height="3" viewBox="0 0 4 3"><path d="M0 0.2h3.6l-1.8 2z" fill="#777"/></svg>
<div style="left:3.8px;top:472.3px;width:720.2px;height:13.899999999999977px;background:#e6e6e6;"></div>
<div style="left:3.8px;top:472.3px;width:720.2px;height:0.6px;background:#c8c8c8;"></div>
<svg style="position:absolute;left:17.5px;top:477.25px;" width="3" height="4" viewBox="0 0 3 4"><path d="M2.5 0v4l-2-2z" fill="#c4c4c4"/></svg>
<svg style="position:absolute;left:31.299999999999997px;top:477.25px;" width="3" height="4" viewBox="0 0 3 4"><path d="M0.5 0v4l2-2z" fill="#c4c4c4"/></svg>
<div class="t" style="left:60.6px;top:473.95px;line-height:10px;font-size:6.6px;color:#666;font-weight:normal;">Record Types</div>
<div class="t" style="left:113.6px;top:473.95px;line-height:10px;font-size:6.6px;color:#666;font-weight:normal;">Fields</div>
<div style="left:137.1px;top:471.8px;width:48.70000000000002px;height:14.399999999999977px;background:#fff;"></div>
<div style="left:137.1px;top:484.0px;width:48.70000000000002px;height:1.1px;background:#217346;"></div>
<div class="t" style="left:143.4px;top:473.95px;line-height:10px;font-size:6.3px;color:#217346;font-weight:bold;">Option Sets</div>
<div class="t" style="left:193.1px;top:473.95px;line-height:10px;font-size:6.6px;color:#666;font-weight:normal;">Relationships</div>
<div style="left:54.9px;top:474.8px;width:0.6px;height:8.899999999999977px;background:#b8b8b8;"></div>
<div style="left:107.3px;top:474.8px;width:0.6px;height:8.899999999999977px;background:#b8b8b8;"></div>
<div style="left:238.2px;top:474.8px;width:0.6px;height:8.899999999999977px;background:#b8b8b8;"></div>
<svg style="position:absolute;left:254.3px;top:475.25px;" width="9" height="9" viewBox="0 0 9 9"><circle cx="4.5" cy="4.5" r="3.8" fill="none" stroke="#888" stroke-width="0.7"/><path d="M4.5 2.5v4M2.5 4.5h4" stroke="#888" stroke-width="0.7"/></svg>
<svg style="position:absolute;left:435.5px;top:475.75px;" width="2" height="7" viewBox="0 0 2 7"><circle cx="1" cy="1" r="0.45" fill="#999"/><circle cx="1" cy="3.5" r="0.45" fill="#999"/><circle cx="1" cy="6" r="0.45" fill="#999"/></svg>
<div style="left:444.4px;top:476.1px;width:269.20000000000005px;height:7.099999999999966px;background:#dcdcdc;"></div>
<div style="left:444.4px;top:476.1px;width:231.60000000000002px;height:7.099999999999966px;background:#fff;border:0.5px solid #c8c8c8;box-sizing:border-box"></div>
<div style="left:444.4px;top:476.1px;width:7.5px;height:7.099999999999966px;background:#fff;border:0.5px solid #c8c8c8;box-sizing:border-box"></div>
<svg style="position:absolute;left:446.59999999999997px;top:477.65px;" width="3" height="4" viewBox="0 0 3 4"><path d="M2.6 0v4l-2.2-2z" fill="#555"/></svg>
<div style="left:706.8px;top:476.1px;width:6.800000000000068px;height:7.099999999999966px;background:#fff;border:0.5px solid #c8c8c8;box-sizing:border-box"></div>
<svg style="position:absolute;left:709.4px;top:477.65px;" width="3" height="4" viewBox="0 0 3 4"><path d="M0.4 0v4l2.2-2z" fill="#555"/></svg>
<div style="left:3.8px;top:486.2px;width:720.2px;height:10.800000000000011px;background:#f1f1f1;"></div>
<div style="left:3.8px;top:486.2px;width:720.2px;height:0.6px;background:#d4d4d4;"></div>
<div class="t" style="left:8px;top:487.20000000000005px;line-height:10px;font-size:6.0px;color:#444;font-weight:normal;">Ready</div>
<svg style="position:absolute;left:33.2px;top:488.1px;" width="7" height="7" viewBox="0 0 7 7"><rect x="0.5" y="2" width="6" height="4.5" fill="none" stroke="#999" stroke-width="0.6"/><path d="M3.5 2v4.5M0.5 4h6" stroke="#999" stroke-width="0.5"/><circle cx="1.5" cy="1.2" r="1" fill="#999"/></svg>
<div style="left:572.5px;top:486.5px;width:19px;height:10.50000000000001px;background:#c8c8c8;"></div>
<svg style="position:absolute;left:578.3px;top:488.1px;" width="8" height="7" viewBox="0 0 8 7"><rect x="0.5" y="0.5" width="7" height="6" fill="none" stroke="#666" stroke-width="0.6"/><path d="M0.5 2.5h7M0.5 4.5h7M3 0.5v6M5 0.5v6" stroke="#666" stroke-width="0.5"/></svg>
<svg style="position:absolute;left:597.3px;top:488.1px;" width="8" height="7" viewBox="0 0 8 7"><rect x="0.5" y="0.5" width="7" height="6" fill="none" stroke="#777" stroke-width="0.6"/><path d="M2 0.5v6M6 0.5v6" stroke="#777" stroke-width="0.6"/></svg>
<svg style="position:absolute;left:616.4px;top:488.1px;" width="8" height="7" viewBox="0 0 8 7"><rect x="0.5" y="0.5" width="7" height="6" fill="none" stroke="#777" stroke-width="0.6"/><path d="M2.5 0.5v3h3v-3" fill="none" stroke="#777" stroke-width="0.6"/></svg>
<div style="left:632.0px;top:491.20000000000005px;width:3.2px;height:0.9px;background:#555;"></div>
<div style="left:637.0px;top:491.35px;width:50px;height:0.5px;background:#999;"></div>
<div style="left:660.8px;top:488.6px;width:2px;height:6px;background:#555;"></div>
<svg style="position:absolute;left:689.0px;top:489.1px;" width="5" height="5" viewBox="0 0 5 5"><path d="M2.5 0v5M0 2.5h5" stroke="#555" stroke-width="0.9"/></svg>
<div class="t" style="left:702.0px;top:486.90000000000003px;line-height:10px;font-size:5.6px;color:#666;font-weight:normal;">100%</div>
<div style="left:3px;top:369.6px;width:0.8px;height:128px;background:#9a9a9a;"></div>
<div style="left:3px;top:497px;width:721px;height:0.7px;background:#9a9a9a;"></div>
</body></html>
